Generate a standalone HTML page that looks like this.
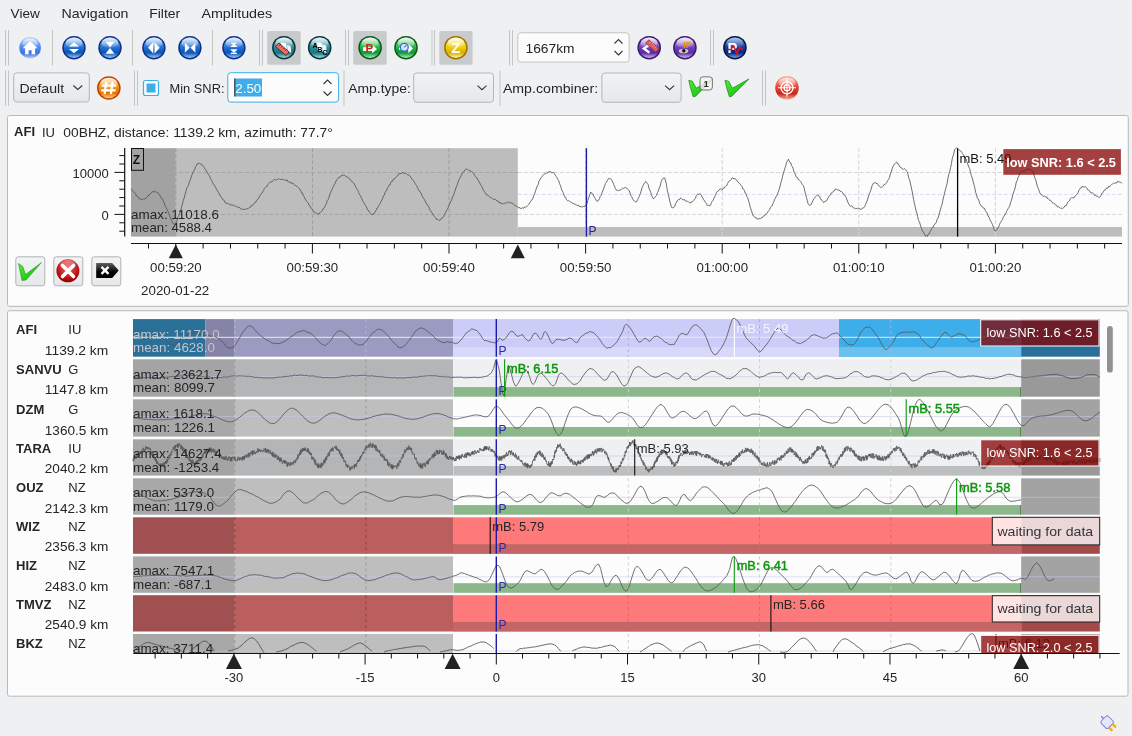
<!DOCTYPE html>
<html><head><meta charset="utf-8"><style>
html,body{margin:0;padding:0;background:#eff0f1;width:1132px;height:736px;overflow:hidden}
svg{display:block;will-change:transform}
text{font-family:"Liberation Sans",sans-serif;white-space:pre}
</style></head><body>
<svg width="1132" height="736" viewBox="0 0 1132 736">
<defs><linearGradient id="g_blue" x1="0" y1="0" x2="0" y2="1"><stop offset="0" stop-color="#9cc8f4"/><stop offset="0.5" stop-color="#1f6fd0"/><stop offset="0.75" stop-color="#0d55b8"/><stop offset="1" stop-color="#9cc8f4"/></linearGradient><linearGradient id="g_home" x1="0" y1="0" x2="0" y2="1"><stop offset="0" stop-color="#b8d0fa"/><stop offset="0.5" stop-color="#4f86f0"/><stop offset="0.75" stop-color="#3c74e0"/><stop offset="1" stop-color="#b8d0fa"/></linearGradient><linearGradient id="g_teal" x1="0" y1="0" x2="0" y2="1"><stop offset="0" stop-color="#a8d8dc"/><stop offset="0.5" stop-color="#2a8c96"/><stop offset="0.75" stop-color="#167580"/><stop offset="1" stop-color="#a8d8dc"/></linearGradient><linearGradient id="g_green" x1="0" y1="0" x2="0" y2="1"><stop offset="0" stop-color="#b0f0b8"/><stop offset="0.5" stop-color="#22b048"/><stop offset="0.75" stop-color="#10983a"/><stop offset="1" stop-color="#b0f0b8"/></linearGradient><linearGradient id="g_yellow" x1="0" y1="0" x2="0" y2="1"><stop offset="0" stop-color="#fff6b0"/><stop offset="0.5" stop-color="#f0cc00"/><stop offset="0.75" stop-color="#d8b000"/><stop offset="1" stop-color="#fff6b0"/></linearGradient><linearGradient id="g_purple" x1="0" y1="0" x2="0" y2="1"><stop offset="0" stop-color="#d0b8f0"/><stop offset="0.5" stop-color="#7040b8"/><stop offset="0.75" stop-color="#5a2aa0"/><stop offset="1" stop-color="#d0b8f0"/></linearGradient><linearGradient id="g_navy" x1="0" y1="0" x2="0" y2="1"><stop offset="0" stop-color="#7aa0e0"/><stop offset="0.5" stop-color="#0a3aa0"/><stop offset="0.75" stop-color="#062a80"/><stop offset="1" stop-color="#7aa0e0"/></linearGradient><linearGradient id="g_orange" x1="0" y1="0" x2="0" y2="1"><stop offset="0" stop-color="#ffd080"/><stop offset="0.5" stop-color="#f59010"/><stop offset="0.75" stop-color="#e87000"/><stop offset="1" stop-color="#ffd080"/></linearGradient><linearGradient id="g_red" x1="0" y1="0" x2="0" y2="1"><stop offset="0" stop-color="#ffb0a0"/><stop offset="0.5" stop-color="#e04030"/><stop offset="0.75" stop-color="#c82818"/><stop offset="1" stop-color="#ffb0a0"/></linearGradient><linearGradient id="hl" x1="0" y1="0" x2="0" y2="1"><stop offset="0" stop-color="#fff" stop-opacity="0.75"/><stop offset="1" stop-color="#fff" stop-opacity="0.05"/></linearGradient><linearGradient id="btn" x1="0" y1="0" x2="0" y2="1"><stop offset="0" stop-color="#f2f3f4"/><stop offset="1" stop-color="#e6e7e9"/></linearGradient><linearGradient id="chk" x1="0" y1="0" x2="1" y2="1"><stop offset="0" stop-color="#50f030"/><stop offset="1" stop-color="#10b010"/></linearGradient><radialGradient id="redx" cx="0.5" cy="0.35" r="0.6"><stop offset="0" stop-color="#ff6060"/><stop offset="1" stop-color="#a00000"/></radialGradient><linearGradient id="blk" x1="0" y1="0" x2="0" y2="1"><stop offset="0" stop-color="#606060"/><stop offset="0.6" stop-color="#000"/></linearGradient></defs>
<text x="10.6" y="18.0" font-size="13" fill="#232627" textLength="29.2" lengthAdjust="spacingAndGlyphs">View</text>
<text x="61.5" y="18.0" font-size="13" fill="#232627" textLength="67.0" lengthAdjust="spacingAndGlyphs">Navigation</text>
<text x="149.2" y="18.0" font-size="13" fill="#232627" textLength="31.0" lengthAdjust="spacingAndGlyphs">Filter</text>
<text x="201.4" y="18.0" font-size="13" fill="#232627" textLength="70.8" lengthAdjust="spacingAndGlyphs">Amplitudes</text>
<line x1="5.50" y1="30.00" x2="5.50" y2="65.50" stroke="#c3c4c6" stroke-width="1"/>
<line x1="8.50" y1="30.00" x2="8.50" y2="65.50" stroke="#c3c4c6" stroke-width="1"/>
<line x1="52.50" y1="30.00" x2="52.50" y2="65.50" stroke="#c3c4c6" stroke-width="1"/>
<line x1="132.50" y1="30.00" x2="132.50" y2="65.50" stroke="#c3c4c6" stroke-width="1"/>
<line x1="212.50" y1="30.00" x2="212.50" y2="65.50" stroke="#c3c4c6" stroke-width="1"/>
<line x1="259.50" y1="30.00" x2="259.50" y2="65.50" stroke="#c3c4c6" stroke-width="1"/>
<line x1="262.50" y1="30.00" x2="262.50" y2="65.50" stroke="#c3c4c6" stroke-width="1"/>
<line x1="345.50" y1="30.00" x2="345.50" y2="65.50" stroke="#c3c4c6" stroke-width="1"/>
<line x1="348.50" y1="30.00" x2="348.50" y2="65.50" stroke="#c3c4c6" stroke-width="1"/>
<line x1="432.00" y1="30.00" x2="432.00" y2="65.50" stroke="#c3c4c6" stroke-width="1"/>
<line x1="434.50" y1="30.00" x2="434.50" y2="65.50" stroke="#c3c4c6" stroke-width="1"/>
<line x1="509.50" y1="30.00" x2="509.50" y2="65.50" stroke="#c3c4c6" stroke-width="1"/>
<line x1="512.50" y1="30.00" x2="512.50" y2="65.50" stroke="#c3c4c6" stroke-width="1"/>
<line x1="710.50" y1="30.00" x2="710.50" y2="65.50" stroke="#c3c4c6" stroke-width="1"/>
<line x1="713.50" y1="30.00" x2="713.50" y2="65.50" stroke="#c3c4c6" stroke-width="1"/>
<line x1="5.50" y1="70.50" x2="5.50" y2="105.80" stroke="#c3c4c6" stroke-width="1"/>
<line x1="8.50" y1="70.50" x2="8.50" y2="105.80" stroke="#c3c4c6" stroke-width="1"/>
<line x1="134.50" y1="70.50" x2="134.50" y2="105.80" stroke="#c3c4c6" stroke-width="1"/>
<line x1="137.50" y1="70.50" x2="137.50" y2="105.80" stroke="#c3c4c6" stroke-width="1"/>
<line x1="344.00" y1="70.50" x2="344.00" y2="105.80" stroke="#c3c4c6" stroke-width="1"/>
<line x1="500.00" y1="70.50" x2="500.00" y2="105.80" stroke="#c3c4c6" stroke-width="1"/>
<line x1="762.50" y1="70.50" x2="762.50" y2="105.80" stroke="#c3c4c6" stroke-width="1"/>
<line x1="765.50" y1="70.50" x2="765.50" y2="105.80" stroke="#c3c4c6" stroke-width="1"/>
<rect x="267.2" y="31.0" width="33.5" height="33.7" rx="2" fill="#c9cacc"/>
<rect x="353.2" y="31.0" width="33.5" height="33.7" rx="2" fill="#c9cacc"/>
<rect x="439.3" y="31.0" width="33.3" height="33.7" rx="2" fill="#c9cacc"/>
<circle cx="30.1" cy="47.7" r="10.8" fill="url(#g_home)"/>
<ellipse cx="30.1" cy="43.2" rx="7.8" ry="4.9" fill="url(#hl)" opacity="1.00"/>
<polygon points="22.6,48.2 30.1,41.2 37.6,48.2" fill="#fff"/>
<path d="M25.1 47.7h10v6.5h-3.5v-4h-3v4h-3.5z" fill="#fff"/>
<circle cx="74.0" cy="47.7" r="11.7" fill="#0b2f8a"/>
<circle cx="74.0" cy="47.7" r="10.2" fill="url(#g_blue)"/>
<ellipse cx="74.0" cy="42.8" rx="8.4" ry="5.3" fill="url(#hl)" opacity="1.00"/>
<polygon points="69.0,46.5 74.0,42.2 79.0,46.5" fill="#fff"/>
<polygon points="69.0,48.9 74.0,53.2 79.0,48.9" fill="#fff"/>
<circle cx="110.0" cy="47.7" r="11.7" fill="#0b2f8a"/>
<circle cx="110.0" cy="47.7" r="10.2" fill="url(#g_blue)"/>
<ellipse cx="110.0" cy="42.8" rx="8.4" ry="5.3" fill="url(#hl)" opacity="1.00"/>
<polygon points="105.5,41.7 114.5,41.7 110.0,47.4" fill="#fff"/>
<polygon points="105.5,53.7 114.5,53.7 110.0,48.0" fill="#fff"/>
<circle cx="153.9" cy="47.7" r="11.7" fill="#0b2f8a"/>
<circle cx="153.9" cy="47.7" r="10.2" fill="url(#g_blue)"/>
<ellipse cx="153.9" cy="42.8" rx="8.4" ry="5.3" fill="url(#hl)" opacity="1.00"/>
<polygon points="153.3,42.0 148.1,47.7 153.3,53.4" fill="#fff"/>
<polygon points="154.5,42.0 159.7,47.7 154.5,53.4" fill="#fff"/>
<circle cx="189.9" cy="47.7" r="11.7" fill="#0b2f8a"/>
<circle cx="189.9" cy="47.7" r="10.2" fill="url(#g_blue)"/>
<ellipse cx="189.9" cy="42.8" rx="8.4" ry="5.3" fill="url(#hl)" opacity="1.00"/>
<polygon points="184.9,42.7 189.7,47.7 184.9,52.7" fill="#fff"/>
<polygon points="195.4,42.7 190.6,47.7 195.4,52.7" fill="#fff"/>
<circle cx="233.9" cy="47.7" r="11.7" fill="#0b2f8a"/>
<circle cx="233.9" cy="47.7" r="10.2" fill="url(#g_blue)"/>
<ellipse cx="233.9" cy="42.8" rx="8.4" ry="5.3" fill="url(#hl)" opacity="1.00"/>
<polygon points="233.9,43.4 230.3,46.9 237.5,46.9" fill="#fff"/>
<rect x="231.4" y="42.7" width="5" height="1.3" fill="#fff"/>
<polygon points="230.1,49.3 237.7,49.3 233.9,52.9" fill="#fff"/>
<rect x="230.9" y="52.6" width="6" height="1.4" fill="#fff"/>
<circle cx="283.9" cy="47.7" r="11.8" fill="#0a3440"/>
<circle cx="283.9" cy="47.7" r="10.3" fill="url(#g_teal)"/>
<ellipse cx="283.9" cy="42.7" rx="8.5" ry="5.3" fill="url(#hl)" opacity="1.00"/>
<polygon points="281,42.3 286,43.4 287.4,51.6 282.4,50.4" fill="#fff"/><polygon points="287,45 290.8,46.2 291.2,52.8 287.6,51.8" fill="#f2f2f2"/>
<g transform="translate(282.4 49.3) rotate(41)"><rect x="-6.8" y="-2.4" width="13.6" height="4.8" fill="#f06a6a" stroke="#401010" stroke-width="0.7"/><path d="M-4.5 -2.4v1.6M-2 -2.4v1.6M0.5 -2.4v1.6M3 -2.4v1.6" stroke="#401010" stroke-width="0.7"/></g>
<circle cx="319.7" cy="47.7" r="11.8" fill="#0a3440"/>
<circle cx="319.7" cy="47.7" r="10.3" fill="url(#g_teal)"/>
<ellipse cx="319.7" cy="42.7" rx="8.5" ry="5.3" fill="url(#hl)" opacity="1.00"/>
<polygon points="317,42 321.8,43 322.4,51.2 317.5,50.2" fill="#fff"/><polygon points="322,44.6 326.3,45.6 326.6,52.8 322.4,52" fill="#f2f2f2"/>
<text x="312.6" y="47.9" font-size="7.2" font-weight="bold" fill="#000">A</text>
<text x="317.2" y="51.7" font-size="7.2" font-weight="bold" fill="#000">B</text>
<text x="322.3" y="54.6" font-size="7.2" font-weight="bold" fill="#000">C</text>
<circle cx="370.1" cy="47.7" r="11.8" fill="#0a5a1a"/>
<circle cx="370.1" cy="47.7" r="10.3" fill="url(#g_green)"/>
<ellipse cx="370.1" cy="42.7" rx="8.5" ry="5.3" fill="url(#hl)" opacity="1.00"/>
<path d="M363 47.3h9.2v-2.3l4.8 4.1l-4.8 4.1v-2.3h-9.2z" fill="#fff"/>
<text x="365.6" y="51.8" font-size="11.5" font-weight="bold" fill="#f01010">P</text>
<circle cx="406.0" cy="47.7" r="11.8" fill="#0a5a1a"/>
<circle cx="406.0" cy="47.7" r="10.3" fill="url(#g_green)"/>
<ellipse cx="406.0" cy="42.7" rx="8.5" ry="5.3" fill="url(#hl)" opacity="1.00"/>
<path d="M399 47.4h9.3v-3.4l4.6 4.6l-4.6 4.6v-3.4h-9.3z" fill="#fff"/>
<circle cx="404.3" cy="47.3" r="3.9" fill="#cfeaff" stroke="#3a6ad8" stroke-width="1.3"/>
<path d="M404.3 47.3l1.8 -2" stroke="#222" stroke-width="1"/>
<circle cx="455.9" cy="47.7" r="11.8" fill="#9a7400"/>
<circle cx="455.9" cy="47.7" r="10.3" fill="url(#g_yellow)"/>
<ellipse cx="455.9" cy="42.7" rx="8.5" ry="5.3" fill="url(#hl)" opacity="1.00"/>
<text x="455.9" y="53.2" font-size="15" font-weight="bold" fill="#fff" text-anchor="middle">Z</text>
<circle cx="649.2" cy="47.7" r="11.8" fill="#3a1a70"/>
<circle cx="649.2" cy="47.7" r="10.3" fill="url(#g_purple)"/>
<ellipse cx="649.2" cy="42.7" rx="8.5" ry="5.3" fill="url(#hl)" opacity="1.00"/>
<path d="M649.4 44.8L643.9 48.5L649.4 52.6" fill="none" stroke="#fff" stroke-width="2.4" stroke-linejoin="miter"/>
<g transform="translate(652.3 46) rotate(42)"><rect x="-6.8" y="-2.3" width="13.6" height="4.6" fill="#e05a5a" stroke="#7a2020" stroke-width="0.6"/><path d="M-4 -2.3v2M-1.5 -2.3v1.5M1 -2.3v2M3.5 -2.3v1.5" stroke="#fff" stroke-width="0.5"/></g>
<circle cx="684.9" cy="47.7" r="11.8" fill="#3a1a70"/>
<circle cx="684.9" cy="47.7" r="10.3" fill="url(#g_purple)"/>
<ellipse cx="684.9" cy="42.7" rx="8.5" ry="5.3" fill="url(#hl)" opacity="1.00"/>
<text x="683.3" y="47.5" font-size="8.5" font-weight="bold" fill="#f08a10">IP</text>
<ellipse cx="683.5" cy="51" rx="4.8" ry="2.3" fill="#c8c8c8"/><circle cx="683.8" cy="50.8" r="1.7" fill="#111"/>
<circle cx="734.9" cy="47.7" r="11.8" fill="#02174a"/>
<circle cx="734.9" cy="47.7" r="10.3" fill="url(#g_navy)"/>
<ellipse cx="734.9" cy="42.7" rx="8.5" ry="5.3" fill="url(#hl)" opacity="0.55"/>
<text x="727.6" y="53" font-size="14.8" font-weight="bold" fill="#fff">P</text>
<path d="M727.7 49.6L731.2 49.4L733 45.8L735 48.6L736.8 54L739.6 46.9L742.8 49.7" fill="none" stroke="#f01010" stroke-width="1.5" stroke-linejoin="round"/>
<rect x="517.8" y="32.8" width="111.3" height="29.3" rx="3" fill="#fcfcfc" stroke="#bfc1c3" stroke-width="1"/>
<text x="525.5" y="52.6" font-size="13" fill="#232627" textLength="49.0" lengthAdjust="spacingAndGlyphs">1667km</text>
<path d="M614.5 43.5l4 -4l4 4M614.5 51l4 4l4 -4" fill="none" stroke="#31363b" stroke-width="1.1"/>
<rect x="13.7" y="72.9" width="75.6" height="29.1" rx="3" fill="url(#btn)" stroke="#b4b6b8" stroke-width="1"/>
<path d="M73.3 85.5l4.5 4l4.5 -4" fill="none" stroke="#31363b" stroke-width="1.1"/>
<text x="19.4" y="93.2" font-size="13" fill="#232627" textLength="44.7" lengthAdjust="spacingAndGlyphs">Default</text>
<circle cx="108.8" cy="88.0" r="11.8" fill="#c04000"/>
<circle cx="108.8" cy="88.0" r="10.3" fill="url(#g_orange)"/>
<ellipse cx="108.8" cy="83.0" rx="8.5" ry="5.3" fill="url(#hl)" opacity="1.00"/>
<path d="M106.3 81.8L104.6 94.2M112.6 81.8L110.9 94.2M101.8 85.6H116.2M101.2 90.4H115.6" stroke="#fff" stroke-width="2.3" fill="none"/>
<rect x="143.5" y="80.5" width="15" height="15" rx="2" fill="#fcfcfc" stroke="#3daee9" stroke-width="1.2"/>
<rect x="146.5" y="83.5" width="9" height="9" fill="#3daee9"/>
<text x="169.5" y="93.2" font-size="13" fill="#232627" textLength="55.0" lengthAdjust="spacingAndGlyphs">Min SNR:</text>
<rect x="227.8" y="72.7" width="110.8" height="29.4" rx="3" fill="#fcfcfc" stroke="#3daee9" stroke-width="1"/>
<rect x="234.5" y="78.5" width="27.5" height="18" fill="#3daee9"/>
<line x1="234.80" y1="78.50" x2="234.80" y2="96.50" stroke="#232627" stroke-width="1"/>
<text x="235.3" y="93.2" font-size="13" fill="#fcfcfc" textLength="26.0" lengthAdjust="spacingAndGlyphs">2.50</text>
<path d="M323.5 84l4 -4l4 4M323.5 91.5l4 4l4 -4" fill="none" stroke="#31363b" stroke-width="1.1"/>
<text x="348.3" y="93.2" font-size="13" fill="#232627" textLength="62.5" lengthAdjust="spacingAndGlyphs">Amp.type:</text>
<rect x="413.7" y="73.0" width="79.8" height="29.3" rx="3" fill="url(#btn)" stroke="#b4b6b8" stroke-width="1"/>
<path d="M477.5 85.7l4.5 4l4.5 -4" fill="none" stroke="#31363b" stroke-width="1.1"/>
<text x="502.9" y="93.2" font-size="13" fill="#232627" textLength="95.2" lengthAdjust="spacingAndGlyphs">Amp.combiner:</text>
<rect x="601.9" y="73.0" width="79.2" height="29.3" rx="3" fill="url(#btn)" stroke="#b4b6b8" stroke-width="1"/>
<path d="M665.1 85.7l4.5 4l4.5 -4" fill="none" stroke="#31363b" stroke-width="1.1"/>
<polygon points="688.8,80.3 692.4,81.2 696.2,88.2 712.7,79.0 695.4,96.4 693.2,96.8 690.4,87.4" fill="url(#chk)" stroke="#0a8a0a" stroke-width="0.7" stroke-linejoin="round"/>
<rect x="700" y="76.8" width="12.4" height="13.2" rx="3" fill="#f4f4f4" fill-opacity="0.8" stroke="#666" stroke-width="0.9"/>
<text x="706.2" y="87.3" font-size="9.5" font-weight="bold" fill="#333" text-anchor="middle">1</text>
<polygon points="725.0,80.3 728.6,81.2 732.4,88.2 748.9,79.0 731.6,96.4 729.4,96.8 726.6,87.4" fill="url(#chk)" stroke="#0a8a0a" stroke-width="0.7" stroke-linejoin="round"/>
<circle cx="787.0" cy="87.8" r="11.8" fill="url(#g_red)"/>
<ellipse cx="787.0" cy="82.8" rx="8.5" ry="5.3" fill="url(#hl)" opacity="1.00"/>
<circle cx="787.0" cy="87.8" r="6" fill="none" stroke="#fff" stroke-width="1.3"/><circle cx="787.0" cy="87.8" r="3" fill="none" stroke="#fff" stroke-width="1.3"/>
<path d="M778.0 87.8h18M787.0 78.8v18" stroke="#fff" stroke-width="1.1"/>
<rect x="7.5" y="115.5" width="1120.8" height="190.8" rx="2" fill="#fcfcfc" stroke="#b9babc" stroke-width="1"/>
<text x="14.1" y="136.4" font-size="13" fill="#232627" font-weight="bold">AFI</text>
<text x="42.0" y="136.6" font-size="13" fill="#232627">IU</text>
<text x="63.3" y="136.6" font-size="13" fill="#232627" textLength="269.5" lengthAdjust="spacingAndGlyphs">00BHZ, distance: 1139.2 km, azimuth: 77.7°</text>
<rect x="131.00" y="148.20" width="44.80" height="88.40" fill="#a2a2a2"/>
<rect x="175.80" y="148.20" width="342.00" height="88.40" fill="#bdbdbd"/>
<rect x="517.80" y="227.00" width="604.20" height="9.60" fill="#bdbdbd"/>
<line x1="131.0" y1="172.5" x2="517.8" y2="172.5" stroke="#a4a4a4" stroke-width="1" stroke-dasharray="4 2"/>
<line x1="131.0" y1="214.4" x2="517.8" y2="214.4" stroke="#a4a4a4" stroke-width="1" stroke-dasharray="4 2"/>
<line x1="517.8" y1="172.5" x2="1122.0" y2="172.5" stroke="#d6d6d6" stroke-width="1" stroke-dasharray="4 2"/>
<line x1="517.8" y1="214.4" x2="1122.0" y2="214.4" stroke="#d6d6d6" stroke-width="1" stroke-dasharray="4 2"/>
<line x1="517.80" y1="194.40" x2="1122.00" y2="194.40" stroke="#dcdcf4" stroke-width="1" stroke-dasharray="4 2"/>
<line x1="175.8" y1="148.2" x2="175.8" y2="236.6" stroke="#9c9c9c" stroke-width="1" stroke-dasharray="4 2"/>
<line x1="312.4" y1="148.2" x2="312.4" y2="236.6" stroke="#9c9c9c" stroke-width="1" stroke-dasharray="4 2"/>
<line x1="449.0" y1="148.2" x2="449.0" y2="236.6" stroke="#9c9c9c" stroke-width="1" stroke-dasharray="4 2"/>
<line x1="585.6" y1="148.2" x2="585.6" y2="236.6" stroke="#d4d4d4" stroke-width="1" stroke-dasharray="4 2"/>
<line x1="722.2" y1="148.2" x2="722.2" y2="236.6" stroke="#d4d4d4" stroke-width="1" stroke-dasharray="4 2"/>
<line x1="858.8" y1="148.2" x2="858.8" y2="236.6" stroke="#d4d4d4" stroke-width="1" stroke-dasharray="4 2"/>
<line x1="995.4" y1="148.2" x2="995.4" y2="236.6" stroke="#d4d4d4" stroke-width="1" stroke-dasharray="4 2"/>
<path d="M131.2 188.7L131.7 189.7L132.2 190.1L132.9 191.3L133.7 192.3L134.5 192.4L135.4 193.4L136.3 195.8L137.2 195.9L138.2 196.8L139.1 198.8L140.1 198.7L141.0 199.7L141.9 199.4L142.7 199.6L143.6 198.6L144.5 198.9L145.4 198.7L146.3 197.5L147.2 197.1L148.1 196.1L149.0 194.3L149.9 194.6L150.8 193.6L151.6 192.4L152.4 191.4L153.1 192.3L153.8 191.5L155.0 191.7L155.9 192.0L156.7 192.0L157.5 192.9L158.2 192.8L158.9 194.4L159.8 195.0L160.6 197.1L161.5 198.5L162.4 199.0L163.3 201.0L164.3 203.1L165.2 206.3L166.1 207.4L167.0 209.6L167.9 211.1L168.8 213.6L169.7 215.8L170.6 218.0L171.5 220.5L172.4 222.2L173.3 223.9L174.1 224.1L175.0 224.3L175.8 223.2L176.6 221.9L177.4 219.4L178.3 216.3L179.1 214.9L180.0 212.5L180.8 210.0L181.6 206.8L182.4 204.1L183.3 200.2L184.2 198.0L185.1 194.4L186.1 190.7L187.2 187.3L187.9 186.6L188.7 184.7L189.5 181.1L190.3 180.0L191.2 177.1L192.1 174.4L193.0 172.4L193.9 171.1L194.7 169.4L195.6 166.3L196.4 165.8L197.2 163.7L198.0 163.9L198.9 162.8L199.8 163.6L200.6 164.0L201.4 163.9L202.2 165.7L203.0 165.7L203.8 166.6L204.6 168.8L205.4 169.3L206.3 170.8L207.1 172.3L208.0 174.0L208.8 174.7L209.7 176.1L210.6 179.0L211.5 179.8L212.4 182.5L213.3 184.0L214.1 184.8L215.0 186.5L215.9 188.0L216.8 189.7L217.6 191.0L218.5 192.5L219.4 194.0L220.2 196.0L221.1 196.7L221.9 197.9L222.8 199.6L223.7 200.0L224.5 201.1L225.4 203.1L226.3 203.1L227.1 203.7L228.0 203.3L228.8 204.3L229.7 204.8L230.6 204.1L231.4 205.2L232.3 205.4L233.2 204.7L234.1 205.8L235.0 205.8L235.8 206.5L236.6 206.3L237.4 207.3L238.2 207.8L239.0 207.0L239.9 207.5L240.7 208.9L241.5 209.7L242.4 208.8L243.2 209.3L244.0 209.7L244.9 209.2L245.7 209.2L246.5 208.9L247.4 208.6L248.2 208.6L249.0 207.6L249.9 207.1L250.7 207.1L251.5 205.3L252.4 205.4L253.2 204.9L254.0 203.4L254.8 202.4L255.6 202.5L256.4 200.7L257.2 199.6L258.1 198.9L258.9 198.1L259.7 195.9L260.5 194.9L261.3 193.6L262.1 193.1L262.8 191.2L263.6 190.6L264.4 188.3L265.2 187.5L266.0 187.0L266.9 186.5L267.7 184.9L268.5 183.6L269.3 182.7L270.1 182.6L270.9 181.4L271.8 181.8L272.7 181.3L273.6 179.8L274.5 179.5L275.5 180.1L276.2 179.7L277.0 179.8L277.8 179.0L278.6 178.7L279.4 178.9L280.3 179.8L281.1 179.0L282.0 179.3L282.8 179.5L283.7 179.7L284.6 179.9L285.4 180.9L286.2 179.9L287.1 179.9L287.8 181.7L288.6 181.9L289.5 182.4L290.4 181.9L291.2 183.2L292.0 183.6L292.8 182.9L293.6 184.2L294.4 184.9L295.2 185.3L296.0 185.7L296.8 186.1L297.6 187.0L298.4 187.7L299.3 188.4L300.1 190.2L300.9 190.8L301.7 192.9L302.5 193.0L303.4 195.8L304.2 196.9L305.1 198.7L305.9 200.2L306.8 201.6L307.6 202.5L308.4 203.0L309.2 205.5L309.9 205.7L310.6 207.0L311.3 208.5L312.4 209.7L313.4 210.7L314.3 212.6L315.1 212.9L315.9 213.0L316.7 213.3L317.5 214.4L318.4 213.7L319.2 213.9L319.9 212.7L320.7 211.8L321.5 211.4L322.2 210.9L323.0 208.6L323.8 208.3L324.7 207.0L325.6 205.2L326.4 203.7L327.2 200.6L328.1 199.6L328.9 197.8L329.8 194.3L330.7 192.4L331.6 190.2L332.5 188.5L333.4 186.3L334.3 184.6L335.1 183.6L336.0 181.0L336.8 179.8L337.6 178.8L338.4 177.7L339.2 176.8L340.0 177.5L340.8 176.7L341.7 175.1L342.6 175.5L343.5 175.2L344.3 175.3L345.0 175.6L345.8 176.5L346.7 176.9L347.5 177.1L348.4 177.5L349.2 178.5L350.1 179.0L350.9 180.5L351.8 181.7L352.6 182.2L353.4 182.7L354.2 183.9L355.1 185.5L356.0 187.4L356.9 189.2L357.8 190.3L358.7 192.7L359.5 194.3L360.4 195.7L361.2 197.4L362.1 199.3L362.9 201.2L363.7 202.2L364.6 204.2L365.5 205.4L366.3 206.7L367.1 208.7L368.0 210.4L368.8 210.8L369.6 212.4L370.4 213.3L371.3 214.6L372.1 214.9L372.9 213.8L373.7 214.1L374.6 213.0L375.4 211.1L376.2 210.1L377.0 208.0L377.8 207.6L378.7 205.7L379.5 204.5L380.4 202.8L381.2 201.3L381.9 200.0L382.7 198.2L383.5 195.9L384.3 195.0L385.1 192.5L385.9 191.1L386.7 190.5L387.5 187.8L388.4 186.4L389.2 185.0L390.0 185.0L390.8 182.7L391.6 181.3L392.5 181.4L393.3 179.2L394.2 179.3L395.0 178.0L395.8 177.3L396.7 176.7L397.5 175.3L398.4 175.0L399.2 173.3L400.0 174.0L400.9 173.3L401.8 173.4L402.6 172.4L403.5 173.4L404.3 173.8L405.2 172.7L406.1 173.4L406.9 174.2L407.8 175.2L408.6 174.9L409.5 175.5L410.3 176.4L411.1 177.9L411.9 179.1L412.7 179.6L413.5 180.8L414.3 182.1L415.1 183.3L415.9 184.8L416.7 185.6L417.5 187.6L418.3 189.7L419.1 190.2L420.0 192.1L420.8 192.7L421.7 195.1L422.6 196.8L423.5 198.2L424.4 199.6L425.2 201.1L426.1 202.9L426.9 204.8L427.8 205.1L428.6 206.4L429.5 208.9L430.4 210.7L431.2 211.6L432.1 213.0L433.0 214.9L433.8 215.4L434.6 216.7L435.4 217.6L436.2 219.1L437.0 219.2L437.9 219.4L438.8 220.3L439.7 220.5L440.6 219.0L441.4 219.0L442.3 217.6L443.2 217.3L444.1 215.5L444.9 213.8L445.7 212.3L446.6 210.3L447.4 209.3L448.3 207.2L449.2 204.9L450.0 203.2L450.9 201.1L451.7 199.8L452.5 196.9L453.4 195.9L454.4 192.5L455.3 190.1L456.1 187.3L457.0 185.4L457.8 183.0L458.7 180.4L459.6 178.4L460.5 177.0L461.3 175.6L462.2 173.3L463.1 172.5L463.9 171.8L464.8 170.1L465.8 169.1L466.8 168.9L467.6 169.7L468.4 169.9L469.2 170.7L470.1 171.1L471.0 170.8L471.8 171.6L472.7 172.6L473.6 173.5L474.5 175.3L475.4 176.7L476.3 177.8L477.2 178.0L478.0 180.4L478.9 181.1L479.8 183.0L480.7 185.2L481.5 185.9L482.4 187.6L483.3 190.4L484.2 191.1L485.0 192.5L485.9 194.0L486.8 195.1L487.7 194.9L488.6 196.1L489.5 196.9L490.4 197.5L491.2 197.5L492.1 198.5L493.0 199.5L493.8 198.9L494.6 199.6L495.4 199.3L496.3 200.1L497.2 201.2L498.0 200.8L498.8 202.5L499.5 203.0L500.3 202.1L501.1 203.8L501.8 203.1L502.6 203.9L503.5 203.9L504.3 203.0L505.1 203.4L505.9 203.0L506.7 202.9L507.6 201.8L508.6 202.5L509.7 203.0L510.4 202.8L511.2 202.9L512.0 202.7L512.8 203.8L513.7 204.2L514.6 205.4L515.5 205.9L516.4 206.3L517.3 206.3L518.2 207.5L519.1 207.9L520.0 207.5L520.8 208.8L521.6 208.4L522.5 207.5L523.3 208.6L524.2 207.1L525.0 207.1L525.8 207.3L526.6 206.6L527.3 205.9L528.1 205.3L528.9 204.2L529.6 203.0L530.4 201.8L531.2 200.4L532.1 199.9L532.9 198.1L533.8 195.7L534.7 193.7L535.6 190.7L536.5 188.1L537.3 185.9L538.2 184.4L539.0 181.0L539.9 179.9L540.7 178.0L541.6 177.5L542.5 175.7L543.3 174.8L544.2 174.2L545.0 173.8L545.8 173.7L546.6 172.7L547.4 173.3L548.2 171.9L549.0 172.0L549.8 171.6L550.7 171.6L551.4 172.7L552.2 172.8L553.0 172.2L553.8 172.7L554.5 173.8L555.4 175.2L556.2 176.5L557.0 177.8L557.8 179.4L558.7 180.7L559.5 183.4L560.4 185.5L561.3 188.5L562.1 190.8L563.0 192.4L563.8 194.4L564.6 196.8L565.5 197.0L566.3 199.3L567.1 200.3L567.9 201.0L568.7 200.6L569.5 201.3L570.5 201.9L571.7 202.5L572.4 203.4L573.1 203.3L573.9 203.2L574.7 204.5L575.6 204.4L576.5 205.0L577.4 205.6L578.3 204.9L579.2 206.5L580.1 206.7L581.0 206.6L581.9 206.9L582.7 206.9L583.5 206.5L584.2 206.9L584.8 205.9L586.0 205.4L587.0 203.6L587.8 200.7L588.5 198.2L589.2 196.4L589.9 194.3L590.8 192.1L591.5 193.2L592.3 193.7L593.0 194.0L593.7 196.0L594.5 197.4L595.3 198.6L596.1 200.3L597.0 201.4L598.0 200.1L598.7 200.2L599.5 198.6L600.3 196.1L601.1 195.3L602.0 192.7L602.8 191.0L603.7 188.3L604.6 186.1L605.5 183.4L606.3 182.3L607.2 180.9L607.9 179.6L608.7 178.3L609.6 178.7L610.5 178.8L611.3 179.3L612.1 180.7L612.9 182.4L613.7 184.5L614.5 186.2L615.3 188.3L616.1 189.9L617.0 190.4L617.8 190.4L618.5 190.8L619.3 190.0L620.1 189.9L620.9 189.9L621.7 188.8L622.5 188.0L623.4 188.7L624.2 188.1L625.0 187.4L625.8 187.4L626.6 188.0L627.5 189.0L628.3 189.6L629.2 190.8L630.1 193.0L630.9 195.8L631.8 196.6L632.6 198.9L633.5 200.0L634.4 201.1L635.2 201.7L636.1 202.1L637.0 201.1L637.8 199.5L638.7 197.6L639.6 195.4L640.5 193.3L641.4 190.0L642.2 187.3L643.1 185.7L643.9 183.8L644.8 182.9L645.6 181.3L646.5 182.2L647.3 183.4L648.2 184.7L649.0 188.5L649.8 189.9L650.7 192.3L651.5 195.2L652.3 196.6L653.1 198.6L654.0 198.5L654.8 197.5L655.7 196.2L656.5 195.5L657.4 192.6L658.3 191.0L659.2 188.0L660.1 186.2L660.9 182.8L661.6 180.7L662.3 179.1L662.9 178.9L664.3 177.6L665.0 178.9L666.0 182.5L666.7 186.3L667.4 190.6L668.3 194.5L669.1 198.0L670.0 202.2L671.0 205.6L671.9 207.7L672.6 207.8L673.3 207.4L674.0 207.4L674.8 206.3L675.5 203.4L676.3 202.9L677.2 200.6L678.1 199.9L679.1 199.4L679.8 199.3L680.6 197.9L681.4 198.5L682.3 199.3L683.1 200.2L684.1 199.3L685.0 200.1L685.9 201.5L686.8 200.7L687.7 201.6L688.6 201.8L689.4 202.6L690.2 203.1L691.0 201.8L692.0 202.2L692.9 201.4L693.7 200.6L694.6 198.9L695.4 198.3L696.1 196.1L696.9 195.2L697.7 194.0L698.5 194.4L699.4 193.9L700.2 194.0L701.1 194.7L701.9 196.8L702.8 198.0L703.7 199.8L704.6 200.9L705.5 202.6L706.4 203.4L707.2 205.4L708.1 205.0L708.9 205.8L709.8 205.9L710.7 204.8L711.5 202.5L712.4 201.1L713.2 200.2L714.0 198.0L714.8 196.5L715.6 194.7L716.4 192.5L717.2 192.1L718.1 191.0L719.0 189.7L719.9 189.4L720.7 188.8L721.6 189.1L722.5 189.8L723.4 188.0L724.4 188.1L725.2 186.6L726.0 185.6L726.8 185.4L727.6 183.5L728.4 181.9L729.3 180.9L730.2 180.5L731.1 179.5L732.0 177.9L732.9 177.9L733.9 179.1L734.6 178.2L735.4 179.3L736.2 179.6L737.0 181.0L737.9 181.6L738.7 182.9L739.5 183.6L740.4 184.2L741.2 185.5L742.1 186.6L742.9 189.1L743.7 189.3L744.5 190.5L745.2 193.4L745.9 193.4L746.9 196.6L747.8 197.7L748.6 200.9L749.4 203.2L750.1 206.8L750.9 209.1L751.7 211.5L752.4 213.9L753.3 215.9L754.2 216.4L754.9 217.5L755.7 217.8L756.5 217.7L757.3 219.2L758.1 218.9L758.9 219.2L759.7 218.1L760.6 218.4L761.4 217.9L762.3 217.8L763.2 216.2L764.0 215.9L764.9 215.4L765.7 213.9L766.5 213.8L767.3 213.1L768.1 211.5L768.9 210.7L769.7 209.4L770.6 207.4L771.4 206.2L772.2 205.8L773.0 203.2L773.8 201.8L774.6 199.6L775.4 198.1L776.2 196.3L776.9 195.8L777.9 192.9L778.9 190.1L779.8 187.1L780.8 183.1L781.7 180.2L782.6 176.2L783.5 172.7L784.3 170.5L785.1 167.7L785.8 165.4L786.4 162.9L787.7 160.5L788.4 159.2L789.1 161.0L790.0 162.4L790.7 162.6L791.5 165.5L792.3 166.5L793.2 168.7L794.1 172.2L795.0 173.7L795.9 176.0L796.6 177.4L797.4 177.5L798.2 179.6L799.1 179.7L799.9 180.8L800.7 181.6L801.6 183.3L802.3 184.5L803.1 185.3L804.0 187.4L804.8 190.9L805.6 194.5L806.4 197.3L807.3 200.5L808.1 203.8L809.1 205.0L809.8 205.6L810.6 205.1L811.5 204.0L812.3 201.9L813.2 200.1L814.0 198.8L814.9 197.6L815.8 196.4L816.6 195.6L817.4 194.9L818.2 195.8L819.0 195.6L819.8 196.9L820.5 198.8L821.3 200.0L822.1 200.4L822.9 201.3L823.7 202.7L824.6 201.5L825.4 201.3L826.2 201.1L827.0 200.0L827.9 198.2L828.8 196.5L829.7 195.3L830.5 194.8L831.4 192.9L832.3 192.6L833.2 191.3L834.1 191.1L835.0 189.3L835.9 189.4L836.8 189.2L837.7 190.0L838.5 190.1L839.4 190.1L840.3 191.4L841.2 191.2L842.0 192.2L842.8 192.8L843.6 194.4L844.6 194.9L845.4 196.2L846.2 197.5L847.0 199.9L847.8 202.0L848.6 203.7L849.6 205.5L850.8 206.4L851.5 205.9L852.2 206.1L852.9 207.5L853.7 208.0L854.6 207.9L855.4 208.7L856.3 208.6L857.2 208.3L858.1 208.3L859.0 208.1L859.9 209.1L860.7 209.4L861.6 209.1L862.4 208.1L863.2 207.9L863.9 207.7L864.8 206.3L865.7 204.3L866.6 202.0L867.5 199.9L868.3 196.9L869.1 194.4L869.9 192.7L870.6 190.8L871.4 187.9L872.1 185.7L872.8 184.1L873.5 183.1L874.5 182.9L875.4 182.3L876.3 183.7L877.2 183.3L878.0 184.7L878.9 186.0L879.7 186.5L880.6 187.4L881.5 187.1L882.4 186.9L883.3 186.0L884.2 184.4L885.1 184.5L886.0 183.4L886.9 182.2L887.8 180.4L888.7 179.3L889.6 177.3L890.5 173.3L891.4 171.4L892.3 168.3L893.2 166.1L894.1 164.8L894.9 163.6L895.8 162.6L896.7 162.1L897.5 163.9L898.3 163.8L899.1 165.3L900.0 167.2L900.9 167.4L901.7 167.9L902.5 169.2L903.4 169.4L904.2 168.6L905.1 169.3L906.0 170.2L907.0 171.6L908.0 174.4L908.7 177.9L909.5 179.4L910.3 182.9L911.1 186.5L911.9 190.2L912.8 195.0L913.6 199.4L914.4 203.6L915.3 207.2L916.1 211.1L916.9 213.0L917.6 216.3L918.6 220.6L919.5 222.1L920.4 225.1L921.3 227.9L922.2 229.7L923.0 231.9L923.9 232.7L924.6 234.2L925.4 236.2L926.4 235.5L927.3 236.4L928.2 234.2L929.0 234.1L929.9 231.9L930.9 230.2L931.6 228.4L932.4 227.2L933.2 227.3L934.0 225.2L934.8 223.9L935.6 223.5L936.5 221.9L937.3 218.8L938.1 218.1L938.9 215.1L939.7 212.3L940.5 209.1L941.3 206.6L942.1 204.5L942.9 200.1L943.7 196.5L944.6 193.1L945.4 189.6L946.2 186.6L947.1 183.7L947.9 178.4L948.8 174.4L949.7 171.4L950.6 167.5L951.4 163.6L952.2 159.0L952.9 156.2L953.5 154.7L954.7 149.6L955.3 148.9L956.2 148.3L956.9 147.8L957.8 148.5L958.7 149.6L959.6 150.3L960.7 151.0L961.7 152.1L962.5 153.4L963.3 154.5L964.2 156.1L965.1 158.2L966.0 159.0L966.9 161.7L967.9 164.6L968.9 167.3L969.7 168.6L970.5 172.6L971.3 175.4L972.1 177.6L973.0 181.1L973.9 184.5L974.8 187.6L975.6 192.3L976.4 194.3L977.2 197.7L978.0 198.7L978.9 200.7L979.7 203.7L980.5 204.8L981.3 206.2L982.1 206.5L982.9 207.1L983.6 208.3L984.4 208.2L985.2 210.2L986.1 211.7L987.1 213.1L988.1 215.8L989.0 217.4L990.0 219.7L990.8 221.3L991.7 222.9L992.4 224.4L993.5 227.2L994.2 229.8L995.0 230.8L996.1 230.6L996.8 229.8L997.7 227.8L998.5 227.4L999.5 224.6L1000.4 222.5L1001.4 221.1L1002.4 219.6L1003.3 217.1L1004.1 216.2L1004.9 214.2L1005.7 213.9L1006.4 211.7L1007.2 210.3L1008.0 208.8L1008.8 207.6L1009.7 205.9L1010.5 202.9L1011.3 200.5L1012.1 198.1L1012.9 194.3L1013.8 191.8L1014.7 189.3L1015.5 186.1L1016.3 182.0L1017.2 180.6L1018.0 177.5L1018.7 176.6L1019.7 173.6L1020.6 172.0L1021.5 171.7L1022.3 171.7L1023.2 170.7L1024.1 171.1L1025.0 170.6L1025.8 169.8L1026.6 169.4L1027.4 169.4L1028.2 169.0L1029.0 168.9L1029.8 169.4L1030.7 170.1L1031.5 170.3L1032.3 170.6L1033.1 172.3L1033.9 174.6L1034.7 177.4L1035.5 179.3L1036.3 182.0L1037.1 185.2L1037.9 187.7L1038.7 189.5L1039.5 192.1L1040.3 193.9L1041.0 194.2L1041.7 195.2L1042.3 195.7L1043.1 196.1L1043.8 196.5L1044.7 196.1L1045.7 197.0L1046.8 196.9L1047.4 198.6L1048.1 198.4L1048.9 199.2L1049.6 200.5L1050.5 200.3L1051.3 200.9L1052.2 202.7L1053.1 203.2L1053.9 203.1L1054.8 203.8L1055.7 205.1L1056.6 205.2L1057.5 207.1L1058.3 206.6L1059.1 207.2L1059.9 207.8L1060.6 208.2L1061.3 208.2L1062.3 208.4L1063.3 208.1L1064.2 207.0L1065.1 205.6L1066.0 206.0L1066.8 204.4L1067.5 202.3L1068.3 201.8L1069.0 201.3L1069.6 200.8L1070.3 198.6L1071.4 197.7L1072.3 197.9L1073.1 197.4L1073.9 197.7L1074.7 197.1L1075.7 195.4L1076.4 194.7L1077.2 193.9L1077.9 193.1L1078.7 190.7L1079.5 189.7L1080.4 188.0L1081.2 187.9L1082.1 186.2L1083.0 187.3L1083.8 186.6L1084.6 187.0L1085.4 186.6L1086.2 187.5L1087.1 188.6L1087.9 190.0L1088.8 190.3L1089.6 190.7L1090.4 192.6L1091.2 192.7L1092.0 193.0L1092.9 193.1L1093.7 193.9L1094.6 195.5L1095.4 194.9L1096.2 196.0L1096.9 196.6L1097.7 196.4L1098.5 197.2L1099.3 197.3L1100.1 196.8L1100.8 195.9L1101.6 194.2L1102.3 193.0L1103.1 192.5L1103.8 191.1L1104.7 189.8L1105.5 189.9L1106.5 187.9L1107.2 188.3L1108.0 187.9L1108.9 186.0L1109.8 186.7L1110.7 185.3L1111.6 184.4L1112.6 183.9L1113.5 183.1L1114.4 183.4L1115.2 182.8L1116.0 183.2L1116.8 182.8L1117.4 181.4L1118.8 181.8L1119.9 182.1L1120.8 182.4L1121.5 183.1L1122.0 183.5" fill="none" stroke="#555" stroke-width="1" stroke-opacity="0.85"/>
<rect x="131.5" y="148.5" width="12" height="21.8" fill="none" stroke="#111" stroke-width="1"/>
<text x="132.8" y="163.5" font-size="12" fill="#111" font-weight="bold">Z</text>
<text x="131.0" y="218.5" font-size="13" fill="#232627" textLength="88.0" lengthAdjust="spacingAndGlyphs">amax: 11018.6</text>
<text x="131.0" y="232.4" font-size="13" fill="#232627" textLength="81.0" lengthAdjust="spacingAndGlyphs">mean: 4588.4</text>
<line x1="586.40" y1="148.20" x2="586.40" y2="236.60" stroke="#1c1ca8" stroke-width="1.4"/>
<text x="588.5" y="235.2" font-size="12" fill="#2424a0">P</text>
<line x1="957.60" y1="148.50" x2="957.60" y2="236.60" stroke="#000" stroke-width="1.3"/>
<text x="959.5" y="162.5" font-size="13" fill="#111">mB: 5.49</text>
<rect x="1003.30" y="149.10" width="117.60" height="25.70" fill="#840000" fill-opacity="0.74"/>
<text x="1006.2" y="166.8" font-size="13" fill="#fff" font-weight="bold" textLength="109.8" lengthAdjust="spacingAndGlyphs">low SNR: 1.6 &lt; 2.5</text>
<line x1="124.70" y1="148.00" x2="124.70" y2="236.60" stroke="#111" stroke-width="1.2"/>
<line x1="119.30" y1="231.20" x2="124.70" y2="231.20" stroke="#111" stroke-width="1"/>
<line x1="119.30" y1="222.80" x2="124.70" y2="222.80" stroke="#111" stroke-width="1"/>
<line x1="114.50" y1="214.40" x2="124.70" y2="214.40" stroke="#111" stroke-width="1"/>
<line x1="119.30" y1="206.00" x2="124.70" y2="206.00" stroke="#111" stroke-width="1"/>
<line x1="119.30" y1="197.60" x2="124.70" y2="197.60" stroke="#111" stroke-width="1"/>
<line x1="119.30" y1="189.20" x2="124.70" y2="189.20" stroke="#111" stroke-width="1"/>
<line x1="119.30" y1="180.80" x2="124.70" y2="180.80" stroke="#111" stroke-width="1"/>
<line x1="114.50" y1="172.40" x2="124.70" y2="172.40" stroke="#111" stroke-width="1"/>
<line x1="119.30" y1="164.00" x2="124.70" y2="164.00" stroke="#111" stroke-width="1"/>
<line x1="119.30" y1="155.60" x2="124.70" y2="155.60" stroke="#111" stroke-width="1"/>
<text x="108.7" y="177.7" font-size="13" fill="#232627" text-anchor="end">10000</text>
<text x="108.7" y="219.5" font-size="13" fill="#232627" text-anchor="end">0</text>
<line x1="131.00" y1="243.50" x2="1122.00" y2="243.50" stroke="#111" stroke-width="1.2"/>
<line x1="148.48" y1="243.50" x2="148.48" y2="248.50" stroke="#111" stroke-width="1"/>
<line x1="175.80" y1="243.50" x2="175.80" y2="253.50" stroke="#111" stroke-width="1"/>
<line x1="203.12" y1="243.50" x2="203.12" y2="248.50" stroke="#111" stroke-width="1"/>
<line x1="230.44" y1="243.50" x2="230.44" y2="248.50" stroke="#111" stroke-width="1"/>
<line x1="257.76" y1="243.50" x2="257.76" y2="248.50" stroke="#111" stroke-width="1"/>
<line x1="285.08" y1="243.50" x2="285.08" y2="248.50" stroke="#111" stroke-width="1"/>
<line x1="312.40" y1="243.50" x2="312.40" y2="253.50" stroke="#111" stroke-width="1"/>
<line x1="339.72" y1="243.50" x2="339.72" y2="248.50" stroke="#111" stroke-width="1"/>
<line x1="367.04" y1="243.50" x2="367.04" y2="248.50" stroke="#111" stroke-width="1"/>
<line x1="394.36" y1="243.50" x2="394.36" y2="248.50" stroke="#111" stroke-width="1"/>
<line x1="421.68" y1="243.50" x2="421.68" y2="248.50" stroke="#111" stroke-width="1"/>
<line x1="449.00" y1="243.50" x2="449.00" y2="253.50" stroke="#111" stroke-width="1"/>
<line x1="476.32" y1="243.50" x2="476.32" y2="248.50" stroke="#111" stroke-width="1"/>
<line x1="503.64" y1="243.50" x2="503.64" y2="248.50" stroke="#111" stroke-width="1"/>
<line x1="530.96" y1="243.50" x2="530.96" y2="248.50" stroke="#111" stroke-width="1"/>
<line x1="558.28" y1="243.50" x2="558.28" y2="248.50" stroke="#111" stroke-width="1"/>
<line x1="585.60" y1="243.50" x2="585.60" y2="253.50" stroke="#111" stroke-width="1"/>
<line x1="612.92" y1="243.50" x2="612.92" y2="248.50" stroke="#111" stroke-width="1"/>
<line x1="640.24" y1="243.50" x2="640.24" y2="248.50" stroke="#111" stroke-width="1"/>
<line x1="667.56" y1="243.50" x2="667.56" y2="248.50" stroke="#111" stroke-width="1"/>
<line x1="694.88" y1="243.50" x2="694.88" y2="248.50" stroke="#111" stroke-width="1"/>
<line x1="722.20" y1="243.50" x2="722.20" y2="253.50" stroke="#111" stroke-width="1"/>
<line x1="749.52" y1="243.50" x2="749.52" y2="248.50" stroke="#111" stroke-width="1"/>
<line x1="776.84" y1="243.50" x2="776.84" y2="248.50" stroke="#111" stroke-width="1"/>
<line x1="804.16" y1="243.50" x2="804.16" y2="248.50" stroke="#111" stroke-width="1"/>
<line x1="831.48" y1="243.50" x2="831.48" y2="248.50" stroke="#111" stroke-width="1"/>
<line x1="858.80" y1="243.50" x2="858.80" y2="253.50" stroke="#111" stroke-width="1"/>
<line x1="886.12" y1="243.50" x2="886.12" y2="248.50" stroke="#111" stroke-width="1"/>
<line x1="913.44" y1="243.50" x2="913.44" y2="248.50" stroke="#111" stroke-width="1"/>
<line x1="940.76" y1="243.50" x2="940.76" y2="248.50" stroke="#111" stroke-width="1"/>
<line x1="968.08" y1="243.50" x2="968.08" y2="248.50" stroke="#111" stroke-width="1"/>
<line x1="995.40" y1="243.50" x2="995.40" y2="253.50" stroke="#111" stroke-width="1"/>
<line x1="1022.72" y1="243.50" x2="1022.72" y2="248.50" stroke="#111" stroke-width="1"/>
<line x1="1050.04" y1="243.50" x2="1050.04" y2="248.50" stroke="#111" stroke-width="1"/>
<line x1="1077.36" y1="243.50" x2="1077.36" y2="248.50" stroke="#111" stroke-width="1"/>
<line x1="1104.68" y1="243.50" x2="1104.68" y2="248.50" stroke="#111" stroke-width="1"/>
<text x="150.0" y="271.6" font-size="13" fill="#232627" textLength="51.7" lengthAdjust="spacingAndGlyphs">00:59:20</text>
<text x="286.5" y="271.6" font-size="13" fill="#232627" textLength="51.7" lengthAdjust="spacingAndGlyphs">00:59:30</text>
<text x="423.1" y="271.6" font-size="13" fill="#232627" textLength="51.7" lengthAdjust="spacingAndGlyphs">00:59:40</text>
<text x="559.8" y="271.6" font-size="13" fill="#232627" textLength="51.7" lengthAdjust="spacingAndGlyphs">00:59:50</text>
<text x="696.4" y="271.6" font-size="13" fill="#232627" textLength="51.7" lengthAdjust="spacingAndGlyphs">01:00:00</text>
<text x="832.9" y="271.6" font-size="13" fill="#232627" textLength="51.7" lengthAdjust="spacingAndGlyphs">01:00:10</text>
<text x="969.6" y="271.6" font-size="13" fill="#232627" textLength="51.7" lengthAdjust="spacingAndGlyphs">01:00:20</text>
<text x="141.1" y="295.2" font-size="13" fill="#232627" textLength="68.1" lengthAdjust="spacingAndGlyphs">2020-01-22</text>
<polygon points="175.8,244.4 168.8,258.2 182.8,258.2" fill="#222"/>
<polygon points="517.8,244.4 510.8,258.2 524.8,258.2" fill="#222"/>
<rect x="15.8" y="256.8" width="29" height="29" rx="2.5" fill="url(#btn)" stroke="#b0b2b4" stroke-width="1"/>
<rect x="53.8" y="256.8" width="29" height="29" rx="2.5" fill="url(#btn)" stroke="#b0b2b4" stroke-width="1"/>
<rect x="91.8" y="256.8" width="29" height="29" rx="2.5" fill="url(#btn)" stroke="#b0b2b4" stroke-width="1"/>
<polygon points="18.5,263.5 22.8,266.5 25.5,274.5 41.5,262.5 26,280 22,280.5" fill="url(#chk)" stroke="#009000" stroke-width="0.5"/>
<circle cx="67.9" cy="270.8" r="11.5" fill="url(#redx)"/><ellipse cx="67.9" cy="265" rx="8" ry="5" fill="url(#hl)" opacity="0.5"/>
<path d="M62.5 265.5l11 11M73.5 265.5l-11 11" stroke="#fff" stroke-width="3.6" stroke-linecap="round"/>
<path d="M96.2 263h16l6.5 7.5l-6.5 7.5h-16z" fill="url(#blk)"/>
<path d="M101.5 266.8l7 7M108.5 266.8l-7 7" stroke="#fff" stroke-width="2.4"/>
<rect x="7.5" y="310.7" width="1120.5" height="385.5" rx="2" fill="#fcfcfc" stroke="#b9babc" stroke-width="1"/>
<clipPath id="c2"><rect x="0" y="300" width="1132" height="353.5"/></clipPath>
<g clip-path="url(#c2)">
<text x="16.1" y="333.6" font-size="13" fill="#232627" font-weight="bold">AFI</text>
<text x="68.3" y="333.6" font-size="13" fill="#232627">IU</text>
<text x="108.3" y="354.8" font-size="13" fill="#232627" textLength="63.5" lengthAdjust="spacingAndGlyphs" text-anchor="end">1139.2 km</text>
<rect x="133.00" y="319.10" width="72.20" height="37.60" fill="#2a7097"/>
<rect x="205.20" y="319.10" width="29.60" height="37.60" fill="#8583a6"/>
<rect x="234.80" y="319.10" width="218.20" height="37.60" fill="#9b9ac0"/>
<rect x="453.00" y="319.10" width="386.00" height="37.60" fill="#ccccf8"/>
<rect x="453.00" y="347.10" width="386.00" height="9.60" fill="#d8d8fa"/>
<rect x="839.00" y="319.10" width="182.18" height="37.60" fill="#3daee9"/>
<rect x="839.00" y="347.10" width="182.18" height="9.60" fill="#6cc0ee"/>
<rect x="1021.18" y="319.10" width="78.62" height="37.60" fill="#2a6f9a"/>
<line x1="133.00" y1="337.30" x2="1021.18" y2="337.30" stroke="#e8e8f4" stroke-width="1.2" stroke-opacity="0.8"/>
<line x1="234.8" y1="319.1" x2="234.8" y2="356.7" stroke="#b8b8d8" stroke-width="1" stroke-dasharray="3 3"/>
<line x1="365.9" y1="319.1" x2="365.9" y2="356.7" stroke="#b8b8d8" stroke-width="1" stroke-dasharray="3 3"/>
<line x1="628.3" y1="319.1" x2="628.3" y2="356.7" stroke="#b0b0e0" stroke-width="1" stroke-dasharray="3 3"/>
<line x1="759.5" y1="319.1" x2="759.5" y2="356.7" stroke="#b0b0e0" stroke-width="1" stroke-dasharray="3 3"/>
<line x1="890.8" y1="319.1" x2="890.8" y2="356.7" stroke="#b0b0e0" stroke-width="1" stroke-dasharray="3 3"/>
<text x="16.1" y="373.7" font-size="13" fill="#232627" font-weight="bold">SANVU</text>
<text x="68.3" y="373.7" font-size="13" fill="#232627">G</text>
<text x="108.3" y="394.3" font-size="13" fill="#232627" textLength="63.5" lengthAdjust="spacingAndGlyphs" text-anchor="end">1147.8 km</text>
<rect x="133.00" y="359.30" width="101.80" height="37.40" fill="#a4a4a4"/>
<rect x="234.80" y="359.30" width="218.20" height="37.40" fill="#b4b5b6"/>
<rect x="453.00" y="359.30" width="568.18" height="37.40" fill="#eff0f1"/>
<rect x="1021.18" y="359.30" width="78.62" height="37.40" fill="#999999"/>
<rect x="453.50" y="387.10" width="567.68" height="9.60" fill="#8bb78b"/>
<line x1="1020.68" y1="387.10" x2="1020.68" y2="396.70" stroke="#4f7f4f" stroke-width="1"/>
<line x1="133.00" y1="376.60" x2="1099.80" y2="376.60" stroke="#c8c8ec" stroke-width="0.8" stroke-opacity="0.7"/>
<line x1="234.8" y1="359.3" x2="234.8" y2="396.7" stroke="#9a9a9a" stroke-width="1" stroke-dasharray="3 3"/>
<line x1="365.9" y1="359.3" x2="365.9" y2="396.7" stroke="#9a9a9a" stroke-width="1" stroke-dasharray="3 3"/>
<line x1="628.3" y1="359.3" x2="628.3" y2="396.7" stroke="#d0d0d0" stroke-width="1" stroke-dasharray="3 3"/>
<line x1="759.5" y1="359.3" x2="759.5" y2="396.7" stroke="#d0d0d0" stroke-width="1" stroke-dasharray="3 3"/>
<line x1="890.8" y1="359.3" x2="890.8" y2="396.7" stroke="#d0d0d0" stroke-width="1" stroke-dasharray="3 3"/>
<text x="16.1" y="413.5" font-size="13" fill="#232627" font-weight="bold">DZM</text>
<text x="68.3" y="413.5" font-size="13" fill="#232627">G</text>
<text x="108.3" y="434.6" font-size="13" fill="#232627" textLength="63.5" lengthAdjust="spacingAndGlyphs" text-anchor="end">1360.5 km</text>
<rect x="133.00" y="399.30" width="101.80" height="37.30" fill="#a8a8a8"/>
<rect x="234.80" y="399.30" width="218.20" height="37.30" fill="#bebebe"/>
<rect x="453.00" y="399.30" width="568.18" height="37.30" fill="#fcfcfc"/>
<rect x="1021.18" y="399.30" width="78.62" height="37.30" fill="#a3a3a3"/>
<rect x="453.50" y="427.00" width="567.68" height="9.60" fill="#8bb78b"/>
<line x1="1020.68" y1="427.00" x2="1020.68" y2="436.60" stroke="#4f7f4f" stroke-width="1"/>
<line x1="133.00" y1="416.50" x2="1099.80" y2="416.50" stroke="#c8c8ec" stroke-width="0.8" stroke-opacity="0.7"/>
<line x1="234.8" y1="399.3" x2="234.8" y2="436.6" stroke="#9a9a9a" stroke-width="1" stroke-dasharray="3 3"/>
<line x1="365.9" y1="399.3" x2="365.9" y2="436.6" stroke="#9a9a9a" stroke-width="1" stroke-dasharray="3 3"/>
<line x1="628.3" y1="399.3" x2="628.3" y2="436.6" stroke="#d0d0d0" stroke-width="1" stroke-dasharray="3 3"/>
<line x1="759.5" y1="399.3" x2="759.5" y2="436.6" stroke="#d0d0d0" stroke-width="1" stroke-dasharray="3 3"/>
<line x1="890.8" y1="399.3" x2="890.8" y2="436.6" stroke="#d0d0d0" stroke-width="1" stroke-dasharray="3 3"/>
<text x="16.1" y="453.0" font-size="13" fill="#232627" font-weight="bold">TARA</text>
<text x="68.3" y="453.0" font-size="13" fill="#232627">IU</text>
<text x="108.3" y="473.3" font-size="13" fill="#232627" textLength="63.5" lengthAdjust="spacingAndGlyphs" text-anchor="end">2040.2 km</text>
<rect x="133.00" y="439.30" width="101.80" height="36.30" fill="#a4a4a4"/>
<rect x="234.80" y="439.30" width="218.20" height="36.30" fill="#b4b5b6"/>
<rect x="453.00" y="439.30" width="568.18" height="36.30" fill="#eff0f1"/>
<rect x="1021.18" y="439.30" width="78.62" height="36.30" fill="#999999"/>
<rect x="453.50" y="466.00" width="567.68" height="9.60" fill="#bdbec0"/>
<line x1="133.00" y1="456.00" x2="1099.80" y2="456.00" stroke="#c8c8ec" stroke-width="0.8" stroke-opacity="0.7"/>
<line x1="234.8" y1="439.3" x2="234.8" y2="475.6" stroke="#9a9a9a" stroke-width="1" stroke-dasharray="3 3"/>
<line x1="365.9" y1="439.3" x2="365.9" y2="475.6" stroke="#9a9a9a" stroke-width="1" stroke-dasharray="3 3"/>
<line x1="628.3" y1="439.3" x2="628.3" y2="475.6" stroke="#d0d0d0" stroke-width="1" stroke-dasharray="3 3"/>
<line x1="759.5" y1="439.3" x2="759.5" y2="475.6" stroke="#d0d0d0" stroke-width="1" stroke-dasharray="3 3"/>
<line x1="890.8" y1="439.3" x2="890.8" y2="475.6" stroke="#d0d0d0" stroke-width="1" stroke-dasharray="3 3"/>
<text x="16.1" y="491.9" font-size="13" fill="#232627" font-weight="bold">OUZ</text>
<text x="68.3" y="491.9" font-size="13" fill="#232627">NZ</text>
<text x="108.3" y="512.6" font-size="13" fill="#232627" textLength="63.5" lengthAdjust="spacingAndGlyphs" text-anchor="end">2142.3 km</text>
<rect x="133.00" y="478.30" width="101.80" height="36.40" fill="#a8a8a8"/>
<rect x="234.80" y="478.30" width="218.20" height="36.40" fill="#bebebe"/>
<rect x="453.00" y="478.30" width="568.18" height="36.40" fill="#fcfcfc"/>
<rect x="1021.18" y="478.30" width="78.62" height="36.40" fill="#a3a3a3"/>
<rect x="453.50" y="505.10" width="567.68" height="9.60" fill="#8bb78b"/>
<line x1="1020.68" y1="505.10" x2="1020.68" y2="514.70" stroke="#4f7f4f" stroke-width="1"/>
<line x1="133.00" y1="497.30" x2="1099.80" y2="497.30" stroke="#c8c8ec" stroke-width="0.8" stroke-opacity="0.7"/>
<line x1="234.8" y1="478.3" x2="234.8" y2="514.7" stroke="#9a9a9a" stroke-width="1" stroke-dasharray="3 3"/>
<line x1="365.9" y1="478.3" x2="365.9" y2="514.7" stroke="#9a9a9a" stroke-width="1" stroke-dasharray="3 3"/>
<line x1="628.3" y1="478.3" x2="628.3" y2="514.7" stroke="#d0d0d0" stroke-width="1" stroke-dasharray="3 3"/>
<line x1="759.5" y1="478.3" x2="759.5" y2="514.7" stroke="#d0d0d0" stroke-width="1" stroke-dasharray="3 3"/>
<line x1="890.8" y1="478.3" x2="890.8" y2="514.7" stroke="#d0d0d0" stroke-width="1" stroke-dasharray="3 3"/>
<text x="16.1" y="530.7" font-size="13" fill="#232627" font-weight="bold">WIZ</text>
<text x="68.3" y="530.7" font-size="13" fill="#232627">NZ</text>
<text x="108.3" y="551.3" font-size="13" fill="#232627" textLength="63.5" lengthAdjust="spacingAndGlyphs" text-anchor="end">2356.3 km</text>
<rect x="133.00" y="517.30" width="101.80" height="36.50" fill="#a05050"/>
<rect x="234.80" y="517.30" width="218.20" height="36.50" fill="#ba5e5e"/>
<rect x="453.00" y="517.30" width="568.18" height="36.50" fill="#fe7a7a"/>
<rect x="1021.18" y="517.30" width="78.62" height="36.50" fill="#a34b4b"/>
<rect x="453.00" y="544.20" width="568.18" height="9.60" fill="#c46666"/>
<line x1="234.8" y1="517.3" x2="234.8" y2="553.8" stroke="#8a4040" stroke-width="1" stroke-dasharray="3 3"/>
<line x1="365.9" y1="517.3" x2="365.9" y2="553.8" stroke="#8a4040" stroke-width="1" stroke-dasharray="3 3"/>
<line x1="628.3" y1="517.3" x2="628.3" y2="553.8" stroke="#d86a6a" stroke-width="1" stroke-dasharray="3 3"/>
<line x1="759.5" y1="517.3" x2="759.5" y2="553.8" stroke="#d86a6a" stroke-width="1" stroke-dasharray="3 3"/>
<line x1="890.8" y1="517.3" x2="890.8" y2="553.8" stroke="#d86a6a" stroke-width="1" stroke-dasharray="3 3"/>
<text x="16.1" y="569.9" font-size="13" fill="#232627" font-weight="bold">HIZ</text>
<text x="68.3" y="569.9" font-size="13" fill="#232627">NZ</text>
<text x="108.3" y="590.6" font-size="13" fill="#232627" textLength="63.5" lengthAdjust="spacingAndGlyphs" text-anchor="end">2483.0 km</text>
<rect x="133.00" y="556.40" width="101.80" height="36.40" fill="#a8a8a8"/>
<rect x="234.80" y="556.40" width="218.20" height="36.40" fill="#bebebe"/>
<rect x="453.00" y="556.40" width="568.18" height="36.40" fill="#fcfcfc"/>
<rect x="1021.18" y="556.40" width="78.62" height="36.40" fill="#a3a3a3"/>
<rect x="453.50" y="583.20" width="567.68" height="9.60" fill="#8bb78b"/>
<line x1="1020.68" y1="583.20" x2="1020.68" y2="592.80" stroke="#4f7f4f" stroke-width="1"/>
<line x1="133.00" y1="576.80" x2="1099.80" y2="576.80" stroke="#c8c8ec" stroke-width="0.8" stroke-opacity="0.7"/>
<line x1="234.8" y1="556.4" x2="234.8" y2="592.8" stroke="#9a9a9a" stroke-width="1" stroke-dasharray="3 3"/>
<line x1="365.9" y1="556.4" x2="365.9" y2="592.8" stroke="#9a9a9a" stroke-width="1" stroke-dasharray="3 3"/>
<line x1="628.3" y1="556.4" x2="628.3" y2="592.8" stroke="#d0d0d0" stroke-width="1" stroke-dasharray="3 3"/>
<line x1="759.5" y1="556.4" x2="759.5" y2="592.8" stroke="#d0d0d0" stroke-width="1" stroke-dasharray="3 3"/>
<line x1="890.8" y1="556.4" x2="890.8" y2="592.8" stroke="#d0d0d0" stroke-width="1" stroke-dasharray="3 3"/>
<text x="16.1" y="608.7" font-size="13" fill="#232627" font-weight="bold">TMVZ</text>
<text x="68.3" y="608.7" font-size="13" fill="#232627">NZ</text>
<text x="108.3" y="629.3" font-size="13" fill="#232627" textLength="63.5" lengthAdjust="spacingAndGlyphs" text-anchor="end">2540.9 km</text>
<rect x="133.00" y="595.20" width="101.80" height="36.30" fill="#a05050"/>
<rect x="234.80" y="595.20" width="218.20" height="36.30" fill="#ba5e5e"/>
<rect x="453.00" y="595.20" width="568.18" height="36.30" fill="#fe7a7a"/>
<rect x="1021.18" y="595.20" width="78.62" height="36.30" fill="#a34b4b"/>
<rect x="453.00" y="621.90" width="568.18" height="9.60" fill="#c46666"/>
<line x1="234.8" y1="595.2" x2="234.8" y2="631.5" stroke="#8a4040" stroke-width="1" stroke-dasharray="3 3"/>
<line x1="365.9" y1="595.2" x2="365.9" y2="631.5" stroke="#8a4040" stroke-width="1" stroke-dasharray="3 3"/>
<line x1="628.3" y1="595.2" x2="628.3" y2="631.5" stroke="#d86a6a" stroke-width="1" stroke-dasharray="3 3"/>
<line x1="759.5" y1="595.2" x2="759.5" y2="631.5" stroke="#d86a6a" stroke-width="1" stroke-dasharray="3 3"/>
<line x1="890.8" y1="595.2" x2="890.8" y2="631.5" stroke="#d86a6a" stroke-width="1" stroke-dasharray="3 3"/>
<text x="16.1" y="648.2" font-size="13" fill="#232627" font-weight="bold">BKZ</text>
<text x="68.3" y="648.2" font-size="13" fill="#232627">NZ</text>
<rect x="133.00" y="634.00" width="101.80" height="19.50" fill="#a8a8a8"/>
<rect x="234.80" y="634.00" width="218.20" height="19.50" fill="#bebebe"/>
<rect x="453.00" y="634.00" width="568.18" height="19.50" fill="#fcfcfc"/>
<rect x="1021.18" y="634.00" width="78.62" height="19.50" fill="#a3a3a3"/>
<line x1="133.00" y1="651.00" x2="1099.80" y2="651.00" stroke="#c8c8ec" stroke-width="0.8" stroke-opacity="0.7"/>
<line x1="234.8" y1="634.0" x2="234.8" y2="653.5" stroke="#9a9a9a" stroke-width="1" stroke-dasharray="3 3"/>
<line x1="365.9" y1="634.0" x2="365.9" y2="653.5" stroke="#9a9a9a" stroke-width="1" stroke-dasharray="3 3"/>
<line x1="628.3" y1="634.0" x2="628.3" y2="653.5" stroke="#d0d0d0" stroke-width="1" stroke-dasharray="3 3"/>
<line x1="759.5" y1="634.0" x2="759.5" y2="653.5" stroke="#d0d0d0" stroke-width="1" stroke-dasharray="3 3"/>
<line x1="890.8" y1="634.0" x2="890.8" y2="653.5" stroke="#d0d0d0" stroke-width="1" stroke-dasharray="3 3"/>
<path d="M132.9 332.1L133.9 332.7L135.3 334.0L137.0 335.0L138.8 337.0L140.7 338.3L142.7 339.0L144.6 339.0L146.1 339.2L147.6 338.4L149.2 337.4L150.9 337.1L152.5 336.1L154.2 334.2L155.8 334.2L157.4 333.6L159.0 333.4L160.7 334.1L162.3 335.9L163.9 337.5L165.5 339.8L167.2 341.8L168.8 343.0L170.5 344.8L172.3 345.5L173.8 345.2L175.3 344.1L176.9 342.4L178.6 340.9L180.2 339.5L181.9 338.7L183.5 336.5L185.1 335.2L186.7 334.6L188.3 333.3L190.0 333.1L191.6 332.9L193.3 332.6L194.9 333.3L196.5 333.9L198.1 333.6L199.7 334.0L201.3 334.6L202.9 334.5L204.5 335.2L206.1 335.7L207.8 335.8L209.4 335.8L211.0 336.4L212.6 336.0L214.3 336.8L215.9 337.1L217.5 338.0L219.1 338.5L220.7 340.5L222.3 341.5L223.9 343.3L225.5 345.6L227.1 347.2L228.7 347.7L230.3 348.2L232.0 347.7L233.6 346.7L235.1 345.3L236.8 342.5L238.4 339.7L240.1 337.0L241.7 333.8L243.4 331.5L245.0 329.3L246.5 327.5L248.0 326.2L249.8 325.8L251.4 326.5L253.0 327.3L254.5 329.7L256.1 331.2L257.7 333.1L259.4 334.6L261.2 336.3L262.6 337.3L264.1 338.1L265.6 339.5L267.1 340.2L268.7 340.7L270.3 341.9L271.9 343.0L273.6 343.2L275.3 343.7L277.0 343.3L278.7 343.7L280.2 343.3L281.8 342.7L283.4 341.9L285.0 341.2L286.7 340.0L288.4 338.8L290.0 337.3L291.7 336.3L293.3 335.7L294.8 334.1L296.3 332.8L297.7 332.0L299.0 332.0L301.1 331.0L302.9 330.8L304.5 330.8L306.0 331.4L307.5 332.4L309.0 332.6L310.8 333.5L312.3 334.4L313.8 335.9L315.4 337.6L317.0 339.7L318.7 341.6L320.4 343.1L322.0 344.1L323.7 345.1L325.3 345.6L326.9 344.2L328.4 342.9L330.0 341.3L331.5 339.1L333.1 336.7L334.7 334.4L336.4 332.7L338.1 331.1L340.0 330.9L341.4 331.3L342.8 331.5L344.3 333.0L345.9 334.2L347.5 335.9L349.1 336.7L350.7 339.3L352.3 340.8L354.0 342.5L355.6 343.8L357.2 344.1L358.8 345.2L360.3 344.8L361.9 344.9L363.5 344.3L365.1 342.2L366.6 340.7L368.2 338.5L369.7 336.6L371.3 334.6L372.8 332.6L374.4 331.9L376.0 330.5L377.6 329.3L379.3 329.3L380.8 329.6L382.3 330.3L383.8 331.4L385.4 333.1L387.0 334.7L388.6 336.3L390.2 338.4L391.8 340.6L393.4 342.4L395.0 343.7L396.6 345.5L398.1 346.9L399.6 347.6L401.1 347.7L402.8 346.7L404.4 346.0L406.0 344.2L407.6 342.2L409.2 340.3L410.7 338.2L412.3 336.1L413.8 333.8L415.3 331.4L416.9 330.2L418.4 328.8L420.0 328.2L421.6 327.9L423.3 328.5L424.9 329.2L426.6 330.7L428.3 331.7L430.0 333.2L431.6 334.7L433.3 336.2L434.8 337.9L436.3 339.2L437.7 340.3L439.0 340.7L441.0 341.9L442.9 342.4L444.6 342.6L446.1 342.3L447.5 341.5L448.8 342.3L450.0 342.3L452.3 342.2L453.9 343.2L455.6 343.3L457.4 343.2L459.2 341.9L461.1 339.9L462.7 337.9L464.3 335.6L466.0 333.2L467.6 332.1L469.5 330.7L471.4 329.0L473.2 329.2L475.1 330.1L476.9 330.6L478.8 332.8L480.6 335.1L482.5 338.4L484.3 340.5L486.1 340.6L488.0 341.1L489.9 341.9L491.5 342.1L493.3 342.4L495.0 343.0L496.4 342.8L497.9 340.8L499.2 338.1L500.5 338.4L502.0 340.3L503.8 339.7L505.5 338.4L507.4 335.8L509.4 332.6L511.2 331.3L513.2 331.7L515.0 334.0L516.8 336.1L518.6 336.2L520.5 335.4L522.4 334.4L523.9 336.7L525.5 338.5L527.2 340.3L528.8 341.0L530.4 339.8L532.1 336.7L533.7 333.7L535.3 333.1L537.3 334.5L539.1 337.7L540.9 339.4L542.4 337.3L543.9 332.6L545.5 331.5L547.0 333.6L548.7 337.0L550.5 341.2L552.0 343.5L553.6 342.8L555.1 340.8L556.7 338.9L558.2 339.6L559.8 339.2L561.5 340.1L563.2 340.2L565.0 340.2L567.0 339.3L568.9 338.2L570.6 338.2L572.6 339.3L574.4 341.5L576.2 342.7L577.9 341.9L579.6 338.4L581.7 336.1L583.1 335.5L584.6 334.2L586.2 333.0L587.9 332.9L589.5 331.5L591.0 331.9L593.0 332.4L594.8 333.8L596.6 335.6L598.4 337.6L600.2 340.2L602.1 343.3L603.9 345.5L605.8 347.5L607.3 348.1L608.8 347.5L610.3 347.8L611.8 346.8L613.3 345.6L615.2 343.8L617.1 341.6L619.0 338.2L620.7 335.1L622.6 331.6L624.4 326.2L626.3 324.0L628.1 325.5L630.0 327.6L631.9 330.7L633.7 333.7L635.7 337.3L637.4 340.0L639.2 342.4L641.1 341.5L643.0 339.6L644.8 338.3L646.3 338.6L647.7 340.2L649.4 341.3L650.9 340.3L652.6 337.9L654.4 336.8L656.5 336.1L658.1 336.7L659.8 337.6L661.6 338.8L663.4 340.5L665.1 342.4L666.7 342.6L668.8 344.3L670.6 344.7L672.4 344.4L674.1 344.5L675.8 341.6L677.4 339.3L679.0 335.6L680.6 334.0L682.2 333.4L683.8 333.7L685.4 334.6L687.1 334.7L688.9 331.9L690.7 329.0L692.6 326.2L694.5 325.2L696.4 324.9L698.4 326.2L700.3 328.3L701.9 330.0L703.8 332.3L705.7 336.5L707.3 340.1L709.2 345.5L711.2 350.5L713.1 353.7L715.0 354.9L716.9 354.0L718.8 351.2L720.5 349.3L722.5 346.0L724.2 342.8L726.1 338.5L727.7 333.7L729.3 328.3L731.0 322.7L732.6 318.9L734.2 318.3L735.8 319.2L737.4 320.9L739.1 322.9L740.9 326.7L742.7 330.6L744.6 335.1L746.5 338.2L748.4 340.3L750.3 342.3L752.2 343.8L753.9 345.7L755.9 348.0L757.7 350.5L759.5 352.2L761.3 351.0L763.2 348.7L765.0 346.2L766.8 344.3L768.6 341.6L770.6 338.6L772.3 335.6L774.2 332.4L776.1 329.8L778.0 328.0L779.8 328.6L781.7 330.6L783.5 332.8L785.4 334.7L786.9 335.9L788.4 337.0L789.9 337.8L791.4 339.0L792.9 340.3L794.8 341.2L796.6 342.8L798.5 343.1L800.3 343.7L802.2 342.6L804.1 341.6L805.9 340.8L807.7 338.9L809.3 338.0L810.8 335.9L812.3 335.3L814.2 334.6L815.7 335.2L817.5 335.8L819.3 336.6L821.1 337.1L822.9 338.2L824.4 338.0L826.3 337.9L827.9 336.8L829.4 335.8L830.9 334.7L832.5 333.9L834.2 333.4L835.8 333.1L837.4 333.2L839.3 335.0L841.1 337.0L843.0 338.8L844.6 341.0L846.2 342.3L847.8 344.4L849.4 344.4L850.9 345.0L852.4 344.9L853.9 344.4L855.5 342.5L857.1 339.8L858.7 336.8L860.4 333.3L862.1 330.8L863.6 329.2L865.1 327.4L866.7 327.5L868.3 327.2L869.9 327.0L871.4 328.4L873.0 330.3L874.5 332.7L876.1 334.9L877.6 336.6L879.2 339.1L880.7 342.4L882.3 345.4L883.8 347.7L885.3 349.4L887.0 349.4L888.7 347.7L890.4 345.9L892.0 343.3L893.6 341.7L895.2 338.2L896.8 335.4L898.6 333.6L900.2 333.1L902.0 332.4L903.8 332.2L905.6 332.3L907.4 331.8L909.2 332.2L911.1 332.2L912.9 331.7L914.7 332.2L916.3 333.0L918.1 334.1L919.6 335.6L921.1 338.4L922.9 340.3L924.6 342.5L926.4 343.9L928.2 345.6L930.0 347.2L931.7 347.8L933.5 347.1L935.1 344.9L936.7 342.4L938.3 340.4L940.0 337.7L941.6 335.7L943.3 333.5L945.0 332.1L946.7 333.2L948.3 334.5L950.0 336.4L951.6 337.4L953.2 336.1L954.9 335.7L956.6 334.3L958.2 334.1L959.8 333.4L961.5 334.5L963.1 334.9L964.8 335.5L966.4 337.3L968.0 339.7L969.7 340.7L971.5 342.0L973.1 341.7L974.7 341.1L976.4 341.1L978.2 339.9L980.3 339.3L981.7 339.3L983.2 338.1L984.8 338.5L986.5 338.0L988.2 337.7L989.9 337.5L991.7 336.9L993.5 336.5L994.9 337.6L996.4 337.6L997.9 338.1L999.4 338.5L1001.0 338.7L1002.5 339.5L1004.1 339.7L1005.7 339.8L1007.4 340.3L1009.0 340.3L1010.5 339.9L1012.1 340.0L1013.7 339.6L1015.3 338.7L1016.9 337.4L1018.5 337.2L1020.2 336.7L1021.8 336.2L1023.5 335.2L1025.1 334.7L1026.7 334.7L1028.3 334.4L1029.8 335.2L1031.3 334.7L1032.7 335.6L1034.2 336.3L1035.7 335.9L1037.2 336.5L1038.9 337.8L1040.6 337.5L1042.4 338.2L1044.3 337.6L1045.6 338.1L1047.0 337.7L1048.4 337.9L1049.9 337.7L1051.4 338.3L1052.9 338.0L1054.4 337.8L1056.0 337.8L1057.6 337.9L1059.3 337.4L1060.9 337.2L1062.5 337.0L1064.2 337.5L1065.8 337.4L1067.5 336.9L1069.2 337.1L1070.8 337.5L1072.3 336.9L1073.9 337.2L1075.6 336.7L1077.3 336.9L1079.0 337.0L1080.8 336.9L1082.6 336.8L1084.4 336.4L1086.2 336.2L1087.9 336.5L1089.6 336.7L1091.3 336.3L1092.8 336.7L1094.3 336.4L1095.7 336.0L1097.0 336.4L1098.1 336.4L1099.1 336.1L1100.0 336.0" fill="none" stroke="#585858" stroke-width="1.0" stroke-opacity="0.85" stroke-linejoin="round"/>
<path d="M133.0 376.8L133.8 376.9L134.8 377.2L135.9 376.9L137.1 377.0L138.5 377.1L139.9 376.9L141.4 377.2L143.0 377.3L144.6 377.5L146.3 377.1L148.0 377.3L149.8 377.2L151.5 377.7L153.3 377.6L155.0 377.2L156.7 377.9L158.4 377.9L160.0 377.6L161.4 377.5L162.9 377.2L164.4 377.0L165.9 377.2L167.4 376.8L168.9 376.8L170.5 376.7L172.0 376.4L173.6 376.5L175.1 376.4L176.7 376.5L178.2 376.2L179.8 376.1L181.3 375.9L182.8 375.9L184.3 375.7L185.7 375.5L187.2 375.9L188.6 375.9L190.0 375.7L191.7 375.7L193.4 375.5L195.0 375.5L196.6 375.7L198.2 375.6L199.7 376.3L201.3 376.2L202.8 376.7L204.3 376.6L205.8 377.2L207.4 377.2L208.9 376.8L210.4 377.1L211.9 377.7L213.4 377.4L215.0 377.8L216.6 377.4L218.1 377.2L219.6 377.5L221.1 377.5L222.6 377.0L224.2 376.8L225.7 376.8L227.2 377.1L228.7 376.8L230.3 376.2L231.8 376.2L233.4 375.9L235.0 375.8L236.6 376.3L238.3 375.8L240.0 376.0L241.4 376.0L242.8 375.9L244.2 376.3L245.7 376.0L247.1 376.5L248.6 376.2L250.1 376.6L251.6 376.6L253.2 376.8L254.7 377.4L256.2 377.4L257.8 377.2L259.3 377.8L260.8 377.4L262.4 377.7L263.9 378.1L265.5 378.0L267.0 377.7L268.5 378.3L270.0 377.8L271.5 377.8L273.0 378.1L274.5 377.7L276.0 377.5L277.5 377.2L279.0 377.1L280.5 377.2L282.0 376.8L283.5 376.8L285.0 376.5L286.5 376.3L288.0 376.5L289.5 376.0L291.0 375.8L292.5 375.9L294.0 375.3L295.5 375.1L297.0 375.6L298.5 375.4L300.0 375.0L301.5 375.0L303.0 375.4L304.5 375.7L306.0 375.2L307.5 375.9L309.0 376.0L310.5 376.0L312.0 376.0L313.5 376.0L315.0 376.1L316.5 377.0L318.0 376.7L319.5 377.2L321.0 377.0L322.5 377.6L324.0 377.6L325.5 377.5L327.0 377.5L328.5 377.9L330.0 377.5L331.5 377.6L333.0 377.8L334.4 377.9L335.8 377.7L337.3 377.3L338.7 377.6L340.1 377.0L341.5 376.7L342.9 376.7L344.4 376.6L345.8 376.2L347.3 376.1L348.8 376.1L350.3 376.1L351.8 375.6L353.4 375.6L355.0 375.9L356.6 375.9L358.3 375.6L360.0 375.6L361.4 375.6L362.8 375.3L364.2 375.3L365.7 375.3L367.2 376.0L368.8 375.9L370.3 376.2L371.9 375.7L373.5 376.2L375.1 376.2L376.7 376.5L378.4 376.4L380.0 377.0L381.6 376.5L383.3 376.9L384.9 377.2L386.5 377.4L388.1 377.4L389.7 377.5L391.2 377.7L392.8 377.8L394.3 377.5L395.8 377.8L397.2 378.0L398.6 378.0L400.0 377.7L401.7 378.0L403.4 378.0L405.1 377.8L406.8 377.7L408.4 377.4L410.0 377.5L411.5 377.4L413.1 376.9L414.6 377.1L416.1 377.2L417.5 377.0L419.0 376.7L420.4 376.3L421.8 376.5L423.2 376.2L424.6 376.0L426.0 376.2L427.3 375.6L428.7 376.0L430.0 375.5L431.7 375.9L433.3 375.8L434.9 375.7L436.3 376.1L437.7 376.1L439.1 376.3L440.5 376.7L441.9 376.4L443.3 376.3L444.7 376.7L446.2 377.1L447.8 376.8L449.4 376.9L451.1 377.5L453.0 377.3L454.3 377.2L455.7 377.5L457.2 377.1L458.7 377.4L460.3 377.1L461.9 377.4L463.6 377.7L465.3 377.8L467.0 377.8L468.7 377.5L470.5 377.6L472.2 377.5L473.9 377.3L475.6 377.5L477.2 377.7L478.8 377.6L480.4 377.4L481.8 377.4L483.2 376.8L484.6 376.5L485.8 376.4L486.9 376.0L487.9 375.6L491.4 372.8L493.5 368.6L494.7 364.0L495.6 360.5L496.6 359.9L499.2 369.9L501.0 383.0L502.5 392.7L504.0 395.9L505.9 380.7L508.3 365.3L509.8 368.1L511.6 374.9L513.5 382.1L515.6 386.2L517.2 384.8L518.9 382.0L520.7 378.3L522.5 374.1L524.2 371.6L525.8 369.8L527.8 371.8L529.6 376.7L531.3 382.1L533.0 384.5L534.7 382.9L536.3 378.9L538.1 374.9L540.4 373.2L541.8 373.7L543.4 374.8L545.1 377.1L547.0 379.3L548.8 381.6L550.5 384.0L552.1 385.6L553.5 385.8L555.6 383.8L557.1 379.4L558.6 375.2L560.8 372.9L562.1 373.3L563.6 374.5L565.1 375.9L566.8 378.1L568.5 380.2L570.3 381.5L572.0 383.6L573.7 384.4L575.4 384.2L577.0 383.8L578.6 382.4L580.3 380.5L581.9 377.7L583.5 375.3L585.1 373.1L586.8 370.9L588.4 369.5L590.0 368.5L591.6 368.8L593.3 369.4L595.1 371.2L596.8 373.1L598.5 374.9L600.1 376.8L601.7 378.1L603.1 379.7L604.5 380.3L606.6 379.5L608.3 376.9L609.8 374.3L611.4 371.8L613.3 371.7L614.8 372.8L616.4 374.8L618.1 377.5L619.8 380.8L621.6 383.6L623.3 385.7L625.0 386.0L626.6 384.5L628.2 382.4L629.7 378.4L631.2 375.1L632.9 371.1L634.6 368.4L636.6 367.2L638.0 366.6L639.5 367.0L641.1 368.1L642.7 369.3L644.4 370.7L646.1 372.0L647.8 373.6L649.5 374.7L651.1 376.1L652.6 376.4L654.0 377.0L656.0 377.3L657.8 376.6L659.4 376.0L661.0 374.9L662.5 373.8L664.1 373.4L665.7 372.9L667.4 373.2L669.1 374.1L670.9 375.5L672.6 376.8L674.3 377.4L675.9 378.6L677.4 379.0L679.3 378.1L681.1 376.6L682.8 374.6L684.5 373.4L686.2 372.9L687.8 373.8L689.3 375.2L690.8 378.0L692.6 379.4L694.9 379.9L696.2 380.0L697.5 379.2L699.0 378.4L700.6 377.5L702.3 376.0L703.9 375.1L705.7 374.0L707.4 373.3L709.1 372.5L710.8 371.5L712.4 371.4L714.0 371.3L715.6 371.9L717.3 372.9L718.9 373.9L720.6 374.6L722.2 375.5L723.8 376.4L725.4 377.6L727.0 378.5L728.5 378.4L730.0 378.9L731.7 377.9L733.4 377.0L735.1 375.7L736.7 374.5L738.2 372.6L739.8 371.0L741.3 369.9L742.9 368.6L744.5 368.7L746.1 368.4L747.8 369.4L749.4 370.3L751.1 371.6L752.7 373.2L754.4 374.5L756.0 375.7L757.5 376.6L759.0 377.2L760.8 377.0L762.6 376.6L764.2 376.1L765.9 375.2L767.5 374.2L769.1 373.6L770.7 373.0L772.4 372.9L774.0 372.2L775.7 372.5L777.4 372.5L779.0 372.6L780.4 372.4L781.7 372.8L784.0 375.1L785.8 377.2L787.5 379.0L789.3 377.4L791.2 374.1L793.3 372.7L794.9 373.9L796.7 375.3L798.6 377.3L800.4 379.5L802.0 379.9L803.6 379.1L805.0 376.3L806.4 374.0L808.0 373.0L809.6 373.0L811.2 374.5L813.0 376.5L814.8 378.2L816.6 379.0L818.3 378.3L820.0 377.9L821.7 377.1L823.5 376.1L825.4 375.9L826.9 375.7L828.6 376.0L830.3 376.6L832.1 377.1L833.8 378.1L835.5 378.5L837.0 378.7L838.9 378.5L840.7 378.4L842.3 378.1L844.0 378.1L845.8 377.5L847.4 376.6L849.1 374.9L850.8 373.5L852.5 372.9L854.3 371.7L856.0 371.6L857.7 371.7L859.5 372.7L861.2 374.0L862.9 375.3L864.6 376.6L866.2 376.9L868.0 377.4L869.5 377.2L871.1 376.1L872.9 375.8L875.0 376.0L876.4 376.0L877.8 376.3L879.4 376.8L881.1 377.7L882.7 377.9L884.5 379.1L886.2 379.5L887.9 379.7L889.5 379.8L891.1 379.2L892.8 378.4L894.5 377.6L896.3 376.5L897.9 375.7L899.6 374.6L901.2 373.4L902.6 373.3L904.0 373.1L906.0 374.0L907.7 375.9L909.2 377.8L910.9 380.1L912.9 381.0L914.2 380.7L915.7 380.4L917.2 379.7L918.8 378.6L920.4 377.8L922.1 376.4L923.9 375.6L925.6 374.9L927.4 374.0L928.9 373.8L930.5 373.5L932.1 373.1L933.7 372.4L935.4 372.6L937.0 372.0L938.7 371.6L940.3 371.6L941.9 371.4L943.5 371.3L945.0 371.3L946.7 372.1L948.4 372.3L950.1 373.1L951.7 374.0L953.2 375.0L954.8 375.1L956.3 376.3L957.9 377.0L959.5 377.0L961.1 377.3L962.7 377.0L964.2 376.9L965.8 376.7L967.3 376.2L968.9 376.0L970.6 376.2L972.3 375.8L974.0 375.8L975.5 376.3L977.0 376.2L978.6 376.8L980.2 376.9L981.8 377.5L983.4 377.3L985.1 378.1L986.7 378.5L988.4 378.2L990.0 379.0L991.6 378.5L993.2 378.5L994.9 378.0L996.5 377.8L998.2 377.4L999.8 376.5L1001.5 376.5L1003.1 375.6L1004.7 375.2L1006.2 374.8L1007.6 374.4L1009.0 374.2L1010.9 374.5L1012.5 374.8L1014.0 375.1L1015.4 376.0L1016.9 376.3L1018.6 376.6L1020.7 377.0L1022.0 376.9L1023.4 377.0L1024.9 377.4L1026.5 377.0L1028.1 377.3L1029.8 377.0L1031.5 376.4L1033.2 376.9L1034.9 376.7L1036.5 375.9L1038.1 376.3L1039.6 375.9L1041.0 375.8L1042.9 375.9L1044.6 375.2L1046.2 375.1L1047.8 375.1L1049.3 374.7L1050.8 374.3L1052.4 374.6L1054.0 374.4L1055.7 374.4L1057.2 374.2L1058.7 374.9L1060.3 375.3L1061.9 375.6L1063.5 376.1L1065.1 377.0L1066.7 377.2L1068.4 377.9L1070.0 378.5L1071.6 378.6L1073.2 378.5L1074.8 378.7L1076.5 378.3L1078.2 378.1L1079.9 377.5L1081.6 377.2L1083.3 376.6L1084.9 375.9L1086.5 375.0L1088.0 374.5L1089.4 374.7L1090.7 374.5L1092.8 374.5L1094.8 374.7L1096.4 375.3L1097.9 376.3L1099.1 376.8L1100.0 377.3" fill="none" stroke="#585858" stroke-width="1.0" stroke-opacity="0.85" stroke-linejoin="round"/>
<path d="M133.0 417.9L133.8 418.0L134.8 418.1L136.0 418.1L137.3 418.2L138.7 418.5L140.1 418.6L141.7 418.9L143.3 419.1L145.0 419.2L146.8 419.3L148.6 419.5L150.3 419.5L152.1 419.7L153.9 419.7L155.6 420.0L157.4 419.8L159.0 420.0L160.5 419.7L162.0 419.9L163.6 419.7L165.2 419.6L166.8 419.6L168.4 419.2L170.1 419.1L171.7 419.2L173.4 418.9L175.0 418.6L176.6 418.7L178.2 418.5L179.8 418.0L181.3 417.9L182.8 417.6L184.2 417.5L185.5 417.4L186.8 417.1L188.0 417.1L190.1 416.5L192.0 416.1L193.6 415.9L195.2 415.3L196.6 414.9L197.9 414.5L199.2 414.1L200.4 413.8L201.7 413.5L203.0 413.6L204.8 413.7L206.4 413.9L207.9 414.2L209.3 414.6L210.9 415.2L212.6 415.9L214.5 416.5L215.9 416.7L217.3 417.4L218.8 418.1L220.3 418.9L221.9 419.7L223.5 420.3L225.2 420.8L226.9 421.5L228.6 421.7L230.3 421.9L232.0 421.6L233.5 421.3L235.0 420.5L236.5 419.7L238.1 418.4L239.6 417.3L241.2 415.9L242.8 414.7L244.4 413.3L246.0 412.2L247.6 411.3L249.2 410.6L250.8 410.0L252.4 410.0L254.0 410.2L255.6 410.9L257.2 412.0L258.8 413.4L260.4 414.7L261.9 416.4L263.5 417.8L265.1 419.5L266.7 420.8L268.3 421.9L269.8 423.0L271.4 423.7L272.9 423.6L274.5 423.3L276.1 422.5L277.7 421.1L279.3 419.5L280.8 417.6L282.4 415.7L283.9 414.0L285.4 412.3L287.0 410.8L288.6 409.4L290.2 408.4L291.8 408.1L293.3 408.5L294.9 409.2L296.4 410.1L298.0 411.3L299.5 412.9L301.1 414.5L302.7 416.2L304.3 417.7L305.9 419.5L307.5 420.9L309.0 421.8L310.6 422.6L312.2 423.2L313.8 423.0L315.3 422.9L316.8 422.1L318.3 421.3L319.8 420.3L321.4 419.0L322.9 417.8L324.4 416.6L326.0 415.6L327.6 414.7L329.2 413.7L330.9 413.3L332.6 412.9L334.0 412.8L335.5 413.0L336.9 413.5L338.4 413.8L339.9 414.3L341.4 415.0L342.9 415.6L344.5 416.2L346.0 416.8L347.6 417.5L349.2 418.2L350.8 418.7L352.4 419.2L354.1 419.5L355.7 419.7L357.4 420.0L358.8 419.9L360.3 419.6L361.8 419.6L363.3 419.4L364.8 419.1L366.4 418.7L368.0 418.3L369.5 417.8L371.1 417.4L372.7 416.8L374.3 416.2L375.9 415.9L377.5 415.4L379.0 415.2L380.6 414.8L382.1 414.5L383.6 414.2L385.1 414.0L386.6 414.0L388.2 414.1L389.8 414.1L391.4 414.3L393.0 414.7L394.6 415.0L396.2 415.5L397.7 415.8L399.3 416.3L400.8 416.8L402.4 417.4L403.9 417.9L405.4 418.3L406.9 418.7L408.4 418.8L409.9 419.0L411.3 419.3L412.8 419.3L414.4 419.1L416.1 419.0L417.7 418.6L419.4 418.2L421.0 417.7L422.6 417.4L424.2 416.5L425.8 416.1L427.3 415.5L428.9 414.9L430.4 414.5L431.9 414.0L433.3 413.9L434.7 413.6L436.1 413.6L437.9 413.5L439.8 413.8L441.5 414.3L443.3 414.9L445.0 415.4L446.6 416.1L448.2 416.9L449.7 417.5L451.1 417.9L452.4 418.4L453.6 418.8L455.7 418.9L457.2 419.0L458.5 418.7L459.8 418.4L461.7 417.9L463.0 417.7L464.5 417.3L466.2 417.0L467.9 416.5L469.6 416.1L471.3 415.7L473.0 415.3L474.7 415.0L476.2 414.9L478.0 415.1L479.8 415.4L481.6 415.8L483.2 416.5L484.9 416.7L486.4 416.9L487.9 416.4L489.8 414.7L491.5 412.2L493.1 409.4L494.8 407.0L496.6 406.1L498.2 406.9L499.9 408.6L501.6 410.8L503.3 413.4L505.1 415.8L506.9 417.9L508.4 419.6L509.9 421.7L511.5 423.9L513.0 425.8L514.7 427.3L516.5 428.2L518.5 427.9L519.9 427.1L521.4 425.8L523.0 424.2L524.7 422.0L526.4 419.5L528.1 417.3L529.8 414.9L531.5 412.7L533.1 410.6L534.6 409.2L536.0 408.1L538.0 407.4L539.8 407.5L541.4 407.9L543.0 408.7L544.5 410.2L546.1 411.5L547.7 413.4L549.3 416.0L551.0 419.9L552.6 424.2L554.2 428.7L555.9 432.2L557.6 434.6L559.3 435.3L560.8 434.0L562.3 431.3L563.8 427.1L565.3 422.3L566.9 417.8L568.6 413.3L570.4 409.8L572.4 407.7L573.8 407.2L575.3 407.0L576.9 407.1L578.5 407.6L580.3 408.2L582.0 409.1L583.8 410.0L585.5 411.0L587.2 412.0L588.8 413.1L590.3 413.8L591.7 414.7L592.9 415.0L595.4 415.7L597.3 415.8L598.8 415.9L600.1 416.0L601.6 416.4L603.5 417.9L605.2 420.0L606.9 421.8L608.9 422.3L610.4 421.3L612.0 419.6L613.7 417.6L615.5 415.5L617.3 413.8L619.1 412.8L620.7 412.6L622.3 412.6L624.0 413.2L625.7 413.7L627.4 414.6L629.1 415.5L630.8 416.5L632.4 418.0L633.9 419.9L635.5 422.3L637.0 424.8L638.7 426.6L640.4 427.5L642.4 427.6L643.8 426.5L645.3 424.9L646.9 422.7L648.6 420.1L650.3 417.3L652.1 414.6L653.8 411.9L655.5 409.4L657.1 407.2L658.6 405.7L660.0 404.7L662.0 404.8L663.8 406.6L665.4 408.9L666.9 411.8L668.5 414.4L670.0 416.7L671.6 417.9L673.3 417.9L674.9 417.1L676.6 415.8L678.2 414.1L679.9 412.6L681.5 411.7L683.2 411.3L684.9 411.7L686.5 412.7L688.2 414.2L689.9 415.8L691.6 417.2L693.2 418.2L694.9 418.7L696.6 418.3L698.3 416.9L700.1 415.4L701.8 413.8L703.5 412.2L705.1 411.2L706.6 411.2L708.4 413.2L709.9 417.2L711.4 421.5L713.1 424.8L715.3 426.0L716.6 425.3L718.1 423.8L719.7 421.6L721.3 419.1L723.0 416.4L724.8 413.8L726.5 411.0L728.2 408.8L729.8 407.1L731.3 406.1L733.1 406.0L734.9 406.7L736.6 408.1L738.3 409.8L739.9 411.7L741.5 413.6L743.0 414.9L744.5 415.7L746.3 416.2L748.0 415.8L749.6 415.3L751.2 414.7L752.9 414.0L754.7 414.1L756.1 414.0L757.6 414.2L759.0 414.5L760.6 414.9L762.2 415.2L763.9 415.5L765.8 416.2L767.8 416.9L769.1 417.7L770.4 418.3L771.9 419.2L773.4 420.3L775.0 421.4L776.6 422.4L778.2 423.5L779.9 424.7L781.5 425.5L783.1 426.4L784.7 426.9L786.2 427.4L787.6 427.5L789.0 427.6L790.8 426.9L792.6 425.5L794.4 423.9L796.1 421.9L797.8 419.6L799.4 417.4L800.9 415.2L802.4 413.3L803.7 411.6L805.0 410.5L807.2 409.4L809.0 409.6L810.6 410.1L812.1 410.9L813.7 412.1L815.4 413.5L816.9 415.2L818.6 417.6L820.4 419.4L822.5 420.7L823.9 421.3L825.4 421.9L827.0 422.3L828.7 422.7L830.4 423.0L832.2 423.2L833.9 423.0L835.5 422.7L837.0 422.3L838.8 420.6L840.5 418.2L842.1 415.3L843.7 412.4L845.3 409.5L847.0 407.6L848.7 407.1L850.3 407.7L852.0 409.2L853.8 411.2L855.5 413.7L857.3 416.3L858.9 419.0L860.4 421.0L861.8 422.2L863.8 423.5L865.2 423.4L866.7 422.6L869.0 420.9L870.3 419.5L871.7 418.0L873.3 415.9L875.0 413.9L876.7 411.7L878.5 409.4L880.3 407.4L882.0 405.7L883.7 404.7L885.2 404.2L887.0 404.4L888.8 405.3L890.6 407.0L892.3 408.9L893.9 411.1L895.5 413.5L896.9 415.9L898.3 417.9L900.1 422.2L901.6 427.6L903.0 432.6L904.4 436.1L906.2 436.1L907.5 433.9L908.9 429.4L910.3 423.7L911.9 417.4L913.4 410.9L915.1 405.5L916.9 401.5L918.7 399.6L920.1 399.7L921.7 401.0L923.4 403.0L925.1 405.8L926.9 408.9L928.7 412.3L930.4 415.8L932.0 419.1L933.6 422.2L935.0 424.7L936.2 426.7L938.7 429.4L940.3 430.9L941.7 430.7L943.5 429.6L945.0 427.6L946.5 424.6L948.1 421.3L949.9 417.8L951.7 414.6L953.7 411.9L955.1 410.7L956.6 409.7L958.1 408.5L959.7 407.8L961.4 407.1L963.1 406.7L964.8 406.5L966.5 406.6L968.3 406.9L969.8 407.8L971.4 408.9L973.2 410.3L974.9 412.0L976.7 414.0L978.4 415.9L980.1 417.7L981.7 419.7L983.2 421.3L984.5 422.6L985.7 423.7L988.2 426.2L989.4 426.9L991.6 425.3L992.8 423.7L994.2 421.2L995.7 418.4L997.4 415.0L999.1 412.0L1000.8 408.8L1002.6 406.4L1004.3 404.9L1006.0 404.2L1007.5 404.8L1009.1 406.1L1010.7 408.2L1012.3 411.1L1013.9 413.7L1015.4 416.7L1017.0 419.6L1018.5 422.2L1019.9 424.1L1021.3 425.3L1023.0 425.7L1024.6 425.0L1026.0 423.9L1027.4 422.2L1028.9 420.4L1030.5 419.1L1032.4 418.0L1033.7 417.5L1035.2 417.1L1036.7 416.7L1038.2 416.5L1039.8 416.2L1041.5 416.0L1043.1 416.0L1044.8 415.9L1046.5 415.7L1048.3 415.3L1050.0 415.1L1051.5 414.7L1053.0 414.3L1054.6 413.8L1056.2 413.4L1057.9 412.9L1059.5 412.3L1061.2 411.8L1062.8 411.2L1064.4 410.9L1065.9 410.6L1067.5 410.4L1068.9 410.4L1070.3 410.6L1072.2 411.1L1073.9 412.3L1075.6 413.6L1077.2 415.3L1078.7 416.8L1080.2 418.3L1081.7 419.5L1083.3 420.4L1084.9 420.7L1086.5 420.8L1088.1 420.2L1089.9 419.3L1091.6 418.3L1093.4 416.9L1095.0 415.8L1096.6 414.5L1097.9 413.4L1099.1 412.6L1100.0 411.9" fill="none" stroke="#585858" stroke-width="1.0" stroke-opacity="0.85" stroke-linejoin="round"/>
<path d="M133.0 458.7L133.2 460.8L133.3 460.7L133.5 461.4L133.7 457.7L133.9 457.7L134.1 457.1L134.3 457.2L134.6 459.6L134.8 456.2L135.1 458.0L135.3 456.1L135.6 456.2L135.9 456.6L136.2 458.4L136.5 456.8L136.8 453.4L137.1 454.4L137.4 453.4L137.7 456.8L138.0 456.2L138.3 455.8L138.7 455.5L139.0 454.8L139.3 455.5L139.7 454.3L140.0 451.2L140.4 454.0L140.7 451.7L141.1 452.8L141.4 451.5L141.8 450.5L142.1 449.9L142.5 450.0L142.8 449.1L143.2 447.8L143.5 451.3L143.9 450.9L144.2 451.7L144.6 450.0L144.9 449.2L145.3 450.0L145.6 446.7L145.9 449.5L146.2 448.2L146.6 446.8L146.9 446.9L147.2 448.6L147.5 447.2L147.8 448.4L148.1 449.3L148.4 448.3L148.7 447.1L149.0 449.2L149.3 448.2L149.6 448.5L149.9 448.6L150.2 449.8L150.5 448.7L150.8 452.1L151.1 454.1L151.4 451.6L151.7 453.8L152.0 455.4L152.3 451.2L152.6 452.2L152.9 456.2L153.2 456.9L153.5 456.4L153.8 454.4L154.1 456.3L154.4 459.2L154.7 459.8L155.0 459.9L155.3 457.3L155.6 461.2L155.9 459.3L156.2 461.6L156.5 459.1L156.8 463.9L157.1 462.4L157.4 463.5L157.7 461.3L158.0 463.8L158.3 464.0L158.6 464.5L158.9 463.6L159.2 465.8L159.5 464.1L159.8 464.1L160.1 463.7L160.4 466.6L160.7 463.8L161.1 464.5L161.4 463.7L161.7 466.8L162.0 466.3L162.3 466.2L162.6 463.5L162.9 465.4L163.2 464.8L163.5 463.3L163.7 462.6L164.0 467.5L164.3 462.6L164.6 463.3L164.9 462.8L165.2 464.1L165.5 461.0L165.8 462.6L166.1 461.7L166.4 463.6L166.7 458.9L167.0 460.1L167.3 460.4L167.6 462.4L167.9 459.5L168.2 458.7L168.5 459.2L168.8 456.7L169.1 454.8L169.4 456.7L169.8 458.2L170.1 456.8L170.4 453.7L170.7 455.4L171.0 455.7L171.3 452.0L171.6 453.2L171.9 451.5L172.2 450.4L172.5 450.1L172.8 449.1L173.1 449.4L173.4 447.3L173.7 448.7L174.0 446.7L174.3 449.8L174.7 448.5L175.0 445.1L175.3 448.7L175.6 445.4L175.9 446.6L176.2 446.7L176.5 445.3L176.8 444.9L177.1 445.5L177.4 443.8L177.7 447.5L178.0 443.6L178.3 447.3L178.6 444.2L178.9 444.7L179.2 445.2L179.5 443.5L179.8 444.1L180.1 445.5L180.4 446.2L180.7 448.7L181.0 449.5L181.3 444.9L181.6 447.8L182.0 446.0L182.3 449.9L182.6 447.7L182.9 451.1L183.2 449.7L183.5 447.9L183.8 447.7L184.1 449.4L184.4 453.1L184.7 449.8L185.0 452.0L185.3 452.0L185.6 452.3L185.9 455.2L186.2 452.6L186.5 455.7L186.8 455.9L187.1 457.8L187.5 456.1L187.8 458.7L188.1 456.7L188.4 457.8L188.7 458.5L189.0 460.1L189.3 460.8L189.6 457.2L189.9 457.7L190.2 460.2L190.5 462.0L190.8 460.9L191.1 460.0L191.4 463.8L191.7 460.6L192.0 459.8L192.2 459.8L192.5 459.9L192.8 463.7L193.1 460.7L193.4 464.0L193.7 464.8L194.0 465.6L194.3 464.6L194.6 462.6L195.0 463.6L195.3 464.6L195.6 463.9L195.9 461.6L196.2 463.9L196.5 460.3L196.8 461.2L197.1 464.5L197.5 461.5L197.8 460.2L198.1 462.6L198.4 460.6L198.7 457.9L199.0 457.7L199.3 458.6L199.6 458.6L199.9 461.4L200.2 457.4L200.5 460.1L200.8 459.8L201.1 457.1L201.4 459.7L201.7 458.1L202.0 456.2L202.3 454.7L202.6 455.3L203.0 457.2L203.3 454.9L203.6 452.8L203.9 453.3L204.2 453.5L204.5 451.6L204.8 453.3L205.1 450.1L205.4 453.9L205.7 450.2L206.0 449.6L206.3 451.8L206.6 450.1L206.9 452.9L207.2 450.6L207.5 450.6L207.8 452.1L208.1 448.7L208.4 451.4L208.7 450.8L209.0 449.6L209.3 452.3L209.6 447.4L209.9 451.8L210.2 448.1L210.5 451.7L210.8 448.2L211.1 447.8L211.4 450.2L211.7 452.5L212.0 449.1L212.3 450.4L212.6 451.2L212.9 449.5L213.2 451.1L213.5 448.6L213.8 451.0L214.1 452.8L214.3 450.8L214.6 450.4L214.9 449.7L215.2 453.3L215.5 452.1L215.8 454.8L216.1 454.2L216.4 451.1L216.7 455.5L217.0 455.8L217.3 455.5L217.6 455.8L217.9 455.2L218.2 455.6L218.5 455.6L218.8 455.4L219.1 453.9L219.4 453.4L219.8 456.7L220.1 456.2L220.4 453.6L220.7 456.8L221.0 456.8L221.3 456.5L221.7 458.0L222.0 458.7L222.3 456.3L222.6 458.6L223.0 457.1L223.3 457.6L223.6 456.8L223.9 459.6L224.1 457.1L224.4 459.8L224.7 456.7L225.0 458.5L225.2 459.9L225.5 458.7L225.8 457.2L226.1 455.7L226.4 457.9L226.6 457.6L226.9 459.8L227.2 459.7L227.5 460.8L227.8 458.0L228.0 457.9L228.3 458.8L228.6 459.8L228.9 456.4L229.2 457.1L229.5 456.8L229.8 457.8L230.0 457.7L230.3 461.2L230.6 457.3L230.9 461.1L231.2 457.8L231.5 457.4L231.8 461.4L232.1 456.9L232.4 457.0L232.7 457.1L233.0 456.8L233.3 458.5L233.6 457.6L233.9 457.4L234.2 456.6L234.5 460.2L234.9 456.8L235.2 457.8L235.5 459.5L235.8 461.2L236.1 460.0L236.4 460.2L236.8 460.2L237.1 460.7L237.4 460.9L237.7 457.3L238.1 456.7L238.4 459.7L238.7 459.1L239.1 459.1L239.4 460.4L239.8 457.2L240.1 459.9L240.5 458.4L240.8 458.3L241.1 457.3L241.3 457.5L241.6 458.9L241.9 458.7L242.1 460.5L242.4 457.2L242.7 459.3L243.0 456.0L243.2 458.8L243.5 456.1L243.8 459.6L244.1 460.1L244.3 456.3L244.6 459.0L244.9 455.8L245.2 456.1L245.5 455.0L245.8 456.6L246.1 454.7L246.3 457.6L246.6 456.8L246.9 455.9L247.2 457.2L247.5 454.6L247.8 454.9L248.1 454.9L248.4 452.9L248.7 457.3L249.0 453.0L249.3 452.9L249.6 456.4L249.9 456.3L250.2 454.2L250.5 453.9L250.8 452.3L251.1 451.4L251.4 453.9L251.7 452.3L252.0 451.6L252.3 455.4L252.6 450.6L252.9 452.2L253.2 454.1L253.5 453.9L253.9 450.4L254.2 453.6L254.5 452.5L254.8 452.7L255.1 454.2L255.4 453.3L255.7 452.1L256.0 452.9L256.3 451.3L256.7 451.5L257.0 452.7L257.3 451.6L257.6 450.2L257.9 448.3L258.2 452.2L258.6 449.7L258.9 450.1L259.2 449.3L259.5 450.6L259.8 449.7L260.2 451.9L260.5 450.6L260.8 450.4L261.1 451.5L261.4 449.7L261.8 450.1L262.1 451.2L262.4 451.1L262.7 451.2L263.0 452.0L263.4 450.2L263.7 450.3L264.0 448.4L264.3 448.7L264.6 449.7L264.9 450.1L265.2 452.3L265.5 447.9L265.7 449.6L266.0 451.7L266.3 450.4L266.6 452.5L267.0 449.0L267.3 452.3L267.6 450.7L267.9 451.6L268.2 449.0L268.5 451.0L268.8 453.2L269.1 453.1L269.4 452.3L269.8 451.8L270.1 450.0L270.4 453.6L270.7 452.5L271.0 454.1L271.4 453.7L271.7 452.9L272.0 455.5L272.3 451.9L272.6 456.4L273.0 452.1L273.3 456.9L273.6 455.2L273.9 454.7L274.3 457.4L274.6 455.5L274.9 455.7L275.2 453.6L275.6 457.7L275.9 457.1L276.2 455.3L276.5 454.8L276.9 456.7L277.2 459.6L277.5 459.5L277.8 457.6L278.2 455.7L278.5 460.0L278.8 457.0L279.1 460.0L279.4 459.0L279.8 461.7L280.1 457.7L280.4 461.3L280.7 461.1L281.0 457.7L281.3 460.8L281.7 459.6L282.0 461.9L282.3 463.5L282.6 462.1L282.9 461.4L283.2 462.2L283.5 460.6L283.8 461.9L284.1 460.3L284.4 463.6L284.7 460.3L285.0 462.9L285.3 461.3L285.6 463.4L285.8 460.9L286.1 460.9L286.4 464.2L286.7 464.8L287.0 465.8L287.2 464.8L287.5 466.6L287.8 462.2L288.0 464.8L288.3 464.9L288.6 462.6L288.8 462.5L289.1 463.1L289.3 464.6L289.6 466.0L289.8 465.6L290.1 464.9L290.3 462.3L290.7 465.6L291.1 464.5L291.5 462.6L291.9 464.7L292.3 462.6L292.7 462.7L293.1 463.2L293.4 464.5L293.8 460.9L294.1 462.3L294.5 460.9L294.8 462.7L295.1 463.1L295.4 459.8L295.8 461.8L296.1 460.0L296.4 458.3L296.7 458.1L297.0 459.0L297.3 459.9L297.5 458.3L297.8 454.7L298.1 458.3L298.4 456.7L298.7 455.4L298.9 454.0L299.2 454.5L299.5 455.3L299.7 452.7L300.0 451.5L300.3 454.9L300.5 452.2L300.8 449.8L301.1 453.7L301.3 449.2L301.6 450.2L301.9 451.1L302.1 451.0L302.4 451.9L302.7 447.9L303.0 449.7L303.3 451.1L303.5 448.7L303.8 449.9L304.1 448.5L304.4 449.7L304.7 450.9L305.0 447.7L305.3 449.8L305.6 447.8L305.9 450.8L306.2 450.3L306.5 451.0L306.8 451.3L307.1 450.1L307.4 452.2L307.7 448.4L308.0 451.0L308.3 448.7L308.6 451.8L308.9 452.8L309.2 451.1L309.5 454.3L309.8 452.7L310.1 452.1L310.4 452.6L310.7 455.1L311.0 454.6L311.3 453.4L311.6 455.3L311.9 459.3L312.2 457.2L312.5 458.9L312.8 458.1L313.1 456.8L313.4 460.1L313.7 458.6L314.0 458.6L314.3 461.7L314.6 462.5L314.9 459.5L315.2 464.8L315.5 460.4L315.8 461.6L316.1 462.8L316.4 465.6L316.7 465.7L317.0 466.0L317.3 464.7L317.6 467.4L317.9 463.6L318.2 468.1L318.6 463.5L318.9 464.1L319.2 467.3L319.5 467.4L319.8 466.9L320.1 464.6L320.4 467.7L320.7 465.8L321.0 464.0L321.2 463.2L321.5 467.6L321.8 462.5L322.1 463.1L322.4 463.5L322.7 465.9L323.0 465.3L323.3 464.9L323.6 463.4L323.9 459.8L324.2 463.1L324.5 459.9L324.8 463.3L325.1 463.0L325.4 457.8L325.7 460.7L326.0 457.7L326.3 456.5L326.6 460.0L326.9 457.2L327.2 455.9L327.6 456.8L327.9 453.7L328.2 455.0L328.5 455.7L328.8 456.3L329.1 452.0L329.4 455.5L329.7 450.9L330.0 451.0L330.3 451.2L330.6 449.9L330.9 449.1L331.2 451.6L331.5 449.9L331.8 448.4L332.1 449.8L332.5 447.4L332.8 450.1L333.1 451.3L333.4 448.4L333.7 448.0L334.0 447.7L334.3 447.4L334.6 447.5L334.9 446.3L335.2 446.8L335.5 448.9L335.8 447.8L336.1 445.8L336.4 446.3L336.7 450.1L337.0 447.8L337.3 450.5L337.6 449.7L337.9 450.0L338.2 449.0L338.5 450.5L338.8 450.0L339.1 451.0L339.4 453.7L339.7 449.8L340.0 450.8L340.3 454.9L340.6 455.5L340.9 455.5L341.1 456.3L341.4 452.9L341.7 456.7L342.0 454.1L342.3 458.5L342.6 456.7L342.9 457.8L343.2 458.6L343.5 457.5L343.8 460.0L344.1 462.1L344.4 460.6L344.7 461.1L345.0 461.3L345.3 460.9L345.6 462.0L345.9 465.4L346.2 466.5L346.5 464.0L346.8 464.0L347.1 464.7L347.5 467.9L347.8 465.2L348.1 465.1L348.4 466.2L348.7 465.3L349.0 466.0L349.3 466.7L349.7 469.1L350.0 470.7L350.3 467.4L350.6 467.7L350.9 469.3L351.3 466.5L351.6 466.8L351.9 469.2L352.2 468.6L352.4 467.9L352.7 468.1L353.0 465.9L353.3 466.9L353.6 466.3L353.9 466.3L354.2 465.2L354.4 468.7L354.7 464.2L355.0 466.0L355.3 464.3L355.6 464.1L355.9 466.6L356.2 467.2L356.5 466.7L356.7 463.0L357.0 463.6L357.3 462.5L357.6 460.2L357.9 461.5L358.2 461.9L358.5 460.3L358.8 461.7L359.1 459.4L359.4 458.1L359.7 460.6L360.0 458.4L360.3 456.2L360.6 459.0L360.9 456.2L361.2 456.3L361.5 455.0L361.8 456.5L362.1 455.2L362.4 453.2L362.7 452.2L363.0 453.8L363.3 453.6L363.7 451.9L364.0 452.8L364.3 450.5L364.6 449.5L364.9 448.5L365.2 447.8L365.6 446.8L365.9 450.3L366.2 448.0L366.5 445.2L366.8 445.5L367.2 446.3L367.5 448.0L367.8 448.0L368.2 447.2L368.5 444.6L368.8 445.1L369.1 447.6L369.5 444.6L369.8 445.9L370.2 442.7L370.5 444.9L370.8 445.0L371.1 447.2L371.3 447.5L371.6 446.4L371.9 444.3L372.2 447.3L372.5 447.6L372.8 443.4L373.1 445.4L373.4 446.2L373.7 445.1L374.0 445.0L374.3 448.1L374.6 445.3L374.9 447.4L375.2 444.9L375.5 447.4L375.8 450.4L376.2 445.7L376.5 446.5L376.8 451.0L377.1 451.4L377.4 449.6L377.8 448.9L378.1 449.3L378.4 451.9L378.7 451.5L379.1 451.2L379.4 452.9L379.7 450.2L380.0 452.1L380.4 455.1L380.7 455.7L381.0 453.9L381.3 455.9L381.7 456.8L382.0 455.4L382.3 453.9L382.6 454.1L383.0 457.5L383.3 456.2L383.6 457.6L383.9 455.5L384.3 460.6L384.6 457.6L384.9 459.8L385.2 460.2L385.5 459.2L385.9 458.9L386.2 461.1L386.5 460.3L386.8 459.4L387.1 460.3L387.4 459.9L387.7 464.8L388.0 461.5L388.3 465.6L388.6 464.4L388.9 466.4L389.2 464.2L389.5 463.4L389.8 462.8L390.1 465.9L390.4 466.5L390.7 466.7L391.0 468.1L391.3 464.1L391.5 467.2L391.8 467.7L392.1 469.1L392.4 465.6L392.6 469.3L392.9 464.7L393.1 467.7L393.4 466.4L393.7 467.5L393.9 465.7L394.3 466.8L394.7 466.6L395.1 467.1L395.4 466.6L395.8 465.5L396.1 465.0L396.5 466.3L396.8 468.7L397.2 467.6L397.5 463.6L397.9 465.7L398.2 462.8L398.5 463.2L398.8 466.2L399.1 462.3L399.4 460.5L399.7 462.4L400.1 462.0L400.3 461.0L400.6 462.7L400.9 459.8L401.2 458.4L401.5 457.0L401.8 458.3L402.1 458.6L402.4 456.7L402.6 455.5L402.9 454.2L403.2 456.7L403.5 456.9L403.7 454.2L404.0 454.3L404.3 451.7L404.5 450.3L404.8 449.3L405.1 451.7L405.4 452.8L405.6 451.2L405.9 450.7L406.2 451.3L406.4 448.7L406.7 448.5L407.0 447.3L407.3 450.1L407.5 449.2L407.8 448.2L408.1 449.4L408.4 450.0L408.7 445.6L409.0 446.5L409.3 447.9L409.7 449.4L410.0 447.2L410.3 448.5L410.6 449.9L410.9 448.3L411.2 450.7L411.5 447.9L411.7 450.2L412.0 451.9L412.3 453.5L412.6 452.2L412.9 453.6L413.2 454.1L413.5 454.7L413.8 454.2L414.0 454.1L414.3 453.8L414.6 458.3L414.9 458.4L415.2 458.4L415.5 459.5L415.8 457.9L416.1 457.7L416.4 460.2L416.7 460.4L417.0 462.0L417.3 463.7L417.6 461.7L417.9 462.1L418.2 464.3L418.5 465.7L418.8 464.5L419.1 465.0L419.5 466.9L419.8 467.3L420.1 463.1L420.5 468.1L420.8 463.7L421.1 466.2L421.5 466.0L421.8 468.5L422.0 464.6L422.3 463.6L422.6 468.3L422.9 465.6L423.2 465.5L423.4 465.2L423.7 464.3L424.0 462.9L424.3 465.4L424.6 463.5L424.9 464.7L425.2 467.1L425.5 466.8L425.9 463.0L426.2 462.9L426.5 461.5L426.8 463.7L427.1 461.2L427.4 460.6L427.8 464.4L428.1 462.2L428.4 463.6L428.7 459.7L429.0 459.1L429.4 460.9L429.7 461.1L430.0 458.1L430.3 459.4L430.7 459.3L431.0 458.6L431.3 457.3L431.6 457.6L432.0 455.5L432.3 455.1L432.6 454.5L432.9 458.2L433.2 454.8L433.5 456.6L433.9 453.4L434.2 457.1L434.5 452.3L434.8 456.0L435.1 454.3L435.4 456.0L435.7 455.6L436.0 450.7L436.3 450.7L436.6 451.5L436.8 450.2L437.1 454.2L437.4 450.3L437.7 452.9L438.0 454.1L438.2 452.7L438.5 454.1L438.7 452.2L439.0 450.8L439.4 453.8L439.7 449.8L440.1 451.6L440.5 450.9L440.8 451.6L441.1 450.4L441.5 453.9L441.8 454.2L442.1 452.9L442.4 452.0L442.7 454.6L443.0 454.8L443.3 450.3L443.6 454.9L443.9 451.1L444.2 451.3L444.5 452.4L444.8 453.4L445.1 454.2L445.4 457.0L445.6 453.1L445.9 456.0L446.2 455.5L446.5 453.9L446.8 458.7L447.0 458.6L447.3 455.9L447.6 458.9L447.9 457.0L448.2 458.4L448.5 459.9L448.8 458.6L449.1 457.4L449.4 455.9L449.7 458.2L450.0 458.9L450.4 457.4L450.7 459.1L451.0 456.2L451.3 457.5L451.5 458.7L451.8 458.7L452.1 459.9L452.3 457.5L452.6 457.7L452.9 460.1L453.1 457.7L453.4 457.0L453.7 459.4L453.9 458.0L454.2 459.2L454.5 461.2L454.7 461.1L455.0 460.1L455.3 461.0L455.5 460.0L455.8 457.7L456.1 460.6L456.4 456.4L456.6 456.7L456.9 458.2L457.2 456.1L457.5 458.5L457.8 458.1L458.1 456.3L458.4 459.0L458.7 455.5L459.0 457.5L459.3 456.3L459.6 459.6L459.9 455.4L460.2 456.5L460.6 458.1L460.9 455.9L461.3 458.5L461.6 454.7L461.9 454.4L462.3 453.9L462.7 456.7L463.0 456.1L463.4 456.3L463.8 455.9L464.2 457.9L464.6 454.3L464.8 453.9L465.1 454.3L465.3 457.3L465.6 457.1L465.9 453.4L466.1 452.7L466.4 457.8L466.7 457.6L467.0 453.9L467.2 455.1L467.5 452.5L467.8 454.8L468.1 452.9L468.4 455.5L468.7 452.6L469.0 454.6L469.3 453.3L469.6 453.9L470.0 456.2L470.3 453.9L470.6 456.1L470.9 454.7L471.2 452.0L471.6 452.0L471.9 454.8L472.2 454.4L472.5 451.0L472.9 454.3L473.2 451.5L473.5 452.8L473.9 454.4L474.2 454.4L474.5 450.4L474.9 450.1L475.2 450.6L475.5 452.2L475.9 453.9L476.2 452.2L476.6 452.6L476.9 452.8L477.2 450.9L477.6 450.2L477.9 452.3L478.2 451.3L478.6 452.5L478.9 453.0L479.2 450.1L479.6 449.4L479.9 448.1L480.2 450.4L480.5 448.9L480.9 448.8L481.2 449.7L481.5 450.7L481.8 450.4L482.1 449.1L482.4 450.0L482.7 449.8L483.1 451.2L483.4 450.0L483.7 450.8L483.9 447.5L484.2 450.6L484.5 446.2L484.8 450.3L485.1 446.1L485.4 449.2L485.6 447.4L485.9 446.8L486.2 449.8L486.4 446.6L486.7 449.4L486.9 446.3L487.2 447.0L487.4 447.9L487.7 448.9L487.9 449.3L488.3 447.8L488.8 450.5L489.2 446.3L489.6 447.3L490.0 448.5L490.3 449.8L490.7 450.3L491.1 451.7L491.4 449.2L491.7 451.0L492.0 451.6L492.4 449.1L492.7 450.5L493.0 451.2L493.2 452.4L493.5 452.4L493.8 450.7L494.1 451.4L494.3 452.4L494.6 451.5L494.9 455.5L495.1 456.5L495.4 456.0L495.6 453.7L495.9 456.0L496.1 453.4L496.4 454.7L496.6 455.2L496.9 457.3L497.1 457.5L497.4 457.6L497.7 455.8L497.9 457.8L498.2 459.3L498.5 460.2L498.7 457.7L499.0 458.3L499.3 460.6L499.6 456.3L499.9 459.3L500.2 456.7L500.5 460.3L500.8 459.6L501.1 456.4L501.4 456.1L501.7 460.6L501.9 457.2L502.2 458.4L502.5 458.3L502.8 457.0L503.1 455.3L503.3 458.3L503.6 456.1L503.9 456.3L504.2 458.0L504.5 458.4L504.8 454.8L505.0 454.8L505.3 456.8L505.6 454.8L505.9 456.9L506.2 453.9L506.5 452.0L506.8 453.0L507.1 456.0L507.4 454.1L507.7 456.0L508.0 455.0L508.4 454.1L508.7 451.4L509.0 452.5L509.4 450.4L509.7 451.9L510.1 451.3L510.5 455.1L510.8 451.0L511.2 452.1L511.5 450.5L511.7 451.3L512.0 454.2L512.2 452.8L512.5 453.5L512.8 455.3L513.1 454.8L513.4 452.5L513.7 455.4L514.0 455.3L514.3 455.0L514.6 454.8L514.9 457.2L515.2 455.8L515.5 453.3L515.8 457.6L516.1 457.0L516.4 455.2L516.8 458.2L517.1 459.3L517.4 458.6L517.7 457.5L518.1 459.7L518.4 456.1L518.7 456.3L519.0 458.4L519.4 459.4L519.7 460.3L520.0 460.7L520.4 460.3L520.7 459.9L521.0 462.1L521.4 461.5L521.7 460.0L522.0 462.2L522.3 461.9L522.7 463.9L523.0 463.7L523.3 465.5L523.6 464.6L523.9 463.6L524.2 464.6L524.5 462.9L524.9 464.5L525.2 467.0L525.5 462.7L525.7 464.5L526.0 464.7L526.3 466.3L526.6 463.8L526.9 466.5L527.2 463.6L527.4 468.2L527.7 463.7L528.0 466.7L528.2 467.3L528.5 466.3L528.7 464.8L529.1 465.2L529.5 467.9L529.9 465.5L530.3 465.8L530.6 467.6L531.0 464.8L531.3 466.1L531.6 464.6L532.0 465.4L532.3 463.8L532.6 460.8L532.9 460.7L533.2 460.4L533.5 459.6L533.7 460.9L534.0 459.4L534.3 458.5L534.6 456.2L534.8 460.6L535.1 457.4L535.4 455.4L535.7 457.3L535.9 453.8L536.2 453.6L536.5 457.2L536.8 455.4L537.1 453.4L537.3 451.9L537.6 454.7L537.9 451.9L538.3 452.2L538.6 451.8L538.9 453.6L539.2 451.6L539.5 450.6L539.8 454.9L540.1 453.4L540.3 451.5L540.6 451.4L540.9 456.0L541.3 454.2L541.6 454.8L541.9 457.0L542.2 452.8L542.5 453.6L542.8 454.5L543.1 457.5L543.4 454.9L543.7 457.7L544.1 459.4L544.4 457.8L544.7 459.7L545.0 456.9L545.3 459.7L545.6 459.6L545.9 461.6L546.3 460.6L546.6 462.4L546.9 464.1L547.2 464.6L547.5 464.4L547.8 464.2L548.1 465.8L548.4 463.3L548.7 461.4L549.0 465.7L549.2 463.6L549.5 463.6L549.8 466.9L550.1 464.1L550.3 462.7L550.6 466.6L551.0 461.7L551.3 461.7L551.6 464.6L551.9 461.4L552.2 463.6L552.5 459.2L552.8 460.0L553.1 459.7L553.4 460.1L553.6 459.8L553.9 458.5L554.2 455.0L554.4 457.5L554.7 452.4L554.9 453.4L555.2 450.4L555.5 453.2L555.8 450.8L556.1 449.7L556.4 451.5L556.7 447.1L557.0 448.6L557.3 448.2L557.7 444.4L558.1 447.6L558.5 445.1L558.9 446.9L559.3 446.9L559.5 444.7L559.8 445.1L560.0 445.3L560.2 443.7L560.5 446.3L560.7 447.3L561.0 448.7L561.2 446.3L561.5 447.0L561.7 447.8L562.0 448.7L562.2 448.5L562.5 450.4L562.8 450.2L563.0 451.2L563.3 448.9L563.6 449.8L563.8 448.3L564.1 450.5L564.4 450.9L564.7 450.6L564.9 454.0L565.2 454.2L565.5 454.4L565.8 452.2L566.1 454.1L566.4 456.0L566.7 454.1L567.0 455.6L567.3 454.0L567.6 458.4L567.9 457.0L568.3 456.8L568.6 459.4L568.9 456.8L569.2 458.6L569.6 458.4L569.9 461.3L570.2 459.7L570.6 462.4L570.9 462.1L571.3 458.7L571.6 461.5L572.0 461.3L572.3 459.9L572.7 463.9L573.1 463.8L573.5 464.8L573.8 462.5L574.2 460.9L574.6 463.7L575.0 464.7L575.4 461.8L575.6 464.4L575.9 462.9L576.1 462.4L576.4 465.5L576.7 464.0L576.9 465.4L577.2 464.3L577.5 464.5L577.7 461.3L578.0 463.9L578.3 460.5L578.6 463.9L578.9 463.4L579.2 461.7L579.5 462.6L579.8 464.4L580.1 462.8L580.4 460.6L580.7 464.0L581.0 462.8L581.3 460.2L581.6 460.6L581.9 460.0L582.2 460.4L582.5 462.2L582.9 459.7L583.2 462.4L583.5 458.9L583.8 458.9L584.1 458.4L584.5 460.7L584.8 457.0L585.1 457.0L585.4 460.1L585.8 459.6L586.1 456.3L586.4 457.4L586.8 455.3L587.1 459.1L587.4 459.1L587.8 454.5L588.1 458.1L588.4 455.1L588.8 458.7L589.1 454.1L589.4 458.0L589.8 454.4L590.1 455.5L590.4 455.2L590.7 456.2L591.1 453.7L591.4 455.7L591.7 455.6L592.1 454.6L592.4 451.2L592.7 453.1L593.0 451.7L593.4 455.5L593.7 452.3L594.0 454.5L594.3 451.9L594.6 450.9L594.9 450.3L595.2 452.9L595.6 449.5L595.9 451.3L596.2 451.4L596.5 453.5L596.8 452.7L597.1 448.6L597.4 449.9L597.6 450.2L597.9 451.9L598.2 448.3L598.5 451.2L598.8 449.1L599.1 450.6L599.3 449.3L599.6 448.2L599.9 451.7L600.1 451.6L600.4 449.1L600.6 449.2L600.9 448.3L601.1 449.1L601.4 449.4L601.6 447.9L602.0 452.2L602.4 449.9L602.8 449.1L603.2 449.3L603.6 449.1L604.0 451.0L604.3 451.1L604.7 453.4L605.0 451.4L605.4 451.3L605.7 451.5L606.0 454.9L606.4 452.5L606.7 453.0L607.0 453.3L607.3 456.2L607.6 455.7L607.9 458.5L608.2 457.1L608.4 460.3L608.7 457.8L609.0 459.1L609.3 461.8L609.5 462.9L609.8 463.2L610.1 463.2L610.3 462.9L610.6 463.1L610.9 466.3L611.1 463.8L611.4 464.8L611.7 466.8L611.9 466.6L612.2 469.0L612.5 466.5L612.7 469.5L613.0 469.5L613.3 466.7L613.5 471.1L613.8 470.3L614.1 471.8L614.4 470.0L614.7 472.0L615.0 470.4L615.3 472.4L615.6 471.9L615.9 468.8L616.2 472.3L616.5 468.5L616.8 470.1L617.1 469.0L617.4 469.3L617.7 468.2L617.9 468.0L618.2 469.9L618.5 467.7L618.8 467.8L619.1 465.4L619.4 465.0L619.7 467.2L620.0 465.1L620.3 465.4L620.6 466.5L620.9 461.6L621.2 461.8L621.5 464.1L621.8 462.6L622.1 462.5L622.4 458.4L622.7 459.1L623.0 460.5L623.3 460.3L623.6 458.2L624.0 458.8L624.3 454.8L624.6 455.7L624.9 456.3L625.2 451.6L625.5 453.2L625.8 450.9L626.1 451.3L626.4 452.4L626.7 449.4L627.0 447.1L627.3 448.5L627.6 448.2L627.9 446.0L628.2 448.2L628.5 445.0L628.8 445.4L629.2 445.4L629.5 442.2L629.8 446.3L630.1 444.5L630.4 442.4L630.7 445.4L631.0 444.4L631.3 443.3L631.6 442.7L631.9 443.6L632.2 441.2L632.5 442.4L632.8 440.2L633.1 440.5L633.4 443.5L633.7 443.4L634.0 445.3L634.3 444.6L634.6 445.5L634.9 445.5L635.3 444.5L635.6 446.7L635.9 444.4L636.2 449.0L636.5 447.8L636.8 447.4L637.1 449.3L637.4 448.7L637.7 448.6L638.0 451.0L638.3 453.5L638.6 452.2L639.0 454.5L639.3 452.7L639.6 456.4L639.9 457.0L640.2 456.9L640.5 454.1L640.8 459.2L641.1 458.1L641.4 458.4L641.7 461.0L642.0 460.5L642.3 462.5L642.6 461.9L642.9 460.5L643.3 465.2L643.6 462.1L643.9 464.3L644.2 463.5L644.5 463.3L644.8 466.1L645.1 466.2L645.4 465.1L645.7 469.4L646.0 468.4L646.3 469.1L646.5 467.1L646.8 468.5L647.1 470.8L647.4 470.4L647.7 469.5L648.0 469.3L648.3 472.4L648.6 470.3L648.9 468.9L649.3 471.2L649.6 471.0L649.9 471.2L650.2 468.8L650.5 469.5L650.8 468.7L651.2 466.8L651.5 468.7L651.8 469.2L652.1 468.1L652.4 469.8L652.7 466.2L653.0 467.8L653.4 467.9L653.7 466.9L654.0 463.4L654.3 467.1L654.6 462.5L654.9 461.1L655.2 463.4L655.5 461.3L655.8 460.9L656.1 459.4L656.4 462.2L656.7 457.6L657.0 458.4L657.3 461.3L657.6 456.3L657.9 458.7L658.2 457.7L658.5 455.8L658.8 456.6L659.1 453.7L659.4 456.7L659.7 456.3L660.0 455.1L660.3 451.2L660.6 452.3L660.8 451.1L661.1 455.0L661.4 449.7L661.7 453.4L662.0 454.1L662.3 453.8L662.5 450.1L662.8 453.4L663.1 449.4L663.5 451.0L663.8 452.7L664.1 451.2L664.5 450.3L664.8 452.5L665.1 451.6L665.4 454.2L665.8 454.4L666.1 450.9L666.4 455.2L666.7 452.4L667.0 452.8L667.3 457.3L667.6 457.5L667.9 456.1L668.3 458.2L668.6 457.2L668.9 456.0L669.2 457.8L669.5 459.1L669.8 456.8L670.1 458.4L670.3 461.2L670.6 461.1L670.9 458.6L671.2 459.3L671.5 464.2L671.8 460.2L672.1 464.5L672.3 464.1L672.6 462.1L672.9 462.3L673.2 463.2L673.4 462.1L673.7 462.6L674.0 466.9L674.2 464.4L674.5 466.3L674.8 466.0L675.2 462.9L675.5 465.5L675.7 465.7L676.0 461.6L676.2 462.7L676.5 462.5L676.7 463.0L676.9 462.6L677.1 461.5L677.4 463.3L677.6 463.2L677.8 460.0L678.0 461.6L678.2 457.7L678.5 460.6L678.7 455.5L679.0 458.5L679.2 457.2L679.5 457.2L679.8 454.7L680.1 456.0L680.5 454.6L680.9 452.9L681.3 453.6L681.7 454.5L682.2 455.9L682.7 455.0L683.2 453.9L683.4 452.7L683.6 453.8L683.8 451.4L684.1 452.0L684.3 454.3L684.5 451.7L684.8 450.3L685.0 450.2L685.3 450.1L685.5 453.7L685.8 450.2L686.1 454.1L686.3 452.2L686.6 452.5L686.9 451.8L687.2 453.8L687.4 453.7L687.7 453.3L688.0 452.7L688.3 451.3L688.6 452.8L688.9 452.2L689.2 452.6L689.5 455.0L689.8 452.8L690.1 454.2L690.4 452.5L690.8 452.3L691.1 454.6L691.4 451.4L691.7 454.1L692.0 454.0L692.4 451.5L692.7 451.2L693.0 454.8L693.3 455.1L693.7 452.8L694.0 451.4L694.3 451.6L694.7 453.5L695.0 451.8L695.3 451.0L695.7 454.1L696.0 455.4L696.3 451.2L696.7 455.8L697.0 451.2L697.4 452.1L697.7 451.8L698.0 453.6L698.4 452.8L698.7 453.8L699.0 452.5L699.4 454.1L699.7 455.2L700.0 453.5L700.4 452.8L700.7 455.4L701.0 455.5L701.4 455.8L701.7 457.1L702.0 453.9L702.3 455.2L702.7 455.2L703.0 454.4L703.3 454.7L703.6 454.7L703.9 454.6L704.2 454.9L704.5 456.8L704.8 456.0L705.1 457.5L705.4 457.6L705.7 454.6L706.0 454.3L706.3 455.9L706.6 457.9L706.9 454.0L707.3 455.3L707.6 456.1L707.9 454.1L708.2 458.2L708.5 458.3L708.9 455.7L709.2 458.2L709.5 455.3L709.8 455.0L710.1 457.9L710.4 456.4L710.7 456.8L711.1 459.3L711.4 459.1L711.7 458.7L712.0 460.1L712.3 457.4L712.6 460.3L712.9 460.4L713.2 459.2L713.5 457.8L713.8 459.0L714.1 460.9L714.4 461.9L714.7 458.9L715.0 460.8L715.3 462.3L715.6 462.7L715.9 458.9L716.2 460.7L716.5 459.3L716.8 462.6L717.1 462.7L717.4 463.8L717.7 461.3L718.0 463.0L718.3 459.6L718.6 460.8L718.9 462.2L719.2 462.8L719.5 462.7L719.8 463.2L720.1 463.4L720.4 464.0L720.7 460.9L721.0 465.0L721.3 461.2L721.6 461.2L721.9 464.3L722.2 461.3L722.5 465.3L722.8 463.5L723.1 464.4L723.4 466.4L723.7 465.1L724.0 465.8L724.3 463.0L724.6 464.1L724.9 463.9L725.2 463.1L725.5 464.3L725.8 463.9L726.1 463.9L726.4 462.1L726.7 464.6L727.0 463.8L727.3 463.1L727.6 466.2L727.9 465.3L728.2 462.8L728.5 466.0L728.8 465.5L729.1 461.5L729.5 461.5L729.8 461.3L730.1 465.5L730.4 464.3L730.7 463.2L731.0 463.4L731.3 464.9L731.6 462.3L731.9 459.6L732.2 460.2L732.6 460.2L732.9 461.8L733.2 459.8L733.5 461.4L733.8 458.0L734.1 461.4L734.4 457.9L734.7 457.8L735.1 460.5L735.4 456.3L735.7 456.5L736.0 458.8L736.3 459.8L736.6 455.0L736.9 455.4L737.2 457.6L737.5 455.6L737.8 457.9L738.2 455.1L738.5 454.6L738.8 456.2L739.1 452.7L739.4 456.9L739.7 452.8L740.0 455.4L740.3 455.7L740.6 455.4L740.9 453.9L741.2 451.0L741.5 452.4L741.8 451.0L742.1 453.4L742.4 449.5L742.7 450.2L743.0 452.6L743.3 452.1L743.6 453.1L743.9 452.4L744.2 452.8L744.5 450.9L744.8 450.1L745.1 452.3L745.4 448.5L745.7 447.8L746.0 448.9L746.3 452.1L746.5 449.4L746.8 448.9L747.1 448.2L747.4 451.3L747.7 448.6L748.1 448.3L748.4 451.1L748.7 451.2L749.0 449.1L749.3 451.8L749.7 451.3L750.0 450.3L750.3 453.0L750.6 451.8L750.9 448.9L751.3 448.9L751.6 452.7L751.9 452.4L752.2 450.1L752.5 454.3L752.8 450.7L753.1 451.1L753.4 452.1L753.7 454.2L754.1 454.9L754.4 456.4L754.7 453.3L755.0 452.5L755.3 453.6L755.6 453.9L755.9 457.7L756.2 455.8L756.5 456.2L756.8 457.1L757.1 459.4L757.4 455.7L757.7 457.5L758.0 456.9L758.3 457.4L758.6 461.3L758.9 457.4L759.2 459.1L759.4 462.1L759.7 462.7L760.0 461.8L760.3 460.6L760.6 461.4L760.9 462.7L761.2 464.6L761.5 464.5L761.8 463.2L762.1 465.1L762.3 462.7L762.6 463.2L762.9 465.3L763.2 465.6L763.5 465.5L763.8 464.5L764.1 461.9L764.3 464.4L764.6 465.8L764.9 464.4L765.2 465.1L765.6 466.3L765.9 463.4L766.2 464.9L766.5 466.7L766.9 467.2L767.2 466.9L767.5 462.2L767.8 465.4L768.1 465.7L768.5 466.4L768.8 466.6L769.1 464.4L769.4 464.0L769.8 462.2L770.1 466.0L770.4 465.4L770.7 465.9L771.0 463.2L771.3 462.5L771.7 462.8L772.0 464.4L772.3 462.0L772.6 460.6L772.9 462.7L773.2 462.1L773.5 463.1L773.8 462.6L774.1 464.9L774.4 460.4L774.7 464.2L775.0 464.4L775.3 462.5L775.6 461.5L775.9 460.4L776.2 463.5L776.5 460.9L776.8 462.9L777.0 461.2L777.3 458.4L777.6 460.1L777.9 459.3L778.1 459.3L778.4 457.7L778.7 459.2L779.0 458.3L779.2 457.9L779.5 460.6L779.7 457.9L780.0 458.4L780.4 456.6L780.7 456.4L781.1 460.4L781.4 455.3L781.7 457.9L782.1 455.3L782.4 457.0L782.7 457.8L783.0 456.5L783.3 456.7L783.6 455.5L783.8 457.3L784.1 454.3L784.4 453.1L784.7 452.9L785.0 455.6L785.2 454.3L785.5 454.2L785.8 453.4L786.1 453.0L786.3 450.8L786.6 453.7L786.9 453.1L787.2 451.8L787.5 453.3L787.8 452.0L788.1 448.6L788.4 452.5L788.7 451.1L789.0 452.0L789.3 449.8L789.7 447.4L790.0 448.9L790.4 450.6L790.7 448.0L790.9 447.6L791.2 452.5L791.5 449.2L791.7 451.2L792.0 449.1L792.3 449.2L792.6 452.5L792.9 449.8L793.1 451.7L793.4 451.5L793.7 451.1L794.0 454.0L794.3 455.1L794.6 453.5L794.9 452.4L795.2 451.4L795.5 455.4L795.8 456.5L796.1 457.1L796.4 452.7L796.7 456.6L797.0 453.9L797.3 455.2L797.7 457.9L798.0 458.2L798.3 455.6L798.6 458.1L798.9 458.2L799.2 457.3L799.6 460.8L799.9 460.2L800.2 457.1L800.5 457.2L800.8 460.3L801.2 459.2L801.5 460.7L801.8 461.9L802.1 460.8L802.4 461.7L802.8 463.4L803.1 462.6L803.4 461.1L803.7 462.6L804.0 464.1L804.4 461.6L804.7 463.1L805.0 461.7L805.3 459.4L805.6 462.7L805.9 459.5L806.2 463.4L806.5 462.9L806.8 461.8L807.1 463.1L807.4 458.1L807.7 461.7L808.0 462.2L808.3 458.6L808.6 458.8L808.9 456.8L809.2 459.9L809.5 455.9L809.9 458.8L810.2 457.8L810.5 458.2L810.8 458.1L811.1 459.0L811.4 457.0L811.8 457.7L812.1 453.1L812.4 455.0L812.7 455.3L813.0 456.5L813.3 452.5L813.7 455.2L814.0 453.1L814.3 454.5L814.6 451.3L814.9 450.6L815.2 453.1L815.5 451.4L815.8 451.3L816.1 450.7L816.4 451.4L816.7 448.7L817.0 446.8L817.3 450.8L817.6 449.2L817.9 446.0L818.2 450.4L818.5 450.0L818.8 447.9L819.1 446.5L819.4 448.6L819.7 448.8L819.9 448.9L820.2 447.4L820.5 448.5L820.7 449.4L821.0 448.1L821.4 446.7L821.7 445.4L822.0 446.2L822.4 448.0L822.7 450.4L823.0 446.4L823.3 449.4L823.6 451.2L823.9 449.2L824.2 450.0L824.5 452.3L824.8 450.9L825.1 449.6L825.4 452.0L825.7 451.2L826.0 456.5L826.2 454.5L826.5 457.6L826.8 454.5L827.1 456.3L827.4 458.7L827.6 456.5L827.9 458.7L828.2 459.4L828.5 458.0L828.7 460.2L829.0 464.2L829.3 462.1L829.6 460.7L829.9 464.4L830.2 463.1L830.5 464.2L830.8 466.7L831.1 463.4L831.4 463.3L831.7 465.0L832.0 465.9L832.4 465.9L832.7 465.6L833.0 468.0L833.3 467.4L833.5 467.3L833.8 467.0L834.1 464.9L834.4 465.4L834.7 464.8L835.0 464.3L835.3 465.9L835.6 463.3L835.9 463.4L836.2 461.6L836.5 461.7L836.8 462.3L837.1 464.3L837.4 460.5L837.7 462.1L838.0 461.0L838.3 457.9L838.7 457.5L839.0 458.5L839.3 459.8L839.6 456.4L839.9 455.9L840.2 455.9L840.5 456.4L840.9 454.0L841.2 457.1L841.5 454.8L841.8 456.5L842.1 455.7L842.4 456.0L842.8 451.1L843.1 454.6L843.4 452.0L843.7 451.6L844.0 452.8L844.3 448.4L844.6 449.6L844.9 451.8L845.2 447.4L845.5 451.1L845.8 449.6L846.1 446.5L846.4 446.7L846.7 447.7L847.0 449.4L847.3 450.7L847.6 449.7L847.9 446.0L848.3 449.0L848.6 448.6L848.9 448.3L849.2 447.8L849.5 450.5L849.9 449.6L850.2 451.5L850.5 447.6L850.8 448.7L851.1 447.9L851.4 448.6L851.7 448.5L852.0 451.3L852.3 449.9L852.7 452.7L853.0 452.2L853.3 450.0L853.6 451.5L853.9 454.2L854.2 454.2L854.5 450.8L854.8 455.9L855.1 453.6L855.4 456.6L855.7 455.2L856.0 456.1L856.3 454.4L856.6 453.9L856.9 457.3L857.2 455.8L857.5 456.4L857.8 457.6L858.1 459.3L858.4 455.5L858.7 459.2L859.0 460.0L859.2 456.1L859.5 456.3L859.8 460.5L860.1 461.0L860.4 459.3L860.7 460.3L861.0 456.5L861.4 458.8L861.7 461.3L862.0 457.0L862.3 458.5L862.6 457.0L862.9 458.2L863.2 456.2L863.5 460.3L863.8 457.0L864.1 460.9L864.4 456.9L864.7 458.4L865.0 457.4L865.3 457.2L865.6 455.9L865.9 455.3L866.2 460.3L866.5 458.2L866.8 455.6L867.1 459.8L867.4 456.0L867.7 457.6L868.0 456.3L868.3 455.3L868.6 456.2L868.9 454.3L869.2 456.0L869.5 453.9L869.8 455.7L870.1 454.1L870.4 457.5L870.7 454.7L871.0 453.7L871.4 457.8L871.7 457.9L872.0 455.6L872.3 453.5L872.6 455.6L872.9 458.4L873.1 456.4L873.4 453.5L873.7 454.4L874.0 458.5L874.3 456.1L874.6 456.3L874.9 456.6L875.2 456.8L875.5 457.1L875.8 456.2L876.1 454.2L876.4 456.3L876.7 456.2L877.0 458.6L877.3 456.5L877.6 459.8L877.9 455.6L878.2 457.9L878.5 460.1L878.8 458.7L879.1 455.4L879.4 457.7L879.7 460.3L880.0 456.7L880.3 457.1L880.6 460.4L881.0 460.1L881.3 457.5L881.6 459.6L881.9 458.8L882.2 460.8L882.5 456.4L882.8 456.6L883.1 460.7L883.4 460.8L883.7 458.7L884.0 459.7L884.3 456.4L884.6 458.1L884.9 457.2L885.2 457.1L885.5 458.6L885.8 460.3L886.1 456.1L886.4 459.2L886.7 456.1L887.0 458.4L887.3 457.9L887.6 456.8L887.9 454.5L888.2 456.1L888.5 458.2L888.8 454.4L889.1 456.8L889.4 457.2L889.7 454.2L890.0 452.5L890.3 453.3L890.6 454.9L890.9 453.9L891.2 453.7L891.5 451.0L891.8 451.8L892.1 453.2L892.4 452.6L892.7 450.8L893.0 450.1L893.3 448.4L893.6 448.9L893.9 450.3L894.2 449.0L894.5 448.1L894.8 451.5L895.2 448.8L895.5 447.6L895.8 448.0L896.1 450.9L896.4 447.8L896.7 445.9L897.0 447.9L897.3 449.1L897.7 448.1L898.0 446.9L898.3 448.5L898.6 447.7L898.9 447.6L899.2 446.9L899.5 447.5L899.8 447.5L900.0 450.7L900.3 449.0L900.6 451.1L900.9 448.1L901.2 452.6L901.5 450.4L901.8 451.8L902.1 453.4L902.4 453.6L902.7 455.6L903.0 452.6L903.3 453.7L903.6 455.4L903.9 453.4L904.2 456.8L904.5 458.0L904.8 456.3L905.1 455.4L905.4 456.9L905.7 458.9L906.0 457.6L906.3 460.5L906.6 457.8L906.9 459.0L907.2 460.6L907.6 461.7L907.9 461.0L908.2 463.3L908.5 462.7L908.8 464.5L909.1 460.9L909.4 463.5L909.7 463.4L910.0 463.7L910.4 466.4L910.7 465.8L911.0 463.9L911.3 465.7L911.6 464.0L911.9 468.3L912.3 464.1L912.6 464.1L912.9 463.8L913.2 464.3L913.5 464.6L913.8 463.5L914.1 466.0L914.3 464.3L914.6 467.7L914.9 465.6L915.2 463.4L915.5 464.6L915.8 467.1L916.1 467.1L916.4 464.7L916.7 466.1L917.0 464.8L917.3 465.6L917.6 465.8L917.9 463.1L918.2 460.8L918.4 461.3L918.7 460.8L919.0 462.8L919.3 462.4L919.6 462.2L919.9 459.6L920.2 459.2L920.5 459.9L920.8 459.9L921.1 456.6L921.4 460.1L921.7 460.3L922.0 455.9L922.4 456.5L922.7 456.5L923.0 457.7L923.3 457.9L923.6 456.3L923.9 454.1L924.2 457.1L924.5 456.3L924.8 452.0L925.1 456.2L925.5 453.9L925.8 454.1L926.1 452.1L926.4 452.5L926.7 454.9L927.0 453.6L927.4 452.0L927.7 450.3L928.0 453.9L928.3 453.5L928.7 453.9L929.0 449.6L929.3 452.3L929.6 453.8L929.8 451.1L930.1 453.3L930.4 451.7L930.7 452.1L931.0 451.1L931.3 451.1L931.5 452.8L931.8 451.9L932.1 453.0L932.4 450.0L932.7 449.5L933.0 453.5L933.3 449.2L933.5 450.0L933.8 451.6L934.1 453.5L934.4 449.7L934.7 450.9L935.0 452.8L935.3 454.6L935.6 451.8L935.9 450.9L936.2 452.6L936.5 451.5L936.8 452.3L937.0 455.5L937.3 452.2L937.6 451.1L937.9 451.2L938.2 453.6L938.5 451.9L938.8 455.6L939.1 455.4L939.5 454.7L939.8 456.3L940.1 454.9L940.4 453.7L940.7 455.8L941.0 456.1L941.3 456.8L941.6 457.7L941.9 453.8L942.2 453.9L942.6 454.9L942.9 453.6L943.2 456.0L943.5 457.4L943.8 457.9L944.2 454.1L944.5 458.8L944.8 456.0L945.1 458.9L945.5 455.8L945.8 456.0L946.1 455.8L946.5 456.5L946.8 454.6L947.1 455.1L947.5 457.3L947.8 458.3L948.1 455.9L948.3 459.8L948.6 456.1L948.9 455.8L949.2 459.7L949.5 458.3L949.8 455.9L950.1 459.1L950.4 454.7L950.6 454.4L950.9 455.0L951.2 456.3L951.6 457.9L951.9 457.2L952.2 456.5L952.5 458.2L952.8 457.3L953.1 454.2L953.4 457.3L953.7 454.0L954.0 457.0L954.4 455.9L954.7 456.2L955.0 456.3L955.3 456.1L955.6 454.2L956.0 455.0L956.3 454.5L956.6 453.1L956.9 456.2L957.3 457.2L957.6 456.8L957.9 453.7L958.2 455.6L958.6 456.3L958.9 455.1L959.2 453.1L959.5 455.2L959.9 452.2L960.2 454.8L960.5 454.9L960.8 452.6L961.1 455.3L961.5 456.1L961.8 454.8L962.1 451.5L962.4 452.6L962.7 453.7L963.1 451.9L963.4 454.3L963.7 455.8L964.0 451.8L964.3 454.4L964.6 454.1L964.9 453.7L965.2 455.4L965.5 454.2L965.8 452.1L966.1 454.8L966.4 452.3L966.7 451.8L967.0 454.2L967.3 454.9L967.6 455.0L967.8 454.5L968.1 451.7L968.4 451.0L968.7 450.7L968.9 453.8L969.2 452.8L969.5 452.4L969.7 452.8L970.0 451.7L970.2 453.5L970.5 453.1L970.7 454.9L971.0 453.8L971.2 453.5L971.6 453.2L972.0 451.9L972.4 452.7L972.8 452.5L973.2 451.6L973.5 453.2L973.9 456.6L974.2 453.9L974.6 454.3L974.9 453.8L975.2 454.5L975.5 457.1L975.8 454.9L976.1 455.3L976.4 459.3L976.7 458.7L977.0 459.1L977.3 458.5L977.5 458.8L977.8 458.7L978.1 458.8L978.3 462.1L978.6 461.0L978.9 461.5L979.1 465.3L979.4 462.0L979.7 461.9L979.9 465.7L980.2 466.4L980.5 463.3L980.7 463.3L981.0 463.8L981.3 463.6L981.5 465.0L981.8 466.8L982.1 468.4L982.4 469.1L982.7 464.7L983.0 466.3L983.3 466.7L983.6 467.9L984.0 469.2L984.3 467.8L984.6 467.5L984.9 466.4L985.1 468.5L985.4 464.6L985.7 467.4L986.0 467.1L986.3 463.9L986.5 463.5L986.8 463.9L987.1 467.0L987.4 465.2L987.7 462.4L988.0 466.1L988.3 462.2L988.6 460.7L988.9 464.4L989.2 464.6L989.5 460.2L989.8 462.6L990.1 462.3L990.4 462.6L990.7 461.8L991.0 456.6L991.3 457.4L991.6 456.5L991.9 455.4L992.2 459.3L992.5 456.7L992.8 454.2L993.1 453.5L993.4 452.5L993.7 455.6L994.0 454.9L994.3 451.4L994.6 451.1L995.0 451.2L995.3 449.9L995.6 451.8L995.9 450.3L996.2 450.6L996.5 452.1L996.8 448.0L997.1 447.4L997.5 448.4L997.8 449.2L998.1 447.3L998.4 448.3L998.7 446.9L999.0 447.3L999.4 444.9L999.7 447.3L1000.0 447.2L1000.3 444.6L1000.6 447.9L1000.9 449.5L1001.2 445.4L1001.5 445.8L1001.8 447.8L1002.1 449.7L1002.4 448.5L1002.7 447.5L1003.0 447.2L1003.3 448.2L1003.6 448.5L1003.9 446.8L1004.2 450.7L1004.5 450.8L1004.8 448.2L1005.1 450.9L1005.4 452.6L1005.7 451.3L1006.0 451.2L1006.3 452.3L1006.6 450.2L1007.0 450.8L1007.3 450.8L1007.6 452.8L1007.9 454.2L1008.2 454.5L1008.5 452.1L1008.8 454.7L1009.1 456.0L1009.4 454.8L1009.8 456.0L1010.1 458.7L1010.4 457.2L1010.7 454.8L1011.0 455.3L1011.3 455.5L1011.6 457.4L1011.9 459.3L1012.2 460.1L1012.5 461.8L1012.8 459.8L1013.1 460.1L1013.4 463.2L1013.7 461.3L1014.0 460.6L1014.3 460.9L1014.6 461.7L1014.9 463.4L1015.2 464.3L1015.5 461.5L1015.8 464.2L1016.1 465.9L1016.4 463.0L1016.7 462.6L1017.0 462.5L1017.2 463.0L1017.5 462.3L1017.8 465.3L1018.1 466.1L1018.5 462.9L1018.8 464.4L1019.1 467.2L1019.4 465.0L1019.7 462.3L1020.1 467.1L1020.4 465.4L1020.7 465.4L1021.0 462.1L1021.3 462.6L1021.6 462.4L1021.9 462.4L1022.2 462.6L1022.5 465.4L1022.8 463.2L1023.1 465.0L1023.4 463.5L1023.6 463.7L1023.9 461.2L1024.2 465.1L1024.5 464.3L1024.8 462.1L1025.1 460.5L1025.4 462.8L1025.7 461.6L1026.0 460.8L1026.3 461.2L1026.5 462.3L1026.8 458.9L1027.1 462.1L1027.4 460.9L1027.7 461.8L1028.0 458.0L1028.3 457.0L1028.6 459.2L1028.9 456.8L1029.2 456.3L1029.5 460.6L1029.8 459.2L1030.1 460.4L1030.5 459.8L1030.8 459.0L1031.1 455.8L1031.4 459.3L1031.7 457.0L1032.1 456.8L1032.4 458.0L1032.7 456.7L1033.0 457.6L1033.2 456.9L1033.5 459.0L1033.8 456.4L1034.1 456.6L1034.4 457.0L1034.7 456.8L1035.0 456.4L1035.3 455.2L1035.6 455.4L1035.9 455.5L1036.3 459.1L1036.6 458.6L1036.9 455.0L1037.2 456.0L1037.5 454.4L1037.8 459.2L1038.2 459.5L1038.5 456.2L1038.8 458.3L1039.1 456.2L1039.5 457.3L1039.8 459.4L1040.1 458.7L1040.4 458.3L1040.7 455.6L1041.1 455.9L1041.4 455.3L1041.7 455.2L1042.0 455.8L1042.4 456.9L1042.7 456.7L1043.0 457.9L1043.3 455.6L1043.6 455.6L1044.0 459.8L1044.3 455.4L1044.6 456.3L1044.9 458.6L1045.2 459.7L1045.5 459.6L1045.8 456.8L1046.1 459.5L1046.4 457.9L1046.7 460.0L1047.0 458.3L1047.3 456.2L1047.6 460.3L1047.9 459.5L1048.1 458.6L1048.4 457.4L1048.7 457.8L1049.0 456.6L1049.2 459.2L1049.5 456.4L1049.7 458.0L1050.0 456.5L1050.4 460.3L1050.7 457.5L1051.0 460.1L1051.3 460.4L1051.6 459.0L1051.9 460.4L1052.1 459.6L1052.3 459.5L1052.6 459.0L1052.8 458.9L1053.0 459.9L1053.2 460.2L1053.3 462.7L1053.5 462.8L1053.7 461.7L1053.9 459.2L1054.1 460.6L1054.3 462.4L1054.4 459.3L1054.6 462.8L1054.8 463.6L1055.1 463.3L1055.3 459.7L1055.5 459.8L1055.8 460.5L1056.1 463.9L1056.4 464.3L1056.7 462.1L1057.0 461.0L1057.4 464.8L1057.8 463.7L1058.2 465.1L1058.7 461.9L1059.2 463.8L1059.7 463.1L1060.3 462.9L1060.9 463.2L1061.5 462.8L1061.7 464.5L1061.9 462.8L1062.1 463.7L1062.3 465.1L1062.5 464.5L1062.8 461.6L1063.0 464.5L1063.2 462.4L1063.5 464.0L1063.7 465.0L1064.0 465.5L1064.2 460.4L1064.5 462.5L1064.7 462.1L1065.0 462.6L1065.3 464.2L1065.6 465.5L1065.8 463.8L1066.1 461.5L1066.4 465.0L1066.7 461.7L1067.0 460.4L1067.3 460.4L1067.6 464.6L1067.9 461.6L1068.2 464.1L1068.5 461.1L1068.8 463.3L1069.2 461.2L1069.5 461.4L1069.8 463.2L1070.1 460.6L1070.5 460.9L1070.8 461.6L1071.1 462.2L1071.5 460.7L1071.8 461.5L1072.1 461.2L1072.5 461.7L1072.8 464.6L1073.2 460.4L1073.5 460.5L1073.9 462.9L1074.2 459.9L1074.6 461.8L1074.9 462.5L1075.3 463.6L1075.7 463.7L1076.0 462.4L1076.4 463.9L1076.7 461.9L1077.1 463.9L1077.5 463.2L1077.8 462.3L1078.2 463.4L1078.5 461.6L1078.9 459.9L1079.3 459.5L1079.6 462.2L1080.0 459.7L1080.4 463.1L1080.7 460.3L1081.1 460.0L1081.5 459.4L1081.8 459.5L1082.2 464.0L1082.6 463.0L1082.9 462.1L1083.3 460.9L1083.6 460.2L1084.0 460.3L1084.4 459.0L1084.7 463.7L1085.1 462.3L1085.4 463.8L1085.8 463.2L1086.1 463.0L1086.5 459.0L1086.8 462.4L1087.2 460.6L1087.5 461.4L1087.9 460.0L1088.2 462.0L1088.6 461.2L1088.9 460.1L1089.2 462.2L1089.6 460.7L1089.9 459.1L1090.2 459.2L1090.6 463.2L1090.9 461.5L1091.2 462.6L1091.5 459.9L1091.8 460.4L1092.1 460.5L1092.4 460.5L1092.8 458.9L1093.1 462.3L1093.4 460.7L1093.6 463.1L1093.9 459.7L1094.2 458.9L1094.5 458.0L1094.8 459.3L1095.1 462.5L1095.3 461.1L1095.6 461.9L1095.8 460.4L1096.1 461.5L1096.4 457.8L1096.6 462.1L1096.8 459.0L1097.1 458.7L1097.3 462.6L1097.5 461.6L1097.8 458.1L1098.0 461.1L1098.2 459.6L1098.4 460.0L1098.6 462.3L1098.8 461.9L1099.0 458.5L1099.2 460.5L1099.3 460.5L1099.5 460.4L1099.7 458.1L1099.8 461.8L1100.0 460.9" fill="none" stroke="#5a5a5a" stroke-width="1.0" stroke-opacity="0.85" stroke-linejoin="round"/>
<path d="M133.0 491.3L134.0 492.1L135.5 492.7L137.2 493.6L139.0 494.2L140.9 495.0L142.8 496.1L144.6 496.8L146.2 497.3L147.7 498.2L149.3 498.8L150.8 499.6L152.5 500.0L154.2 500.4L156.2 501.0L157.6 500.8L159.1 500.8L160.6 500.9L162.3 500.7L163.9 500.4L165.6 500.3L167.3 500.1L169.0 499.7L170.6 499.5L172.2 499.0L173.7 498.7L175.5 498.1L177.2 497.6L178.9 497.2L180.5 496.2L182.2 495.7L183.8 494.7L185.3 494.1L186.8 493.6L188.3 493.1L190.1 492.4L191.9 492.3L193.7 492.0L195.3 491.7L197.0 491.6L198.5 492.0L200.0 492.0L201.9 492.2L203.7 492.9L205.4 493.5L207.0 494.8L208.7 495.9L210.5 497.6L212.2 500.3L214.0 502.5L215.7 504.7L217.5 505.8L219.2 506.3L220.8 505.5L222.5 504.7L224.3 503.1L226.2 501.7L227.7 500.4L229.3 498.5L231.0 496.4L232.7 494.4L234.5 492.5L236.2 491.0L237.9 489.8L239.6 489.6L241.3 489.6L243.0 490.3L244.7 491.0L246.4 491.4L248.0 492.2L249.5 493.1L251.4 493.8L253.1 494.4L254.7 495.5L256.4 496.5L258.3 497.3L259.8 498.1L261.5 499.2L263.3 500.4L265.0 501.1L266.8 502.0L268.5 502.7L270.0 503.3L271.9 503.3L273.6 502.8L275.3 502.2L276.9 501.2L278.7 500.1L280.3 499.0L281.8 496.8L283.4 494.5L285.1 492.9L286.9 491.3L288.9 490.8L290.4 491.2L292.0 492.2L293.7 493.6L295.4 495.3L297.2 497.4L298.9 498.9L300.6 500.4L302.1 501.8L303.5 502.8L305.5 503.0L307.1 503.1L308.6 502.2L310.2 501.3L312.2 500.2L313.6 499.6L315.0 498.4L316.6 497.0L318.2 495.7L319.9 494.2L321.6 493.0L323.3 492.3L325.1 491.6L326.8 491.6L328.3 491.9L329.8 493.2L331.4 494.5L332.9 496.0L334.4 498.1L336.0 499.7L337.6 501.3L339.3 502.6L341.0 503.5L342.8 503.9L344.2 503.9L345.7 503.1L347.1 502.4L348.6 501.4L350.1 500.2L351.7 498.8L353.2 497.6L354.8 496.1L356.5 494.9L358.1 493.8L359.8 492.8L361.5 492.2L363.2 491.9L364.6 492.1L366.2 492.1L367.7 492.7L369.3 493.0L371.0 493.8L372.6 494.5L374.3 495.2L376.0 496.2L377.6 497.0L379.3 497.8L380.9 498.4L382.4 499.2L383.9 499.8L385.4 500.5L386.7 501.0L388.0 501.2L390.1 501.0L391.9 501.0L393.6 500.6L395.1 499.8L396.6 498.9L398.0 498.4L399.5 497.6L401.0 497.2L402.6 496.8L404.1 496.7L405.7 496.7L407.2 496.4L408.8 496.8L410.3 496.8L411.9 496.9L413.5 497.1L415.2 497.3L416.9 497.1L418.6 497.3L420.1 497.3L421.6 497.0L423.2 496.8L424.8 496.4L426.5 496.4L428.1 495.8L429.7 495.6L431.4 495.4L433.0 494.9L434.6 495.2L436.1 494.8L437.6 495.2L439.4 495.4L441.1 495.9L442.9 496.4L444.6 496.9L446.3 497.7L447.9 498.3L449.5 499.2L451.0 499.4L452.3 499.9L453.6 500.4L455.6 500.1L457.1 499.4L458.4 498.5L459.8 497.4L461.7 496.8L463.0 496.5L464.5 496.4L466.2 496.0L467.9 496.0L469.6 495.9L471.3 496.0L473.0 495.8L474.7 495.9L476.2 496.1L478.0 496.0L479.9 496.2L481.6 496.5L483.3 497.3L484.9 497.5L486.4 497.7L487.9 497.9L489.8 497.8L491.4 497.7L492.9 497.5L494.4 497.1L496.0 496.8L497.5 495.7L499.0 494.2L500.4 493.2L502.1 492.1L504.0 491.8L505.4 492.7L506.9 493.9L508.5 495.4L510.2 497.1L511.9 498.6L513.6 500.0L515.3 501.3L517.0 501.8L518.7 501.6L520.4 500.6L522.1 499.5L523.8 498.2L525.5 496.7L527.1 495.6L528.7 494.7L530.2 494.5L532.1 495.0L533.8 496.6L535.5 498.8L537.1 500.5L538.7 502.0L540.4 502.7L542.1 501.7L543.9 500.4L545.6 498.0L547.3 496.1L549.0 494.1L550.6 492.9L552.4 492.9L554.2 493.6L555.9 494.5L557.6 495.5L559.3 495.8L560.9 495.7L562.2 494.5L563.7 493.9L565.5 493.1L568.0 493.8L569.2 494.2L570.6 495.1L572.2 496.4L573.8 497.8L575.6 499.0L577.3 500.5L579.2 502.0L580.9 503.4L582.7 504.6L584.3 505.7L585.9 506.8L587.3 507.3L588.5 507.4L591.0 506.7L592.9 504.3L594.4 500.8L595.7 497.6L597.2 495.8L599.1 495.6L600.8 496.0L602.6 496.9L604.5 497.4L606.1 496.4L607.6 495.4L609.3 493.8L611.2 493.0L613.3 493.0L614.7 493.5L616.2 494.9L617.8 496.3L619.4 498.1L621.1 499.8L622.9 501.1L624.6 502.6L626.2 503.3L627.8 503.1L629.5 502.2L631.3 499.9L633.0 497.3L634.7 494.4L636.3 491.2L637.9 488.7L639.5 486.7L641.0 486.3L642.8 487.4L644.5 490.3L646.0 493.8L647.6 498.1L649.3 501.1L651.2 503.2L652.6 503.4L654.2 503.3L655.9 502.2L657.6 501.4L659.3 500.2L661.0 499.0L662.7 497.9L664.2 497.5L665.7 497.5L667.7 498.0L669.6 499.9L671.3 501.7L673.0 503.6L674.5 505.1L676.0 505.7L678.0 503.8L679.8 500.1L681.5 496.2L683.2 494.4L685.0 494.9L686.8 497.3L688.7 499.8L690.5 500.7L692.3 499.3L694.1 496.8L695.9 494.0L697.8 491.7L699.3 490.2L700.9 488.4L702.5 487.1L704.4 486.8L706.6 487.1L707.9 487.8L709.4 489.1L711.0 490.5L712.7 492.3L714.4 494.0L716.2 496.0L717.9 497.5L719.6 499.7L721.1 501.2L722.6 502.7L724.5 504.6L726.2 506.8L727.8 509.0L729.4 510.9L731.0 512.7L732.6 513.2L734.3 513.3L735.9 512.5L737.4 510.6L739.0 508.3L740.7 505.6L742.3 502.8L744.0 500.0L745.7 497.9L747.4 496.0L749.0 494.6L750.7 493.7L752.4 492.6L754.1 491.7L755.8 491.3L757.5 490.4L759.1 490.1L760.6 489.7L762.0 489.0L764.0 488.7L765.7 487.9L767.1 487.8L768.7 488.5L770.7 490.0L772.0 491.7L773.3 494.1L774.7 497.6L776.2 500.7L777.7 504.2L779.3 507.2L781.0 509.9L782.7 511.5L784.6 512.1L786.0 511.5L787.5 510.8L789.0 509.1L790.7 507.2L792.4 505.3L794.1 502.7L795.8 500.7L797.5 498.0L799.2 495.6L800.8 493.3L802.3 491.4L803.7 489.8L805.0 488.7L807.1 486.9L808.8 485.9L810.3 485.2L811.7 485.2L813.1 485.3L814.7 486.0L816.6 487.3L818.0 488.2L819.4 489.8L820.9 491.8L822.4 494.0L824.0 496.6L825.6 498.8L827.3 501.2L829.0 503.4L830.7 505.3L832.4 506.7L834.1 507.5L835.6 508.0L837.2 508.1L838.8 507.9L840.4 507.4L842.1 506.7L843.8 505.9L845.5 505.3L847.2 504.2L848.8 503.4L850.3 502.3L851.8 501.3L853.2 500.3L854.5 499.8L856.6 498.0L858.4 496.1L860.0 494.0L861.5 492.0L863.0 490.3L864.5 489.1L866.2 488.5L867.8 489.3L869.4 490.1L871.0 491.9L872.7 494.1L874.3 496.1L876.0 498.0L877.7 499.8L879.3 500.7L880.9 501.5L882.5 502.3L884.0 503.2L885.6 503.3L887.2 503.7L888.8 503.7L890.5 503.2L892.4 502.7L893.8 501.5L895.4 500.0L897.0 498.5L898.6 496.0L900.3 493.9L902.0 491.8L903.6 490.0L905.3 488.0L906.9 486.7L908.5 486.0L910.0 485.7L911.8 486.7L913.5 488.2L915.2 490.9L916.8 493.8L918.4 497.3L920.0 500.1L921.5 503.0L923.0 505.3L924.5 506.7L926.4 506.9L928.2 506.6L930.0 505.1L931.7 503.6L933.4 501.9L934.9 500.9L936.2 500.3L938.2 502.1L939.6 504.9L942.0 504.5L943.2 503.0L944.7 500.1L946.2 496.5L947.9 492.4L949.6 488.6L951.4 484.9L953.2 481.9L954.9 479.8L956.6 479.3L958.2 480.2L959.8 482.5L961.4 486.1L962.9 490.0L964.5 494.7L966.1 498.9L967.8 502.6L969.5 505.9L971.2 507.5L972.7 507.9L974.3 508.1L975.9 507.6L977.6 506.4L979.3 505.2L981.0 503.6L982.6 502.2L984.3 501.0L985.8 499.4L987.3 498.4L988.7 497.1L990.7 495.9L992.5 494.7L994.2 493.5L995.8 492.8L997.4 492.1L998.8 491.6L1000.3 491.5L1002.2 492.5L1003.8 494.6L1005.4 497.0L1007.1 499.3L1009.0 500.6L1010.4 501.3L1012.1 501.2L1013.9 501.1L1015.7 501.0L1017.4 500.4L1019.0 500.3L1020.3 499.9L1021.3 499.8" fill="none" stroke="#585858" stroke-width="1.0" stroke-opacity="0.85" stroke-linejoin="round"/>
<path d="M133.0 576.7L133.8 576.7L134.8 576.6L136.0 576.6L137.3 576.5L138.7 576.5L140.1 576.2L141.7 576.3L143.3 575.8L145.0 575.9L146.8 575.8L148.6 575.6L150.3 575.8L152.1 575.4L153.9 575.6L155.6 575.6L157.4 575.2L159.0 575.5L160.5 575.4L162.0 575.4L163.5 575.1L165.0 575.3L166.6 575.4L168.1 575.3L169.7 575.3L171.3 575.4L172.9 575.4L174.4 575.7L176.0 575.5L177.6 575.6L179.1 575.8L180.7 576.0L182.2 575.7L183.7 575.6L185.2 576.1L186.6 576.1L188.0 576.0L189.7 575.9L191.4 575.7L193.1 575.6L194.7 575.6L196.3 575.6L197.9 575.2L199.5 575.5L201.0 575.4L202.5 574.9L204.1 575.3L205.6 575.1L207.1 575.3L208.6 575.1L210.1 575.3L211.6 575.3L213.2 575.6L214.8 575.8L216.5 576.0L218.1 576.5L219.7 577.1L221.3 577.7L222.8 578.2L224.4 578.8L226.0 579.4L227.5 579.7L229.0 580.0L230.5 580.4L232.0 580.8L233.5 580.7L235.2 580.5L236.7 580.3L238.3 579.6L239.7 578.9L241.2 578.3L242.7 577.6L244.2 576.8L245.7 576.4L247.2 576.0L248.9 575.1L250.6 575.0L252.4 574.9L253.8 574.8L255.2 574.6L256.7 574.9L258.2 574.9L259.8 575.1L261.4 575.3L263.0 575.9L264.6 576.4L266.3 576.4L267.9 576.7L269.6 577.2L271.2 577.3L272.8 577.8L274.3 578.1L275.8 578.1L277.3 578.0L278.7 578.0L280.4 577.9L282.1 577.8L283.7 577.5L285.2 576.8L286.7 576.1L288.1 575.5L289.6 575.0L291.0 574.3L292.5 573.7L294.0 573.5L295.6 573.4L297.3 572.9L299.0 573.2L300.4 573.3L301.8 573.4L303.3 573.6L304.8 574.1L306.3 574.8L307.8 575.5L309.4 576.2L311.0 576.5L312.6 577.2L314.2 577.7L315.8 578.4L317.4 579.0L319.0 579.4L320.6 579.8L322.2 580.6L323.7 580.4L325.3 580.6L326.9 580.5L328.4 580.3L330.1 580.0L331.7 579.5L333.3 579.0L334.9 578.2L336.6 577.9L338.2 577.2L339.8 576.6L341.4 575.7L343.0 575.2L344.5 574.7L346.0 574.2L347.5 573.4L348.9 573.2L350.3 572.9L351.6 573.1L353.5 573.1L355.2 573.6L356.7 574.2L358.2 575.3L359.6 576.4L361.0 577.4L362.4 578.2L363.9 579.2L365.4 580.0L367.1 580.2L369.0 580.8L370.3 580.3L371.7 580.4L373.2 579.8L374.7 579.8L376.3 579.1L377.9 578.3L379.6 577.8L381.2 577.4L382.9 576.7L384.5 576.0L386.2 575.3L387.8 574.8L389.4 574.3L391.0 573.7L392.5 573.4L393.9 573.2L395.3 573.0L397.1 572.9L398.9 573.4L400.6 573.8L402.2 574.6L403.7 575.4L405.3 576.3L406.8 576.7L408.2 577.4L409.7 578.6L411.2 579.1L412.7 579.7L414.3 579.9L415.9 580.0L417.6 579.5L419.3 579.4L421.1 579.3L422.8 579.0L424.6 578.3L426.3 578.3L427.9 577.6L429.4 577.2L430.8 577.0L432.1 576.7L433.2 576.6L435.7 577.4L436.7 578.8L439.0 579.5L440.2 579.7L441.6 579.5L443.3 579.1L445.0 578.5L446.9 578.2L448.7 577.4L450.5 577.2L452.3 576.5L453.9 575.9L455.3 575.6L456.5 575.1L458.8 574.2L459.7 573.1L461.7 572.8L462.9 573.1L464.4 573.4L465.9 574.3L467.7 574.6L469.4 575.5L471.2 576.0L473.0 576.6L474.7 577.3L476.2 577.7L478.0 578.2L479.8 579.6L481.5 580.2L483.1 581.2L484.8 581.6L486.3 582.0L487.9 581.0L489.7 579.0L491.4 575.6L493.0 572.0L494.7 568.6L496.3 565.8L498.0 565.3L499.7 566.7L501.4 570.8L503.1 575.2L504.9 580.4L506.6 584.3L508.3 587.0L510.0 587.9L511.8 588.0L513.6 586.8L515.3 585.7L517.0 583.8L518.5 582.8L520.5 579.9L522.2 576.4L523.9 573.3L525.8 570.9L527.4 570.8L529.2 571.5L530.9 572.4L532.7 573.3L534.5 573.9L536.2 573.1L537.8 571.8L539.5 570.2L541.3 569.3L543.3 570.2L544.7 571.9L546.2 574.2L547.8 577.1L549.4 580.4L551.1 583.9L552.8 586.5L554.6 588.6L556.4 589.2L557.9 589.4L559.5 588.5L561.2 586.8L562.9 585.0L564.7 583.1L566.4 581.1L568.0 578.9L569.6 576.5L571.1 574.9L572.4 574.1L574.6 572.4L576.4 571.8L578.0 571.1L579.6 571.2L581.2 570.9L583.0 571.6L584.7 572.3L586.5 573.1L588.2 573.9L590.0 573.7L591.8 572.2L593.6 569.6L595.3 566.6L597.1 564.5L598.7 564.2L600.6 568.4L602.3 575.5L604.0 582.6L606.0 586.6L607.5 586.3L609.2 584.3L610.9 581.1L612.7 578.1L614.5 575.9L616.2 575.2L617.9 577.0L619.6 580.0L621.3 584.1L623.0 588.2L624.7 590.5L626.4 591.2L628.1 588.9L629.7 584.5L631.4 578.9L633.1 573.6L634.8 568.8L636.6 566.4L638.2 566.8L639.8 568.4L641.5 571.0L643.2 574.1L644.9 577.2L646.6 579.5L648.3 580.4L650.0 580.1L651.6 578.5L653.3 576.5L655.0 573.9L656.7 571.5L658.3 569.9L660.0 569.3L661.6 570.3L663.2 572.5L664.8 575.2L666.4 577.5L668.1 580.3L669.8 582.1L671.6 582.8L673.1 582.1L674.5 580.4L676.0 577.9L677.6 575.5L679.1 573.2L680.8 570.7L682.5 568.7L684.3 567.3L686.2 567.3L687.6 568.0L689.0 569.0L690.5 570.7L692.0 572.8L693.6 575.2L695.2 577.5L696.9 580.0L698.5 583.0L700.1 585.1L701.8 587.2L703.4 589.0L705.0 590.2L706.6 590.9L708.2 590.9L709.9 590.4L711.6 589.7L713.3 588.9L715.0 587.8L716.8 586.7L718.5 584.9L720.1 583.1L721.7 581.8L723.2 579.8L724.6 578.2L725.9 576.8L727.0 575.4L729.6 569.5L731.1 562.8L732.4 557.3L734.3 556.6L735.7 558.5L737.2 562.0L738.9 566.4L740.6 571.9L742.3 577.3L744.1 582.2L745.8 586.5L747.4 589.6L749.1 591.1L750.8 591.8L752.5 591.5L754.1 591.1L755.7 590.1L757.4 588.4L759.0 586.9L760.6 585.1L762.3 581.8L763.9 578.5L765.5 575.2L767.2 571.9L768.9 569.2L770.7 567.9L772.2 567.7L773.7 568.0L775.3 569.2L776.9 570.3L778.5 571.8L780.1 573.8L781.6 575.1L783.1 576.6L784.6 578.0L786.4 580.0L788.1 581.9L789.7 584.1L791.3 586.3L792.9 588.2L794.6 589.6L796.2 589.7L797.9 589.6L799.6 588.7L801.3 587.6L803.1 586.1L804.7 584.2L806.4 582.4L808.0 580.5L809.8 578.5L811.5 575.5L813.2 572.5L814.9 569.6L816.5 567.5L818.1 566.1L820.0 565.9L821.9 567.3L823.7 569.7L825.4 571.4L826.9 572.5L828.8 571.6L830.3 569.9L832.7 569.3L834.0 570.1L835.6 571.3L837.4 573.1L839.3 574.7L841.1 576.4L842.9 578.0L844.5 579.8L845.8 581.1L848.1 584.9L849.5 588.8L851.6 589.5L853.0 588.3L854.5 585.9L856.2 583.3L858.0 580.2L859.8 576.9L861.6 574.8L863.3 573.2L865.0 572.2L866.6 572.2L868.3 572.7L870.0 573.7L871.7 574.3L873.3 574.9L875.0 575.1L876.7 575.1L878.4 574.6L880.1 574.2L881.8 573.5L883.5 573.3L885.1 573.0L886.6 572.9L888.5 574.1L890.2 575.4L891.8 577.0L893.5 578.2L895.4 578.7L897.0 578.5L898.7 577.3L900.5 575.8L902.3 574.5L904.0 573.3L905.6 572.3L907.0 572.3L909.3 575.9L910.9 581.0L912.9 583.5L914.4 582.4L916.0 579.6L917.8 576.0L919.6 573.3L921.6 571.6L923.1 572.1L924.7 573.1L926.4 574.4L928.1 576.4L929.9 577.9L931.6 579.3L933.3 579.9L935.0 579.4L936.6 578.0L938.3 576.7L940.0 575.1L941.7 573.8L943.3 572.5L945.0 572.2L946.7 573.2L948.5 574.9L950.3 577.3L952.0 579.7L953.7 581.6L955.2 583.2L956.6 583.5L958.7 579.8L960.3 573.6L962.4 570.2L963.7 570.5L965.2 572.1L966.8 574.0L968.5 576.2L970.3 578.6L972.1 580.5L974.0 581.1L975.5 581.2L977.1 581.0L978.8 580.6L980.5 579.7L982.2 578.7L983.9 577.5L985.6 576.8L987.2 576.0L988.7 575.2L990.5 574.7L992.2 573.9L993.9 573.8L995.5 573.2L997.1 572.9L998.7 572.9L1000.3 573.1L1002.0 573.6L1003.7 574.8L1005.4 575.9L1007.1 577.6L1008.8 578.8L1010.5 580.0L1012.0 580.8L1013.7 580.6L1015.4 580.3L1017.0 580.0L1018.6 579.1L1020.0 578.8L1021.3 578.4L1023.2 578.4L1024.6 579.3L1026.6 578.4L1028.0 576.3L1029.6 573.1L1031.4 569.4L1033.2 566.2L1035.0 564.0L1036.8 562.8L1038.5 564.2L1040.3 566.8L1042.1 570.3L1043.8 574.4L1045.5 577.5L1047.0 579.7L1049.2 580.9L1051.3 580.2L1053.1 579.6L1054.3 578.7" fill="none" stroke="#585858" stroke-width="1.0" stroke-opacity="0.85" stroke-linejoin="round"/>
<path d="M133.0 651.0L134.2 650.1L136.0 649.1L138.0 647.6L140.0 646.4L141.7 645.6L143.6 643.9L145.3 642.9L147.5 642.6L148.7 642.4L150.0 642.7L151.4 643.3L152.9 643.8L154.7 644.1L156.7 644.7L159.0 645.6L160.3 645.6L161.7 646.1L163.3 646.5L165.0 646.9L166.8 647.5L168.7 648.0L170.5 648.3L172.4 648.8L174.2 649.3L176.0 649.6L177.6 650.0L179.1 650.3L180.5 650.6L181.6 651.1L182.5 651.3" fill="none" stroke="#505050" stroke-width="1" stroke-opacity="0.85"/>
<path d="M190.0 650.9L191.2 650.0L193.0 648.3L195.0 647.0L197.0 645.3L198.6 644.2L200.4 643.0L202.2 641.6L204.0 641.1L205.8 641.1L207.7 642.3L209.7 644.5L211.7 647.1L213.3 649.4L214.5 651.2" fill="none" stroke="#505050" stroke-width="1" stroke-opacity="0.85"/>
<path d="M228.0 651.2L229.0 650.6L230.4 650.6L232.1 650.1L234.0 649.8L236.0 648.9L238.0 648.2L239.4 646.9L241.0 646.0L242.6 644.2L244.3 642.6L246.0 641.1L247.6 639.8L249.3 638.5L250.9 638.0L252.4 637.8L254.3 638.8L256.3 640.7L258.2 643.2L260.0 646.0L261.6 649.0L263.0 651.1L264.0 652.8" fill="none" stroke="#505050" stroke-width="1" stroke-opacity="0.85"/>
<path d="M276.0 652.0L277.0 651.9L278.4 651.5L280.0 651.2L282.1 650.8L284.5 649.8L285.8 649.4L287.2 648.7L288.7 647.9L290.3 646.7L292.0 645.8L293.7 645.2L295.5 644.3L297.2 643.4L298.9 643.0L300.5 642.4L302.0 642.4L303.8 642.8L305.7 643.4L307.6 644.4L309.5 645.7L311.3 647.1L312.9 648.3L314.4 649.6L315.6 650.7L316.6 651.0" fill="none" stroke="#505050" stroke-width="1" stroke-opacity="0.85"/>
<path d="M340.0 652.2L341.1 651.4L342.7 650.9L344.6 650.1L346.6 649.4L348.7 648.3L350.2 647.5L351.8 646.5L353.5 645.4L355.2 644.6L356.9 643.7L358.6 643.2L360.3 642.8L362.1 643.7L364.0 644.6L365.9 646.0L367.8 647.6L369.5 649.1L370.9 650.5L372.0 651.1" fill="none" stroke="#505050" stroke-width="1" stroke-opacity="0.85"/>
<path d="M384.0 651.8L384.8 651.9L385.8 651.2L387.1 651.0L389.3 650.5L392.4 649.9L393.5 649.5L394.7 649.4L396.0 649.3L397.5 649.1L399.1 648.7L400.8 648.4L402.5 648.1L404.2 647.8L406.0 647.7L407.8 647.3L409.6 647.1L411.4 646.9L413.1 646.6L414.8 646.2L416.3 646.1L417.8 646.2L419.2 646.1L420.4 646.1L421.5 645.8L424.7 646.4L426.9 647.7L428.4 649.2L429.4 650.2L430.3 651.3" fill="none" stroke="#505050" stroke-width="1" stroke-opacity="0.85"/>
<path d="M440.0 652.2L441.0 651.8L442.3 651.5L443.8 651.1L445.5 650.8L447.3 650.5L449.1 650.0L450.7 649.7L452.2 649.7L453.5 649.7L454.9 650.1L456.3 650.4L457.9 650.2L459.6 650.3L461.7 649.7L463.0 649.6L464.4 648.9L465.9 648.2L467.5 647.3L469.2 646.6L470.9 646.1L472.7 645.0L474.4 644.4L476.1 643.6L477.7 643.0L479.3 642.6L480.7 642.0L482.0 642.1L484.2 642.0L486.3 642.8L488.2 644.1L490.0 645.2L491.5 646.4L492.7 647.6L493.7 648.4" fill="none" stroke="#505050" stroke-width="1" stroke-opacity="0.85"/>
<path d="M516.0 651.8L517.1 650.6L520.0 648.7L521.1 648.6L522.5 648.6L523.9 648.1L525.6 648.2L527.3 647.8L529.1 647.7L530.9 647.2L532.7 647.2L534.5 646.9L536.0 646.7L537.6 646.2L539.3 646.1L541.0 645.5L542.7 645.2L544.5 644.8L546.2 644.4L547.8 644.2L549.3 644.0L550.7 643.9L552.0 643.9L554.5 644.9L556.6 646.4L558.3 648.4L559.7 650.0L560.8 651.3" fill="none" stroke="#505050" stroke-width="1" stroke-opacity="0.85"/>
<path d="M572.4 650.7L573.4 650.2L574.9 649.8L576.5 649.3L578.4 648.2L580.3 647.8L582.2 647.2L584.0 646.9L585.6 647.1L587.2 647.3L588.8 647.5L590.4 647.7L592.1 648.2L593.9 648.1L595.8 648.3L597.3 648.1L598.9 647.7L600.6 647.5L602.3 647.0L604.1 646.5L605.8 646.0L607.5 645.8L609.1 645.3L610.5 645.2L611.8 645.5L614.4 646.3L616.4 648.2L617.9 650.0L619.0 651.3" fill="none" stroke="#505050" stroke-width="1" stroke-opacity="0.85"/>
<path d="M640.0 651.9L640.9 651.6L642.1 650.9L643.5 649.5L645.0 648.8L646.7 647.6L648.5 646.5L650.3 645.2L652.1 644.6L653.8 643.7L655.5 643.3L657.0 643.0L658.8 643.3L660.7 643.9L662.6 644.7L664.5 646.0L666.2 647.4L667.9 648.6L669.4 649.8L670.6 650.4L671.6 651.3" fill="none" stroke="#505050" stroke-width="1" stroke-opacity="0.85"/>
<path d="M683.0 651.9L683.7 650.6L686.2 648.2L687.4 647.8L688.8 646.8L690.5 645.8L692.3 645.0L694.2 644.0L696.1 643.2L697.8 642.5L699.4 641.9L700.7 642.0L703.5 644.2L705.4 648.4L706.6 651.0" fill="none" stroke="#505050" stroke-width="1" stroke-opacity="0.85"/>
<path d="M728.0 652.0L728.9 651.8L730.0 651.5L731.4 651.0L732.9 650.5L734.5 650.2L736.2 649.7L738.0 649.1L739.8 648.7L741.5 648.2L743.0 647.8L744.5 647.6L746.1 647.2L747.8 646.7L749.5 646.2L751.2 645.6L752.9 645.3L754.5 644.9L756.1 644.9L757.6 644.7L759.0 644.7L761.1 645.4L763.1 646.0L765.0 647.4L766.8 648.4L768.4 649.7L769.7 650.6L770.7 651.1" fill="none" stroke="#505050" stroke-width="1" stroke-opacity="0.85"/>
<path d="M780.0 652.2L780.9 652.0L782.1 652.5L783.5 652.3L785.3 652.2L787.5 651.4L788.8 650.2L790.2 648.9L791.8 647.2L793.4 645.7L795.1 643.9L796.9 641.8L798.6 640.3L800.3 639.1L802.0 638.3L803.5 638.1L805.4 638.4L807.3 639.8L809.2 641.5L811.0 643.7L812.8 645.9L814.3 648.2L815.6 650.0L816.6 651.2" fill="none" stroke="#505050" stroke-width="1" stroke-opacity="0.85"/>
<path d="M833.0 652.0L834.4 649.0L837.0 645.6L838.3 643.8L839.8 641.8L841.4 640.3L843.4 638.9L845.8 638.9L847.1 639.3L848.7 640.3L850.4 641.5L852.3 642.6L854.2 643.9L856.0 645.6L857.9 647.0L859.6 648.2L861.1 649.4L862.3 650.5L863.3 651.4" fill="none" stroke="#505050" stroke-width="1" stroke-opacity="0.85"/>
<path d="M883.0 652.0L884.2 651.1L886.6 649.8L887.9 649.4L889.5 648.5L891.2 648.3L893.2 647.6L895.4 647.0L896.8 646.6L898.3 645.9L899.9 645.7L901.7 645.1L903.4 644.5L905.1 644.4L906.8 643.9L908.5 644.0L910.0 643.8L911.9 644.6L913.9 645.3L915.8 646.6L917.6 647.9L919.2 649.2L920.6 650.5L921.6 651.1" fill="none" stroke="#505050" stroke-width="1" stroke-opacity="0.85"/>
<path d="M936.2 651.2L937.8 650.7L940.0 650.3L942.0 649.8L944.4 650.3L946.0 651.0" fill="none" stroke="#505050" stroke-width="1" stroke-opacity="0.85"/>
<path d="M955.0 651.8L956.0 651.8L957.5 651.4L959.5 649.8L961.0 647.5L962.9 644.6L964.8 641.2L966.7 638.2L968.3 636.2L970.4 634.1L972.2 633.6L974.0 634.9L975.6 638.3L977.4 642.9L978.9 647.8L980.0 651.1" fill="none" stroke="#505050" stroke-width="1" stroke-opacity="0.85"/>
<text x="133.0" y="338.5" font-size="13" fill="#c4c4cc" textLength="86.6" lengthAdjust="spacingAndGlyphs">amax: 11170.0</text>
<text x="133.0" y="352.2" font-size="13" fill="#c4c4cc" textLength="81.9" lengthAdjust="spacingAndGlyphs">mean: 4628.0</text>
<text x="133.0" y="378.6" font-size="13" fill="#232627" textLength="88.6" lengthAdjust="spacingAndGlyphs">amax: 23621.7</text>
<text x="133.0" y="392.3" font-size="13" fill="#232627" textLength="81.9" lengthAdjust="spacingAndGlyphs">mean: 8099.7</text>
<text x="133.0" y="418.4" font-size="13" fill="#232627" textLength="81.1" lengthAdjust="spacingAndGlyphs">amax: 1618.1</text>
<text x="133.0" y="432.1" font-size="13" fill="#232627" textLength="81.9" lengthAdjust="spacingAndGlyphs">mean: 1226.1</text>
<text x="133.0" y="457.9" font-size="13" fill="#232627" textLength="88.6" lengthAdjust="spacingAndGlyphs">amax: 14627.4</text>
<text x="133.0" y="471.6" font-size="13" fill="#232627" textLength="86.3" lengthAdjust="spacingAndGlyphs">mean: -1253.4</text>
<text x="133.0" y="496.8" font-size="13" fill="#232627" textLength="81.1" lengthAdjust="spacingAndGlyphs">amax: 5373.0</text>
<text x="133.0" y="510.5" font-size="13" fill="#232627" textLength="80.9" lengthAdjust="spacingAndGlyphs">mean: 1179.0</text>
<text x="133.0" y="574.8" font-size="13" fill="#232627" textLength="81.1" lengthAdjust="spacingAndGlyphs">amax: 7547.1</text>
<text x="133.0" y="588.5" font-size="13" fill="#232627" textLength="78.9" lengthAdjust="spacingAndGlyphs">mean: -687.1</text>
<text x="133.0" y="653.1" font-size="13" fill="#232627" textLength="80.1" lengthAdjust="spacingAndGlyphs">amax: 3711.4</text>
<line x1="496.30" y1="319.10" x2="496.30" y2="356.70" stroke="#1c1ca8" stroke-width="1.4"/>
<text x="498.5" y="354.5" font-size="12" fill="#2a2aa8">P</text>
<line x1="496.30" y1="359.30" x2="496.30" y2="396.70" stroke="#1c1ca8" stroke-width="1.4"/>
<text x="498.5" y="394.5" font-size="12" fill="#2a2aa8">P</text>
<line x1="496.30" y1="399.30" x2="496.30" y2="436.60" stroke="#1c1ca8" stroke-width="1.4"/>
<text x="498.5" y="434.4" font-size="12" fill="#2a2aa8">P</text>
<line x1="496.30" y1="439.30" x2="496.30" y2="475.60" stroke="#1c1ca8" stroke-width="1.4"/>
<text x="498.5" y="473.4" font-size="12" fill="#2a2aa8">P</text>
<line x1="496.30" y1="478.30" x2="496.30" y2="514.70" stroke="#1c1ca8" stroke-width="1.4"/>
<text x="498.5" y="512.5" font-size="12" fill="#2a2aa8">P</text>
<line x1="496.30" y1="517.30" x2="496.30" y2="553.80" stroke="#1c1ca8" stroke-width="1.4"/>
<text x="498.5" y="551.6" font-size="12" fill="#2a2aa8">P</text>
<line x1="496.30" y1="556.40" x2="496.30" y2="592.80" stroke="#1c1ca8" stroke-width="1.4"/>
<text x="498.5" y="590.6" font-size="12" fill="#2a2aa8">P</text>
<line x1="496.30" y1="595.20" x2="496.30" y2="631.50" stroke="#1c1ca8" stroke-width="1.4"/>
<text x="498.5" y="629.3" font-size="12" fill="#2a2aa8">P</text>
<line x1="496.30" y1="634.00" x2="496.30" y2="653.50" stroke="#1c1ca8" stroke-width="1.4"/>
<line x1="734.40" y1="319.10" x2="734.40" y2="356.70" stroke="#ffffff" stroke-width="1.1"/>
<text x="736.4" y="333.1" font-size="13" fill="#f4f4ff">mB: 5.49</text>
<line x1="504.60" y1="359.30" x2="504.60" y2="396.70" stroke="#0c9a0c" stroke-width="1.1"/>
<text x="507.0" y="373.3" font-size="13" fill="#0c960c" textLength="51.3" lengthAdjust="spacingAndGlyphs" stroke="#0c960c" stroke-width="0.45">mB: 6.15</text>
<line x1="906.20" y1="399.30" x2="906.20" y2="436.60" stroke="#0c9a0c" stroke-width="1.1"/>
<text x="908.6" y="413.3" font-size="13" fill="#0c960c" textLength="51.3" lengthAdjust="spacingAndGlyphs" stroke="#0c960c" stroke-width="0.45">mB: 5.55</text>
<line x1="634.70" y1="439.30" x2="634.70" y2="475.60" stroke="#111" stroke-width="1.1"/>
<text x="636.7" y="453.3" font-size="13" fill="#232627">mB: 5.93</text>
<line x1="956.60" y1="478.30" x2="956.60" y2="514.70" stroke="#0c9a0c" stroke-width="1.1"/>
<text x="959.0" y="492.3" font-size="13" fill="#0c960c" textLength="51.3" lengthAdjust="spacingAndGlyphs" stroke="#0c960c" stroke-width="0.45">mB: 5.58</text>
<line x1="490.20" y1="517.30" x2="490.20" y2="553.80" stroke="#111" stroke-width="1.1"/>
<text x="492.2" y="531.3" font-size="13" fill="#232627">mB: 5.79</text>
<line x1="734.30" y1="556.40" x2="734.30" y2="592.80" stroke="#0c9a0c" stroke-width="1.1"/>
<text x="736.7" y="570.4" font-size="13" fill="#0c960c" textLength="51.3" lengthAdjust="spacingAndGlyphs" stroke="#0c960c" stroke-width="0.45">mB: 6.41</text>
<line x1="770.90" y1="595.20" x2="770.90" y2="631.50" stroke="#111" stroke-width="1.1"/>
<text x="772.9" y="609.2" font-size="13" fill="#232627">mB: 5.66</text>
<line x1="996.00" y1="634.00" x2="996.00" y2="653.50" stroke="#111" stroke-width="1.1"/>
<text x="998.0" y="648.0" font-size="13" fill="#232627">mB: 6.13</text>
<rect x="980.7" y="319.8" width="118.3" height="26.2" fill="#840000" fill-opacity="0.74" stroke="#fff" stroke-width="1"/>
<text x="986.5" y="336.6" font-size="13" fill="#fff" textLength="106.0" lengthAdjust="spacingAndGlyphs">low SNR: 1.6 &lt; 2.5</text>
<rect x="980.7" y="439.8" width="118.3" height="26.2" fill="#840000" fill-opacity="0.74" stroke="#fff" stroke-width="1"/>
<text x="986.5" y="456.6" font-size="13" fill="#fff" textLength="106.0" lengthAdjust="spacingAndGlyphs">low SNR: 1.6 &lt; 2.5</text>
<rect x="980.7" y="635.3" width="118.3" height="26.2" fill="#840000" fill-opacity="0.74" stroke="#fff" stroke-width="1"/>
<text x="986.5" y="652.1" font-size="13" fill="#fff" textLength="106.0" lengthAdjust="spacingAndGlyphs">low SNR: 2.0 &lt; 2.5</text>
<rect x="992.3" y="517.3" width="107.4" height="27.6" fill="#ffffff" fill-opacity="0.78" stroke="#222" stroke-width="1"/>
<text x="997.4" y="536.3" font-size="13" fill="#31363b" textLength="95.8" lengthAdjust="spacingAndGlyphs">waiting for data</text>
<rect x="992.3" y="595.7" width="107.4" height="26.3" fill="#ffffff" fill-opacity="0.78" stroke="#222" stroke-width="1"/>
<text x="997.4" y="613.4" font-size="13" fill="#31363b" textLength="95.8" lengthAdjust="spacingAndGlyphs">waiting for data</text>
</g>
<rect x="1107" y="326" width="5.8" height="46.6" rx="2.9" fill="#8f9193"/>
<line x1="133.40" y1="653.50" x2="1119.60" y2="653.50" stroke="#111" stroke-width="1.2"/>
<line x1="155.13" y1="653.50" x2="155.13" y2="658.50" stroke="#111" stroke-width="1"/>
<line x1="181.37" y1="653.50" x2="181.37" y2="658.50" stroke="#111" stroke-width="1"/>
<line x1="207.62" y1="653.50" x2="207.62" y2="658.50" stroke="#111" stroke-width="1"/>
<line x1="233.86" y1="653.50" x2="233.86" y2="664.50" stroke="#111" stroke-width="1"/>
<line x1="260.10" y1="653.50" x2="260.10" y2="658.50" stroke="#111" stroke-width="1"/>
<line x1="286.35" y1="653.50" x2="286.35" y2="658.50" stroke="#111" stroke-width="1"/>
<line x1="312.59" y1="653.50" x2="312.59" y2="658.50" stroke="#111" stroke-width="1"/>
<line x1="338.84" y1="653.50" x2="338.84" y2="658.50" stroke="#111" stroke-width="1"/>
<line x1="365.08" y1="653.50" x2="365.08" y2="664.50" stroke="#111" stroke-width="1"/>
<line x1="391.32" y1="653.50" x2="391.32" y2="658.50" stroke="#111" stroke-width="1"/>
<line x1="417.57" y1="653.50" x2="417.57" y2="658.50" stroke="#111" stroke-width="1"/>
<line x1="443.81" y1="653.50" x2="443.81" y2="658.50" stroke="#111" stroke-width="1"/>
<line x1="470.06" y1="653.50" x2="470.06" y2="658.50" stroke="#111" stroke-width="1"/>
<line x1="496.30" y1="653.50" x2="496.30" y2="664.50" stroke="#111" stroke-width="1"/>
<line x1="522.54" y1="653.50" x2="522.54" y2="658.50" stroke="#111" stroke-width="1"/>
<line x1="548.79" y1="653.50" x2="548.79" y2="658.50" stroke="#111" stroke-width="1"/>
<line x1="575.03" y1="653.50" x2="575.03" y2="658.50" stroke="#111" stroke-width="1"/>
<line x1="601.28" y1="653.50" x2="601.28" y2="658.50" stroke="#111" stroke-width="1"/>
<line x1="627.52" y1="653.50" x2="627.52" y2="664.50" stroke="#111" stroke-width="1"/>
<line x1="653.76" y1="653.50" x2="653.76" y2="658.50" stroke="#111" stroke-width="1"/>
<line x1="680.01" y1="653.50" x2="680.01" y2="658.50" stroke="#111" stroke-width="1"/>
<line x1="706.25" y1="653.50" x2="706.25" y2="658.50" stroke="#111" stroke-width="1"/>
<line x1="732.50" y1="653.50" x2="732.50" y2="658.50" stroke="#111" stroke-width="1"/>
<line x1="758.74" y1="653.50" x2="758.74" y2="664.50" stroke="#111" stroke-width="1"/>
<line x1="784.98" y1="653.50" x2="784.98" y2="658.50" stroke="#111" stroke-width="1"/>
<line x1="811.23" y1="653.50" x2="811.23" y2="658.50" stroke="#111" stroke-width="1"/>
<line x1="837.47" y1="653.50" x2="837.47" y2="658.50" stroke="#111" stroke-width="1"/>
<line x1="863.72" y1="653.50" x2="863.72" y2="658.50" stroke="#111" stroke-width="1"/>
<line x1="889.96" y1="653.50" x2="889.96" y2="664.50" stroke="#111" stroke-width="1"/>
<line x1="916.20" y1="653.50" x2="916.20" y2="658.50" stroke="#111" stroke-width="1"/>
<line x1="942.45" y1="653.50" x2="942.45" y2="658.50" stroke="#111" stroke-width="1"/>
<line x1="968.69" y1="653.50" x2="968.69" y2="658.50" stroke="#111" stroke-width="1"/>
<line x1="994.94" y1="653.50" x2="994.94" y2="658.50" stroke="#111" stroke-width="1"/>
<line x1="1021.18" y1="653.50" x2="1021.18" y2="664.50" stroke="#111" stroke-width="1"/>
<line x1="1047.42" y1="653.50" x2="1047.42" y2="658.50" stroke="#111" stroke-width="1"/>
<line x1="1073.67" y1="653.50" x2="1073.67" y2="658.50" stroke="#111" stroke-width="1"/>
<line x1="1099.91" y1="653.50" x2="1099.91" y2="658.50" stroke="#111" stroke-width="1"/>
<text x="233.9" y="682.4" font-size="13" fill="#232627" text-anchor="middle">-30</text>
<text x="365.1" y="682.4" font-size="13" fill="#232627" text-anchor="middle">-15</text>
<text x="496.3" y="682.4" font-size="13" fill="#232627" text-anchor="middle">0</text>
<text x="627.5" y="682.4" font-size="13" fill="#232627" text-anchor="middle">15</text>
<text x="758.7" y="682.4" font-size="13" fill="#232627" text-anchor="middle">30</text>
<text x="890.0" y="682.4" font-size="13" fill="#232627" text-anchor="middle">45</text>
<text x="1021.2" y="682.4" font-size="13" fill="#232627" text-anchor="middle">60</text>
<polygon points="233.9,653.8 225.9,669.0 241.9,669.0" fill="#222"/>
<polygon points="452.6,653.8 444.6,669.0 460.6,669.0" fill="#222"/>
<polygon points="1021.2,653.8 1013.2,669.0 1029.2,669.0" fill="#222"/>
<g transform="translate(1107.5 722.5) rotate(-45)"><rect x="-5" y="-5.5" width="10" height="10" rx="2" fill="#e4e8ff" stroke="#7a80d0" stroke-width="1"/><rect x="-3.8" y="4.5" width="2.6" height="5" rx="1" fill="#f8b020"/><rect x="1.2" y="4.5" width="2.6" height="5" rx="1" fill="#f8b020"/><line x1="0" y1="-5.5" x2="0" y2="-9" stroke="#8090e0" stroke-width="1.5"/></g>
</svg></body></html>
